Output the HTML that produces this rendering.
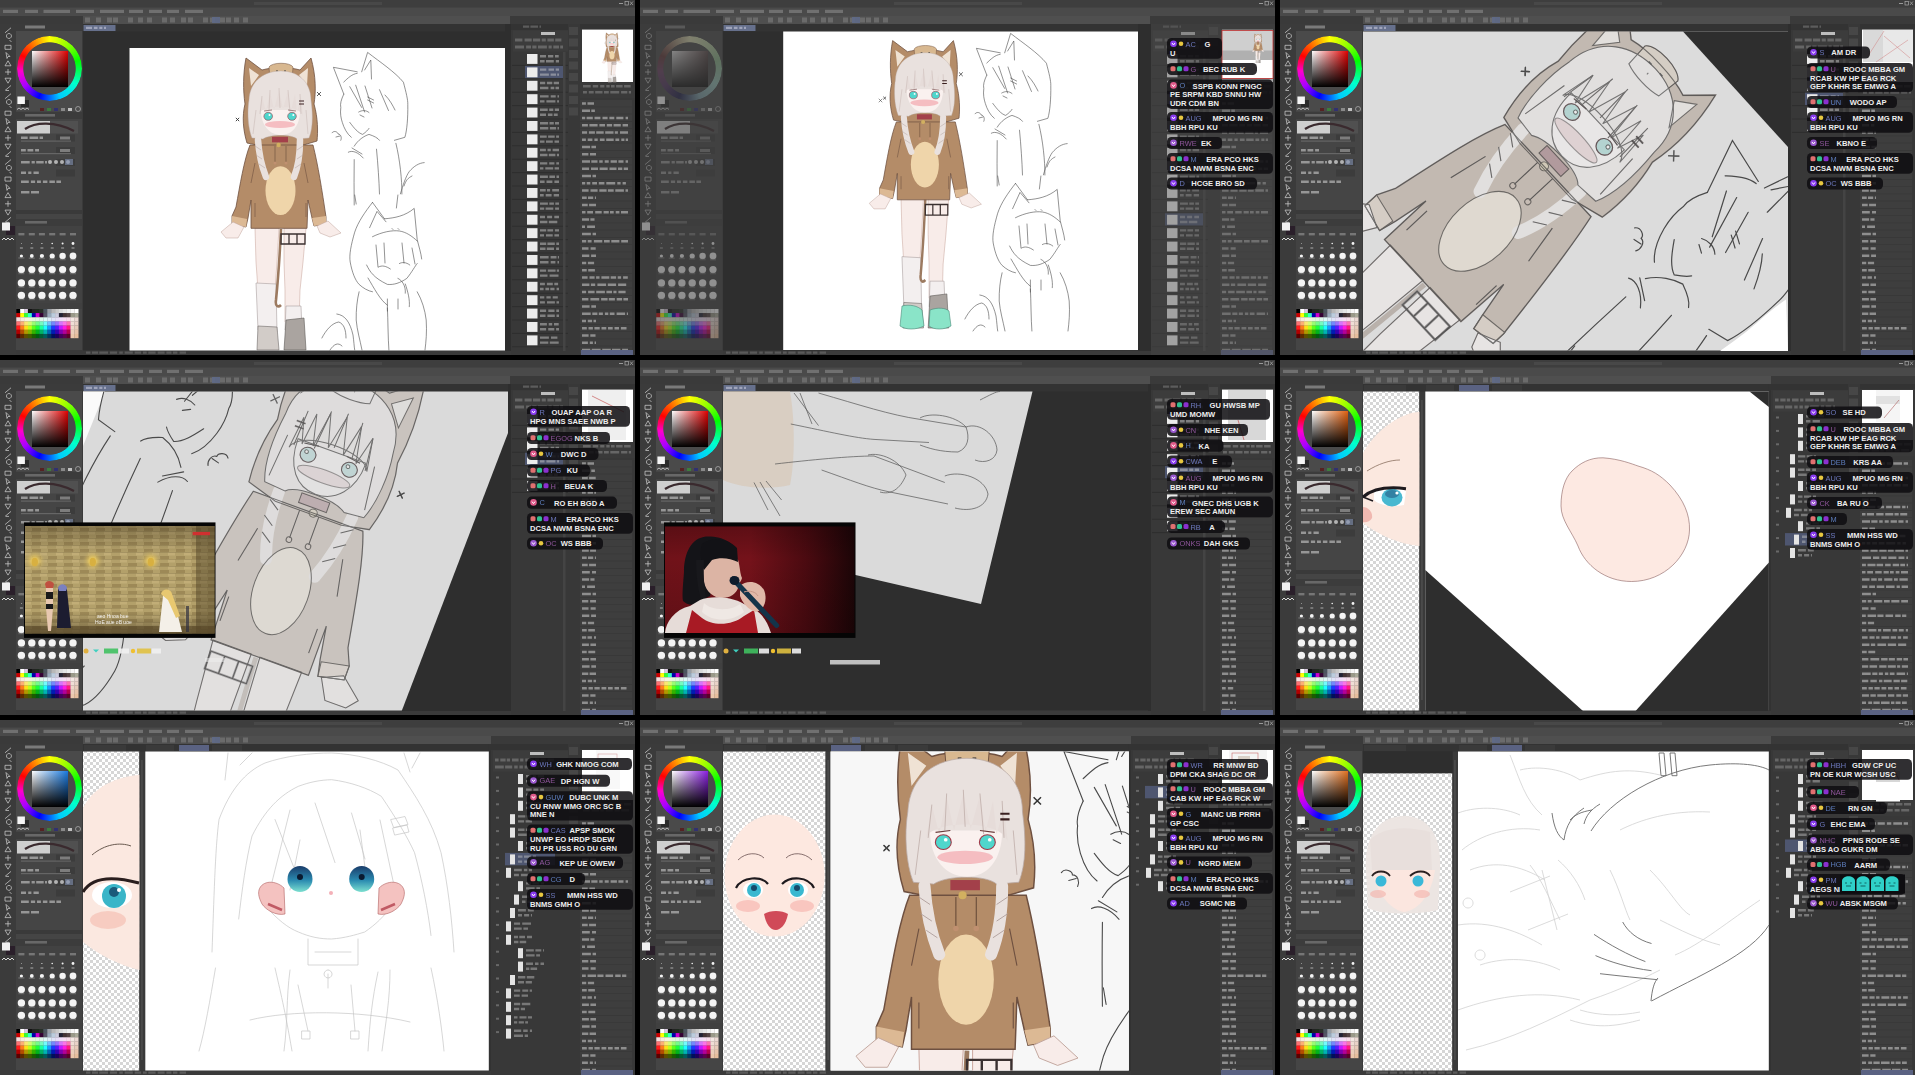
<!DOCTYPE html><html><head><meta charset="utf-8"><style>html,body{margin:0;padding:0;background:#000;width:1915px;height:1075px;overflow:hidden;font-family:"Liberation Sans",sans-serif}.cell{position:absolute;width:635px;height:355px;overflow:hidden;background:#3a3a3a}.cell>svg{position:absolute;left:0;top:0}.wheel{position:absolute;width:65px;height:65px;border-radius:50%;background:conic-gradient(#ff0 0deg,#8f0 40deg,#0f0 75deg,#0fc 120deg,#0cf 160deg,#00f 200deg,#a0f 235deg,#f0c 265deg,#f00 295deg,#f80 330deg,#ff0 360deg);-webkit-mask:radial-gradient(circle,transparent 25.8px,#000 26.6px);mask:radial-gradient(circle,transparent 25.8px,#000 26.6px)}.sv{position:absolute;width:36px;height:36px}</style></head><body><svg width="0" height="0" style="position:absolute"><defs><pattern id="chk" width="6" height="6" patternUnits="userSpaceOnUse"><rect width="6" height="6" fill="#fff"/><rect width="3" height="3" fill="#d6d6d6"/><rect x="3" y="3" width="3" height="3" fill="#d6d6d6"/></pattern><g id="pal"><rect x="0.0" y="0.0" width="4.1" height="4.3" fill="#000" /><rect x="3.9" y="0.0" width="4.1" height="4.3" fill="#fff" /><rect x="7.8" y="0.0" width="4.1" height="4.3" fill="#d8c8e0" /><rect x="11.6" y="0.0" width="4.1" height="4.3" fill="#111" /><rect x="15.5" y="0.0" width="4.1" height="4.3" fill="#222" /><rect x="19.4" y="0.0" width="4.1" height="4.3" fill="#1e2a1e" /><rect x="23.2" y="0.0" width="4.1" height="4.3" fill="#283028" /><rect x="27.1" y="0.0" width="4.1" height="4.3" fill="#4b5560" /><rect x="31.0" y="0.0" width="4.1" height="4.3" fill="#9aa0a8" /><rect x="34.9" y="0.0" width="4.1" height="4.3" fill="#b8b8b8" /><rect x="38.8" y="0.0" width="4.1" height="4.3" fill="#c8c8c8" /><rect x="42.6" y="0.0" width="4.1" height="4.3" fill="#d8d8d8" /><rect x="46.5" y="0.0" width="4.1" height="4.3" fill="#e4e4e4" /><rect x="50.4" y="0.0" width="4.1" height="4.3" fill="#eeeeee" /><rect x="54.2" y="0.0" width="4.1" height="4.3" fill="#f6f6f6" /><rect x="58.1" y="0.0" width="4.1" height="4.3" fill="#ffffff" /><rect x="0.0" y="4.1" width="4.1" height="4.3" fill="#c00" /><rect x="3.9" y="4.1" width="4.1" height="4.3" fill="#ff0" /><rect x="7.8" y="4.1" width="4.1" height="4.3" fill="#3f3" /><rect x="11.6" y="4.1" width="4.1" height="4.3" fill="#3fc" /><rect x="15.5" y="4.1" width="4.1" height="4.3" fill="#00a" /><rect x="19.4" y="4.1" width="4.1" height="4.3" fill="#c0c" /><rect x="23.2" y="4.1" width="4.1" height="4.3" fill="#303" /><rect x="27.1" y="4.1" width="4.1" height="4.3" fill="#556" /><rect x="31.0" y="4.1" width="4.1" height="4.3" fill="#9ab" /><rect x="34.9" y="4.1" width="4.1" height="4.3" fill="#bcd" /><rect x="38.8" y="4.1" width="4.1" height="4.3" fill="#ccd" /><rect x="42.6" y="4.1" width="4.1" height="4.3" fill="#223" /><rect x="46.5" y="4.1" width="4.1" height="4.3" fill="#433" /><rect x="50.4" y="4.1" width="4.1" height="4.3" fill="#544" /><rect x="54.2" y="4.1" width="4.1" height="4.3" fill="#998" /><rect x="58.1" y="4.1" width="4.1" height="4.3" fill="#aa9" /><rect x="0.0" y="8.3" width="4.1" height="4.3" fill="hsl(0,60%,92%)" /><rect x="3.9" y="8.3" width="4.1" height="4.3" fill="hsl(26,60%,92%)" /><rect x="7.8" y="8.3" width="4.1" height="4.3" fill="hsl(51,60%,92%)" /><rect x="11.6" y="8.3" width="4.1" height="4.3" fill="hsl(77,60%,92%)" /><rect x="15.5" y="8.3" width="4.1" height="4.3" fill="hsl(103,60%,92%)" /><rect x="19.4" y="8.3" width="4.1" height="4.3" fill="hsl(129,60%,92%)" /><rect x="23.2" y="8.3" width="4.1" height="4.3" fill="hsl(154,60%,92%)" /><rect x="27.1" y="8.3" width="4.1" height="4.3" fill="hsl(180,60%,92%)" /><rect x="31.0" y="8.3" width="4.1" height="4.3" fill="hsl(206,60%,92%)" /><rect x="34.9" y="8.3" width="4.1" height="4.3" fill="hsl(231,60%,92%)" /><rect x="38.8" y="8.3" width="4.1" height="4.3" fill="hsl(257,60%,92%)" /><rect x="42.6" y="8.3" width="4.1" height="4.3" fill="hsl(283,60%,92%)" /><rect x="46.5" y="8.3" width="4.1" height="4.3" fill="hsl(309,60%,92%)" /><rect x="50.4" y="8.3" width="4.1" height="4.3" fill="hsl(334,60%,92%)" /><rect x="54.2" y="8.3" width="4.1" height="4.3" fill="hsl(15,40%,92%)" /><rect x="58.1" y="8.3" width="4.1" height="4.3" fill="hsl(15,40%,88%)" /><rect x="0.0" y="12.4" width="4.1" height="4.3" fill="hsl(0,95%,72%)" /><rect x="3.9" y="12.4" width="4.1" height="4.3" fill="hsl(26,95%,72%)" /><rect x="7.8" y="12.4" width="4.1" height="4.3" fill="hsl(51,95%,72%)" /><rect x="11.6" y="12.4" width="4.1" height="4.3" fill="hsl(77,95%,72%)" /><rect x="15.5" y="12.4" width="4.1" height="4.3" fill="hsl(103,95%,72%)" /><rect x="19.4" y="12.4" width="4.1" height="4.3" fill="hsl(129,95%,72%)" /><rect x="23.2" y="12.4" width="4.1" height="4.3" fill="hsl(154,95%,72%)" /><rect x="27.1" y="12.4" width="4.1" height="4.3" fill="hsl(180,95%,72%)" /><rect x="31.0" y="12.4" width="4.1" height="4.3" fill="hsl(206,95%,72%)" /><rect x="34.9" y="12.4" width="4.1" height="4.3" fill="hsl(231,95%,72%)" /><rect x="38.8" y="12.4" width="4.1" height="4.3" fill="hsl(257,95%,72%)" /><rect x="42.6" y="12.4" width="4.1" height="4.3" fill="hsl(283,95%,72%)" /><rect x="46.5" y="12.4" width="4.1" height="4.3" fill="hsl(309,95%,72%)" /><rect x="50.4" y="12.4" width="4.1" height="4.3" fill="hsl(334,95%,72%)" /><rect x="54.2" y="12.4" width="4.1" height="4.3" fill="hsl(18,45%,89%)" /><rect x="58.1" y="12.4" width="4.1" height="4.3" fill="hsl(18,45%,85%)" /><rect x="0.0" y="16.6" width="4.1" height="4.3" fill="hsl(0,100%,55%)" /><rect x="3.9" y="16.6" width="4.1" height="4.3" fill="hsl(26,100%,55%)" /><rect x="7.8" y="16.6" width="4.1" height="4.3" fill="hsl(51,100%,55%)" /><rect x="11.6" y="16.6" width="4.1" height="4.3" fill="hsl(77,100%,55%)" /><rect x="15.5" y="16.6" width="4.1" height="4.3" fill="hsl(103,100%,55%)" /><rect x="19.4" y="16.6" width="4.1" height="4.3" fill="hsl(129,100%,55%)" /><rect x="23.2" y="16.6" width="4.1" height="4.3" fill="hsl(154,100%,55%)" /><rect x="27.1" y="16.6" width="4.1" height="4.3" fill="hsl(180,100%,55%)" /><rect x="31.0" y="16.6" width="4.1" height="4.3" fill="hsl(206,100%,55%)" /><rect x="34.9" y="16.6" width="4.1" height="4.3" fill="hsl(231,100%,55%)" /><rect x="38.8" y="16.6" width="4.1" height="4.3" fill="hsl(257,100%,55%)" /><rect x="42.6" y="16.6" width="4.1" height="4.3" fill="hsl(283,100%,55%)" /><rect x="46.5" y="16.6" width="4.1" height="4.3" fill="hsl(309,100%,55%)" /><rect x="50.4" y="16.6" width="4.1" height="4.3" fill="hsl(334,100%,55%)" /><rect x="54.2" y="16.6" width="4.1" height="4.3" fill="hsl(21,50%,86%)" /><rect x="58.1" y="16.6" width="4.1" height="4.3" fill="hsl(21,50%,82%)" /><rect x="0.0" y="20.7" width="4.1" height="4.3" fill="hsl(0,100%,35%)" /><rect x="3.9" y="20.7" width="4.1" height="4.3" fill="hsl(26,100%,35%)" /><rect x="7.8" y="20.7" width="4.1" height="4.3" fill="hsl(51,100%,35%)" /><rect x="11.6" y="20.7" width="4.1" height="4.3" fill="hsl(77,100%,35%)" /><rect x="15.5" y="20.7" width="4.1" height="4.3" fill="hsl(103,100%,35%)" /><rect x="19.4" y="20.7" width="4.1" height="4.3" fill="hsl(129,100%,35%)" /><rect x="23.2" y="20.7" width="4.1" height="4.3" fill="hsl(154,100%,35%)" /><rect x="27.1" y="20.7" width="4.1" height="4.3" fill="hsl(180,100%,35%)" /><rect x="31.0" y="20.7" width="4.1" height="4.3" fill="hsl(206,100%,35%)" /><rect x="34.9" y="20.7" width="4.1" height="4.3" fill="hsl(231,100%,35%)" /><rect x="38.8" y="20.7" width="4.1" height="4.3" fill="hsl(257,100%,35%)" /><rect x="42.6" y="20.7" width="4.1" height="4.3" fill="hsl(283,100%,35%)" /><rect x="46.5" y="20.7" width="4.1" height="4.3" fill="hsl(309,100%,35%)" /><rect x="50.4" y="20.7" width="4.1" height="4.3" fill="hsl(334,100%,35%)" /><rect x="54.2" y="20.7" width="4.1" height="4.3" fill="hsl(24,55%,83%)" /><rect x="58.1" y="20.7" width="4.1" height="4.3" fill="hsl(24,55%,79%)" /><rect x="0.0" y="24.9" width="4.1" height="4.3" fill="hsl(0,100%,18%)" /><rect x="3.9" y="24.9" width="4.1" height="4.3" fill="hsl(26,100%,18%)" /><rect x="7.8" y="24.9" width="4.1" height="4.3" fill="hsl(51,100%,18%)" /><rect x="11.6" y="24.9" width="4.1" height="4.3" fill="hsl(77,100%,18%)" /><rect x="15.5" y="24.9" width="4.1" height="4.3" fill="hsl(103,100%,18%)" /><rect x="19.4" y="24.9" width="4.1" height="4.3" fill="hsl(129,100%,18%)" /><rect x="23.2" y="24.9" width="4.1" height="4.3" fill="hsl(154,100%,18%)" /><rect x="27.1" y="24.9" width="4.1" height="4.3" fill="hsl(180,100%,18%)" /><rect x="31.0" y="24.9" width="4.1" height="4.3" fill="hsl(206,100%,18%)" /><rect x="34.9" y="24.9" width="4.1" height="4.3" fill="hsl(231,100%,18%)" /><rect x="38.8" y="24.9" width="4.1" height="4.3" fill="hsl(257,100%,18%)" /><rect x="42.6" y="24.9" width="4.1" height="4.3" fill="hsl(283,100%,18%)" /><rect x="46.5" y="24.9" width="4.1" height="4.3" fill="hsl(309,100%,18%)" /><rect x="50.4" y="24.9" width="4.1" height="4.3" fill="hsl(334,100%,18%)" /><rect x="54.2" y="24.9" width="4.1" height="4.3" fill="hsl(27,60%,80%)" /><rect x="58.1" y="24.9" width="4.1" height="4.3" fill="hsl(27,60%,76%)" /></g><g id="dots"><rect x="18.4" y="233.0" width="6.0" height="2.4" fill="#9a9a9a" opacity="0.6"/><rect x="28.8" y="233.0" width="6.0" height="2.4" fill="#9a9a9a" opacity="0.6"/><rect x="38.9" y="233.0" width="6.0" height="2.4" fill="#9a9a9a" opacity="0.6"/><rect x="49.2" y="233.0" width="6.0" height="2.4" fill="#9a9a9a" opacity="0.6"/><rect x="59.6" y="233.0" width="6.0" height="2.4" fill="#9a9a9a" opacity="0.6"/><rect x="70.0" y="233.0" width="6.0" height="2.4" fill="#9a9a9a" opacity="0.6"/><circle cx="21.4" cy="243.5" r="0.4" fill="#f4f4f4"/><circle cx="31.8" cy="243.5" r="0.5" fill="#f4f4f4"/><circle cx="41.9" cy="243.5" r="0.6" fill="#f4f4f4"/><circle cx="52.2" cy="243.5" r="0.8" fill="#f4f4f4"/><circle cx="62.6" cy="243.5" r="1.0" fill="#f4f4f4"/><circle cx="73" cy="243.5" r="1.4" fill="#f4f4f4"/><circle cx="21.4" cy="256" r="1.6" fill="#f4f4f4"/><rect x="18.4" y="257.1" width="6.0" height="1.6" fill="#8a8a8a" opacity="0.5"/><circle cx="31.8" cy="256" r="1.9" fill="#f4f4f4"/><rect x="28.8" y="257.4" width="6.0" height="1.6" fill="#8a8a8a" opacity="0.5"/><circle cx="41.9" cy="256" r="2.1" fill="#f4f4f4"/><rect x="38.9" y="257.6" width="6.0" height="1.6" fill="#8a8a8a" opacity="0.5"/><circle cx="52.2" cy="256" r="2.6" fill="#f4f4f4"/><rect x="49.2" y="258.1" width="6.0" height="1.6" fill="#8a8a8a" opacity="0.5"/><circle cx="62.6" cy="256" r="3.2" fill="#f4f4f4"/><rect x="59.6" y="258.7" width="6.0" height="1.6" fill="#8a8a8a" opacity="0.5"/><circle cx="73" cy="256" r="3.4" fill="#f4f4f4"/><rect x="70.0" y="258.9" width="6.0" height="1.6" fill="#8a8a8a" opacity="0.5"/><circle cx="21.4" cy="269.6" r="3.6" fill="#f4f4f4"/><rect x="18.4" y="272.7" width="6.0" height="1.6" fill="#8a8a8a" opacity="0.5"/><circle cx="31.8" cy="269.6" r="3.6" fill="#f4f4f4"/><rect x="28.8" y="272.7" width="6.0" height="1.6" fill="#8a8a8a" opacity="0.5"/><circle cx="41.9" cy="269.6" r="3.6" fill="#f4f4f4"/><rect x="38.9" y="272.7" width="6.0" height="1.6" fill="#8a8a8a" opacity="0.5"/><circle cx="52.2" cy="269.6" r="3.6" fill="#f4f4f4"/><rect x="49.2" y="272.7" width="6.0" height="1.6" fill="#8a8a8a" opacity="0.5"/><circle cx="62.6" cy="269.6" r="3.6" fill="#f4f4f4"/><rect x="59.6" y="272.7" width="6.0" height="1.6" fill="#8a8a8a" opacity="0.5"/><circle cx="73" cy="269.6" r="3.6" fill="#f4f4f4"/><rect x="70.0" y="272.7" width="6.0" height="1.6" fill="#8a8a8a" opacity="0.5"/><circle cx="21.4" cy="283" r="3.7" fill="#f4f4f4"/><rect x="18.4" y="286.2" width="6.0" height="1.6" fill="#8a8a8a" opacity="0.5"/><circle cx="31.8" cy="283" r="3.7" fill="#f4f4f4"/><rect x="28.8" y="286.2" width="6.0" height="1.6" fill="#8a8a8a" opacity="0.5"/><circle cx="41.9" cy="283" r="3.7" fill="#f4f4f4"/><rect x="38.9" y="286.2" width="6.0" height="1.6" fill="#8a8a8a" opacity="0.5"/><circle cx="52.2" cy="283" r="3.7" fill="#f4f4f4"/><rect x="49.2" y="286.2" width="6.0" height="1.6" fill="#8a8a8a" opacity="0.5"/><circle cx="62.6" cy="283" r="3.7" fill="#f4f4f4"/><rect x="59.6" y="286.2" width="6.0" height="1.6" fill="#8a8a8a" opacity="0.5"/><circle cx="73" cy="283" r="3.7" fill="#f4f4f4"/><rect x="70.0" y="286.2" width="6.0" height="1.6" fill="#8a8a8a" opacity="0.5"/><circle cx="21.4" cy="295.4" r="3.7" fill="#f4f4f4"/><rect x="18.4" y="298.6" width="6.0" height="1.6" fill="#8a8a8a" opacity="0.5"/><circle cx="31.8" cy="295.4" r="3.7" fill="#f4f4f4"/><rect x="28.8" y="298.6" width="6.0" height="1.6" fill="#8a8a8a" opacity="0.5"/><circle cx="41.9" cy="295.4" r="3.7" fill="#f4f4f4"/><rect x="38.9" y="298.6" width="6.0" height="1.6" fill="#8a8a8a" opacity="0.5"/><circle cx="52.2" cy="295.4" r="3.7" fill="#f4f4f4"/><rect x="49.2" y="298.6" width="6.0" height="1.6" fill="#8a8a8a" opacity="0.5"/><circle cx="62.6" cy="295.4" r="3.7" fill="#f4f4f4"/><rect x="59.6" y="298.6" width="6.0" height="1.6" fill="#8a8a8a" opacity="0.5"/><circle cx="73" cy="295.4" r="3.7" fill="#f4f4f4"/><rect x="70.0" y="298.6" width="6.0" height="1.6" fill="#8a8a8a" opacity="0.5"/><rect x="19.9" y="247.0" width="3.0" height="2.0" fill="#aaa" opacity="0.5"/><rect x="30.3" y="247.0" width="3.0" height="2.0" fill="#aaa" opacity="0.5"/><rect x="40.4" y="247.0" width="3.0" height="2.0" fill="#aaa" opacity="0.5"/><rect x="50.7" y="247.0" width="3.0" height="2.0" fill="#aaa" opacity="0.5"/><rect x="61.1" y="247.0" width="3.0" height="2.0" fill="#aaa" opacity="0.5"/><rect x="71.5" y="247.0" width="3.0" height="2.0" fill="#aaa" opacity="0.5"/></g><g id="tools"><path d="M5,32.8 l6,-5" stroke="#d4d4d4" stroke-width="1" fill="none" opacity="0.7"/><path d="M9,38.5 a2.5,2.5 0 1 0 -0.1,0 M9.5,40.0 l2,2" stroke="#d4d4d4" stroke-width="1" fill="none" opacity="0.7"/><path d="M5,45.3 h6 v4 h-6 z" stroke="#d4d4d4" stroke-width="1" fill="none" opacity="0.7"/><path d="M6,52.5 l4,4 l-2,0 l-1,2 z" stroke="#d4d4d4" stroke-width="1" fill="none" opacity="0.7"/><path d="M5,65.8 l3,-5 l3,5 z" stroke="#d4d4d4" stroke-width="1" fill="none" opacity="0.7"/><path d="M8,69.0 v6 M5,72.0 h6" stroke="#d4d4d4" stroke-width="1" fill="none" opacity="0.7"/><path d="M5,78.2 l6,0 l-3,5 z" stroke="#d4d4d4" stroke-width="1" fill="none" opacity="0.7"/><path d="M5,90.5 l6,-5 M6,90.5 h3" stroke="#d4d4d4" stroke-width="1" fill="none" opacity="0.7"/><path d="M5,98.7 l6,-5" stroke="#d4d4d4" stroke-width="1" fill="none" opacity="0.7"/><path d="M9,104.5 a2.5,2.5 0 1 0 -0.1,0 M9.5,106.0 l2,2" stroke="#d4d4d4" stroke-width="1" fill="none" opacity="0.7"/><path d="M5,111.2 h6 v4 h-6 z" stroke="#d4d4d4" stroke-width="1" fill="none" opacity="0.7"/><path d="M6,118.4 l4,4 l-2,0 l-1,2 z" stroke="#d4d4d4" stroke-width="1" fill="none" opacity="0.7"/><path d="M5,131.7 l3,-5 l3,5 z" stroke="#d4d4d4" stroke-width="1" fill="none" opacity="0.7"/><path d="M8,134.9 v6 M5,137.9 h6" stroke="#d4d4d4" stroke-width="1" fill="none" opacity="0.7"/><path d="M5,144.2 l6,0 l-3,5 z" stroke="#d4d4d4" stroke-width="1" fill="none" opacity="0.7"/><path d="M5,156.4 l6,-5 M6,156.4 h3" stroke="#d4d4d4" stroke-width="1" fill="none" opacity="0.7"/><path d="M5,164.6 l6,-5" stroke="#d4d4d4" stroke-width="1" fill="none" opacity="0.7"/><path d="M9,170.4 a2.5,2.5 0 1 0 -0.1,0 M9.5,171.9 l2,2" stroke="#d4d4d4" stroke-width="1" fill="none" opacity="0.7"/><path d="M5,177.1 h6 v4 h-6 z" stroke="#d4d4d4" stroke-width="1" fill="none" opacity="0.7"/><path d="M6,184.4 l4,4 l-2,0 l-1,2 z" stroke="#d4d4d4" stroke-width="1" fill="none" opacity="0.7"/><path d="M5,197.6 l3,-5 l3,5 z" stroke="#d4d4d4" stroke-width="1" fill="none" opacity="0.7"/><path d="M8,200.8 v6 M5,203.8 h6" stroke="#d4d4d4" stroke-width="1" fill="none" opacity="0.7"/><path d="M5,210.1 l6,0 l-3,5 z" stroke="#d4d4d4" stroke-width="1" fill="none" opacity="0.7"/><path d="M5,222.3 l6,-5 M6,222.3 h3" stroke="#d4d4d4" stroke-width="1" fill="none" opacity="0.7"/><rect x="6.0" y="226.0" width="9.0" height="9.0" fill="#2a1f2a" /><rect x="2.0" y="222.5" width="8.0" height="8.0" fill="#f2f2f2" /><path d="M2,240 l2,-2 l2,2 l2,-2 l2,2 l2,-2 l2,2" stroke="#ddd" stroke-width="1" fill="none"/></g><g id="menu"><rect x="3.0" y="9.8" width="15.0" height="3.2" fill="#c9c9c9" opacity="0.3"/><rect x="25.0" y="9.8" width="13.0" height="3.2" fill="#c9c9c9" opacity="0.3"/><rect x="43.5" y="9.8" width="26.5" height="3.2" fill="#c9c9c9" opacity="0.3"/><rect x="76.0" y="9.8" width="18.0" height="3.2" fill="#c9c9c9" opacity="0.3"/><rect x="100.0" y="9.8" width="24.0" height="3.2" fill="#c9c9c9" opacity="0.3"/><rect x="129.0" y="9.8" width="14.0" height="3.2" fill="#c9c9c9" opacity="0.3"/><rect x="149.0" y="9.8" width="13.0" height="3.2" fill="#c9c9c9" opacity="0.3"/><rect x="167.0" y="9.8" width="12.0" height="3.2" fill="#c9c9c9" opacity="0.3"/><rect x="185.0" y="9.8" width="18.0" height="3.2" fill="#c9c9c9" opacity="0.3"/><rect x="85.0" y="17.5" width="5.0" height="5.0" fill="#8d8d8d" opacity="0.45"/><rect x="96.0" y="17.5" width="5.0" height="5.0" fill="#8d8d8d" opacity="0.45"/><rect x="107.0" y="17.5" width="5.0" height="5.0" fill="#8d8d8d" opacity="0.45"/><rect x="113.0" y="17.5" width="5.0" height="5.0" fill="#8d8d8d" opacity="0.45"/><rect x="128.0" y="17.5" width="5.0" height="5.0" fill="#8d8d8d" opacity="0.45"/><rect x="138.0" y="17.5" width="5.0" height="5.0" fill="#8d8d8d" opacity="0.45"/><rect x="147.0" y="17.5" width="5.0" height="5.0" fill="#8d8d8d" opacity="0.45"/><rect x="162.0" y="17.5" width="5.0" height="5.0" fill="#8d8d8d" opacity="0.45"/><rect x="170.0" y="17.5" width="5.0" height="5.0" fill="#8d8d8d" opacity="0.45"/><rect x="181.0" y="17.5" width="5.0" height="5.0" fill="#8d8d8d" opacity="0.45"/><rect x="188.0" y="17.5" width="5.0" height="5.0" fill="#8d8d8d" opacity="0.45"/><rect x="203.0" y="17.5" width="5.0" height="5.0" fill="#8d8d8d" opacity="0.45"/><rect x="210.0" y="17.5" width="5.0" height="5.0" fill="#8d8d8d" opacity="0.45"/><rect x="220.0" y="17.5" width="5.0" height="5.0" fill="#8d8d8d" opacity="0.45"/><rect x="226.0" y="17.5" width="5.0" height="5.0" fill="#8d8d8d" opacity="0.45"/><rect x="234.0" y="17.5" width="5.0" height="5.0" fill="#8d8d8d" opacity="0.45"/><rect x="243.0" y="17.5" width="5.0" height="5.0" fill="#8d8d8d" opacity="0.45"/><rect x="212.0" y="17.0" width="8.0" height="6.0" fill="#5f6a88" opacity="0.9"/><rect x="254.0" y="2.0" width="128.0" height="3.0" fill="#7a7a7a" opacity="0.18"/><rect x="619.0" y="3.0" width="4.0" height="1.0" fill="#999" /><rect x="625.0" y="1.5" width="3.5" height="3.5" fill="none" stroke="#aaa" stroke-width="0.7"/><path d="M630,1.5 l3,3.5 M633,1.5 l-3,3.5" stroke="#aaa" stroke-width="0.7"/></g><g id="lpanel"><rect x="16.0" y="24.0" width="66.0" height="326.0" fill="#454545" /><rect x="16.0" y="24.0" width="66.0" height="7.0" fill="#3b3b3b" /><rect x="25.0" y="25.5" width="20.0" height="3.0" fill="#c8c8c8" opacity="0.45"/><rect x="16.0" y="31.0" width="66.0" height="80.0" fill="#4a4a4a" /><rect x="21.0" y="100.0" width="8.0" height="7.0" fill="#2a2a2a" /><rect x="17.4" y="96.5" width="7.5" height="7.5" fill="#f5f5f5" /><path d="M17,109.5 l2,-1.5 l2,1.5 l2,-1.5 l2,1.5 l2,-1.5 l2,1.5" stroke="#ddd" stroke-width="0.8" fill="none"/><rect x="40.0" y="108.0" width="4.0" height="3.0" fill="#5a1818" opacity="0.8"/><rect x="47.0" y="108.0" width="4.0" height="3.0" fill="#3a8a3a" opacity="0.8"/><rect x="54.0" y="108.0" width="4.0" height="3.0" fill="#2a2a7a" opacity="0.8"/><rect x="61.0" y="108.0" width="4.0" height="3.0" fill="#999" opacity="0.8"/><rect x="68.0" y="108.0" width="4.0" height="3.0" fill="#ddd" opacity="0.8"/><circle cx="78" cy="109" r="2.5" fill="none" stroke="#aaa" stroke-width="0.8"/><rect x="16.0" y="112.0" width="66.0" height="7.0" fill="#3c3c3c" /><rect x="25.0" y="114.0" width="30.0" height="2.6" fill="#aaa" opacity="0.4"/><rect x="17.0" y="121.0" width="61.0" height="12.5" fill="#505050" /><rect x="17.0" y="121.0" width="33.0" height="12.5" fill="#cfcfcf" /><path d="M25,129 C35,122 55,121 74,131" stroke="#3a2a2e" stroke-width="2.2" fill="none"/><rect x="56.0" y="134.5" width="19.0" height="7.0" fill="#3c3c3c" /><rect x="56.0" y="147.0" width="19.0" height="7.0" fill="#3c3c3c" /><rect x="56.0" y="159.0" width="19.0" height="7.0" fill="#3c3c3c" /><rect x="56.0" y="169.5" width="19.0" height="7.0" fill="#3c3c3c" /><path d="M21 136.5h6.7v2.6h-6.7zM29.5 136.5h8.7v2.6h-8.7zM39.6 136.5h3.4v2.6h-3.4z" fill="#d8d8d8" opacity="0.55"/><path d="M21 149h4.8v2.6h-4.8zM27.5 149h5.8v2.6h-5.8zM35.1 149h3.9v2.6h-3.9z" fill="#d8d8d8" opacity="0.55"/><path d="M21 161h8.7v2.6h-8.7zM31.6 161h3.2v2.6h-3.2zM36.2 161h7.5v2.6h-7.5zM45 161h2v2.6h-2z" fill="#d8d8d8" opacity="0.55"/><path d="M21 171.5h5v2.6h-5zM28.2 171.5h3.2v2.6h-3.2zM33.5 171.5h5.3v2.6h-5.3z" fill="#d8d8d8" opacity="0.55"/><path d="M21 180.5h7.8v2.6h-7.8zM30.9 180.5h4.2v2.6h-4.2zM37 180.5h3.9v2.6h-3.9zM42.9 180.5h4.5v2.6h-4.5zM49.4 180.5h5.5v2.6h-5.5zM56.4 180.5h4.6v2.6h-4.6z" fill="#d8d8d8" opacity="0.55"/><path d="M21 191h8.4v2.6h-8.4zM31 191h8v2.6h-8z" fill="#d8d8d8" opacity="0.55"/><rect x="60.0" y="136.5" width="10.0" height="3.0" fill="#ccc" opacity="0.45"/><rect x="60.0" y="149.0" width="10.0" height="3.0" fill="#ccc" opacity="0.45"/><rect x="21.0" y="140.5" width="50.0" height="1.2" fill="#666" /><rect x="21.0" y="153.0" width="50.0" height="1.2" fill="#666" /><circle cx="50" cy="162" r="2" fill="#cfcfcf" opacity="0.8"/><circle cx="56" cy="162" r="2" fill="#cfcfcf" opacity="0.8"/><circle cx="62" cy="162" r="2" fill="#cfcfcf" opacity="0.8"/><circle cx="68" cy="162" r="2" fill="#cfcfcf" opacity="0.8"/><rect x="65.0" y="159.0" width="8.0" height="6.0" fill="#8090b0" opacity="0.6"/><rect x="16.0" y="210.0" width="66.0" height="4.0" fill="#3a3a3a" /><rect x="16.0" y="219.0" width="66.0" height="7.0" fill="#3c3c3c" /><rect x="25.0" y="221.0" width="22.0" height="2.6" fill="#aaa" opacity="0.4"/><rect x="16.0" y="226.0" width="66.0" height="78.0" fill="#424242" /><use href="#dots"/><rect x="16.0" y="303.0" width="66.0" height="6.0" fill="#404040" /><use href="#pal" transform="translate(16.3,309)"/></g><g id="girllegs"><path d="M255,228 L279,228 L277,262 L275,290 L273,322 L259,322 L258,290 L256,262 Z" fill="#f8ece9" stroke="#cfaea6" stroke-width="0.6"/><path d="M284,228 L306,228 L303,262 L300,290 L299,322 L285,322 L285,290 L284,262 Z" fill="#f8ece9" stroke="#cfaea6" stroke-width="0.6"/><path d="M256,283 L276,284 L277,332 L258,330 Z" fill="#f3efef" stroke="#aaa0a0" stroke-width="0.6"/><path d="M286,306 L301,306 L302,330 L285,330 Z" fill="#f3efef" stroke="#aaa0a0" stroke-width="0.6"/><path d="M258,326 L277,327 L279,350 L257,350 Z" fill="#d2ccc8" stroke="#6e6a68" stroke-width="0.6"/><path d="M286,320 L304,318 L306,350 L284,350 Z" fill="#aaa4a0" stroke="#5e5a58" stroke-width="0.6"/><path d="M281,229 C280,250 278,280 276,300 C275,306 278,308 281,305" stroke="#9c7a60" stroke-width="2.6" fill="none"/><path d="M281,234 h24 v10 h-24 z M289,234 v10 M297,234 v10" fill="none" stroke="#3a3030" stroke-width="1.3"/></g><g id="girlup"><path d="M246,58 L262,70 C272,67 290,67 300,70 L311,58 C316,76 316,92 314,104 C318,118 318,132 317,141 L300,146 L262,146 L247,143 C243,130 242,116 245,104 C243,90 243,74 246,58 Z" fill="#b48c68" stroke="#6e5040" stroke-width="0.8"/><path d="M249,68 L259,75 L251,86 Z M308,68 L299,75 L307,86 Z" fill="#efe2d4"/><path d="M269,67 C272,62 290,62 293,67 L292,79 C286,81 276,81 270,79 Z" fill="#d8b890" stroke="#6e5040" stroke-width="0.5"/><path d="M276,71 h2 M284,71 h2 M280,75 v1" stroke="#222" stroke-width="0.9"/><path d="M250,145 C244,160 240,185 236,207 L232,216 L232,224 L246,227 L248,218 L251,200 L251,228.3 L307,228.3 L308,200 L312,218 L314,226 L326,224 L326,217 C322,190 318,165 313,145 Z" fill="#b48c68" stroke="#6e5040" stroke-width="0.8"/><path d="M232,216 L247,219 L246,227 L232,224 Z M312,218 L326,216 L326,224 L314,226 Z" fill="#dcb994"/><ellipse cx="280.5" cy="190.6" rx="15" ry="24.4" fill="#efd5aa"/><path d="M255,203 v14 M306,203 v14 M251,183 l4,-20 M308,183 l-4,-20" stroke="#6e5040" stroke-width="0.6" fill="none"/><path d="M275,146 v16 M286,146 v16" stroke="#5a4030" stroke-width="0.5"/><circle cx="275" cy="163" r="1.5" fill="#c09070"/><circle cx="286" cy="163" r="1.5" fill="#c09070"/><path d="M221,232 L233,222 L244,227 L238,238 L226,238 Z" fill="#f8ece9" stroke="#bfa39a" stroke-width="0.5"/><path d="M317,226 L328,221 L341,233 L330,237 L320,233 Z" fill="#f8ece9" stroke="#bfa39a" stroke-width="0.5"/><path d="M249,100 C250,80 265,71 281,71 C298,71 311,82 311,100 C313,115 313,128 309,138 L297,139 C292,134 270,134 263,139 L252,138 C248,128 247,112 249,100 Z" fill="#e9e1de" stroke="#b9aaa6" stroke-width="0.4"/><path d="M261,110 C261,126 270,135 281,135 C292,135 300,126 300,110 Z" fill="#faf1ef"/><path d="M259,114 L262,96 L266,112 L270,92 L274,110 L279,90 L283,109 L288,91 L291,111 L295,94 L297,112 L301,98 L303,116 C300,104 262,104 259,114 Z" fill="#e6dcd9"/><path d="M262,96 l-2,18 M270,90 l-1,20 M279,88 l1,20 M288,90 l2,22 M300,94 l1,20 M256,110 l-3,24 M306,110 l2,24" stroke="#c4b4b0" stroke-width="0.5"/><ellipse cx="280" cy="124.5" rx="15" ry="3.6" fill="#f2a6ae" opacity="0.7"/><ellipse cx="268.2" cy="116.3" rx="4.3" ry="4" fill="#4fd6cc" stroke="#a03a4a" stroke-width="0.6"/><ellipse cx="292" cy="116.3" rx="4.3" ry="4" fill="#4fd6cc" stroke="#a03a4a" stroke-width="0.6"/><circle cx="269.5" cy="115" r="1" fill="#fff"/><circle cx="293.3" cy="115" r="1" fill="#fff"/><path d="M264,111 l8,-1 M288,110 l8,1" stroke="#6a3a3a" stroke-width="0.6"/><path d="M299,101 h5 M299,104 h5" stroke="#3a2020" stroke-width="1.1"/><rect x="272" y="136.8" width="16" height="5.5" fill="#a3404a"/><circle cx="278.6" cy="145" r="2.2" fill="#d2b060"/><path d="M258,140 C259,155 262,167 266,177 M300,140 C300,155 298,167 294,177" stroke="#e9e1de" stroke-width="6.5" fill="none" stroke-linecap="round"/><path d="M255,146 l6,4 M256,155 l6,4 M259,164 l6,4 M303,146 l-6,4 M303,155 l-6,4 M301,164 l-6,4" stroke="#b0a09c" stroke-width="0.5"/><path d="M236,118 l3,3 M239,118 l-3,3 M317,92 l4,4 M321,92 l-4,4" stroke="#333" stroke-width="0.8"/></g><g id="girl"><use href="#girllegs"/><use href="#girlup"/></g><g id="girlol" stroke="#2e2e2e" stroke-width="0.55" fill="none"><path d="M255,228 L279,228 L277,262 L275,290 L273,322 L259,322 L258,290 L256,262 Z" fill="none"  /><path d="M284,228 L306,228 L303,262 L300,290 L299,322 L285,322 L285,290 L284,262 Z" fill="none"  /><path d="M256,283 L276,284 L277,332 L258,330 Z" fill="none"  /><path d="M286,306 L301,306 L302,330 L285,330 Z" fill="none"  /><path d="M258,326 L277,327 L279,350 L257,350 Z" fill="none"  /><path d="M286,320 L304,318 L306,350 L284,350 Z" fill="none"  /><path d="M281,234 h24 v10 h-24 z M289,234 v10 M297,234 v10" fill="none"  /><path d="M246,58 L262,70 C272,67 290,67 300,70 L311,58 C316,76 316,92 314,104 C318,118 318,132 317,141 L300,146 L262,146 L247,143 C243,130 242,116 245,104 C243,90 243,74 246,58 Z" fill="none"  /><path d="M249,68 L259,75 L251,86 Z M308,68 L299,75 L307,86 Z" fill="none"/><path d="M269,67 C272,62 290,62 293,67 L292,79 C286,81 276,81 270,79 Z" fill="none"  /><path d="M276,71 h2 M284,71 h2 M280,75 v1"  /><path d="M250,145 C244,160 240,185 236,207 L232,216 L232,224 L246,227 L248,218 L251,200 L251,228.3 L307,228.3 L308,200 L312,218 L314,226 L326,224 L326,217 C322,190 318,165 313,145 Z" fill="none"  /><path d="M232,216 L247,219 L246,227 L232,224 Z M312,218 L326,216 L326,224 L314,226 Z" fill="none"/><ellipse cx="280.5" cy="190.6" rx="15" ry="24.4" fill="none"/><path d="M255,203 v14 M306,203 v14 M251,183 l4,-20 M308,183 l-4,-20"   fill="none"/><path d="M275,146 v16 M286,146 v16"  /><circle cx="275" cy="163" r="1.5" fill="none"/><circle cx="286" cy="163" r="1.5" fill="none"/><path d="M221,232 L233,222 L244,227 L238,238 L226,238 Z" fill="none"  /><path d="M317,226 L328,221 L341,233 L330,237 L320,233 Z" fill="none"  /><path d="M249,100 C250,80 265,71 281,71 C298,71 311,82 311,100 C313,115 313,128 309,138 L297,139 C292,134 270,134 263,139 L252,138 C248,128 247,112 249,100 Z" fill="none"  /><path d="M261,110 C261,126 270,135 281,135 C292,135 300,126 300,110 Z" fill="none"/><path d="M259,114 L262,96 L266,112 L270,92 L274,110 L279,90 L283,109 L288,91 L291,111 L295,94 L297,112 L301,98 L303,116 C300,104 262,104 259,114 Z" fill="none"/><path d="M262,96 l-2,18 M270,90 l-1,20 M279,88 l1,20 M288,90 l2,22 M300,94 l1,20 M256,110 l-3,24 M306,110 l2,24"  /><ellipse cx="280" cy="124.5" rx="15" ry="3.6" fill="none" opacity="0.7"/><ellipse cx="268.2" cy="116.3" rx="4.3" ry="4" fill="none"  /><ellipse cx="292" cy="116.3" rx="4.3" ry="4" fill="none"  /><circle cx="269.5" cy="115" r="1" fill="none"/><circle cx="293.3" cy="115" r="1" fill="none"/><path d="M264,111 l8,-1 M288,110 l8,1"  /><path d="M299,101 h5 M299,104 h5"  /><rect x="272" y="136.8" width="16" height="5.5" fill="none"/><circle cx="278.6" cy="145" r="2.2" fill="none"/><path d="M255,146 l6,4 M256,155 l6,4 M259,164 l6,4 M303,146 l-6,4 M303,155 l-6,4 M301,164 l-6,4"  /><path d="M236,118 l3,3 M239,118 l-3,3 M317,92 l4,4 M321,92 l-4,4"  /></g><g id="sketch" fill="none" stroke="#4a4a4a" stroke-width="0.6" stroke-linecap="round"><path d="M343.8,94.1 L333.4,67.3 L357.2,71.8 M343.8,82 C348,78 352,74 357.2,73.3 M361.7,71.8 L367.6,52.4 C380,62 395,72 403.4,82.2 C406,92 408,100 407.8,104.5 C408,118 407,130 404.9,137.3 L394.4,140.3"/><path d="M364.6,70 L370.8,60 L371.5,79 M343.8,94.1 C341,100 340,104 340.8,107.5 C340,114 341,118 342.3,122.4 C344,128 347,134 351.3,137.3"/><path d="M349.8,86.7 L361.7,107.5 M355.7,85.2 L364.6,112 M365,86 L372,108 M379.5,89.7 L388.5,110.5 M385,95 C390,100 393,106 395,110"/><path d="M349.8,122.4 C354,128 358,133 362.7,134.4 C366,132 368,130 369,128.4 M358.7,112 C362,110 366,110 369,112.5 M360,115 l4,2"/><path d="M367.6,97 l6,3 M367.6,100 l6,3"/><path d="M354.2,146.2 C358,140 364,136 369,134.4 C374,136 378,138 379.5,140.3 M348.3,152.2 C352,150 358,152 363.2,158 M352,148 l10,6"/><path d="M354.2,159.6 C354,175 354,190 354.2,205 M395.9,143.3 C400,160 402,180 401.9,194 M376.5,149.2 C378,165 379,180 379.5,194"/><path d="M400.4,193.9 C403,185 406,176 409.3,171.5 C414,166 419,163 424.2,162.6 M404,186 C406,180 408,178 412,176"/><path d="M332,132.8 C334,130 338,132 338,134 C341,134 342,138 340.8,140.3 M336,137 l4,-1"/><path d="M372.5,202.4 C365,212 358,222 354.7,232.2 C351,245 349,255 350.2,262 C352,272 355,280 359.1,284.4 C363,288 368,291 372.5,291.8"/><path d="M372.5,202.4 L384.5,218.8 M369.6,227.7 L377,211.4 L386,221.8 M384.5,218.8 C395,218 405,216 414.2,208.4 L417.2,239.7 C419,247 421,253 421.7,259"/><path d="M372.5,236.7 C382,232 392,230 399.4,231 C406,232 412,236 417.2,241 M392,228.5 l1,1 M398,228.5 l1,1"/><path d="M366.6,265 C370,272 374,278 387.4,284.4 C394,285 400,283 406.8,278.4 C412,272 415,266 417.2,263.5"/><path d="M378.5,267 C382,265 386,266 390.4,269 M399.4,263.5 C402,262 406,262 409.8,265 M376,245 l2,22 M384,243 l1,20 M402,243 l2,20 M412,248 l3,16"/><path d="M397.9,278.4 C402,280 406,286 405.3,293.2 M368,278 C374,288 380,300 387.4,305.2 M405.3,284 C408,292 410,300 409.3,306.7"/><path d="M359.1,291.8 C357,300 356,310 356.2,320 C357,330 360,340 362,350 M417.2,291.8 C422,300 425,310 426.2,320 C427,332 426,342 425,350 M387.4,308 C388,320 388,338 388.9,350"/><path d="M387.4,299 v12 M398,299 v10"/><path d="M336.8,314 C345,315 350,322 353,335 C354,342 354,346 354.7,350 M321.9,338 C326,330 332,323 338.8,322 C344,324 346,330 346,338 M330,350 C334,344 338,342 342,346"/><path d="M354.7,195 L356.2,204 M397.9,195 L396.4,208"/><path d="M236,118 l3,3 M239,118 l-3,3"/></g></defs></svg><div class="cell" style="left:0px;top:0px"><svg width="635" height="355" viewBox="0 0 635 355"><rect x="0.0" y="0.0" width="635.0" height="355.0" fill="#3a3a3a" /><rect x="0.0" y="0.0" width="635.0" height="7.5" fill="#3e3e3e" /><rect x="0.0" y="7.5" width="635.0" height="8.5" fill="#4a4a4a" /><rect x="0.0" y="16.0" width="635.0" height="8.0" fill="#3a3a3a" /><rect x="83.0" y="16.0" width="427.0" height="8.0" fill="#4f4f4f" /><use href="#menu"/><rect x="0.0" y="24.0" width="16.0" height="331.0" fill="#3b3b3b" /><use href="#tools"/><use href="#lpanel"/><rect x="83.0" y="24.0" width="425.0" height="327.0" fill="#2e2e2e" /><rect x="83.0" y="24.0" width="425.0" height="7.5" fill="#333333" /><rect x="83.5" y="25.0" width="32.0" height="6.0" fill="#66708c" /><path d="M86 26.8h6v2.2h-6zM93.9 26.8h3.6v2.2h-3.6zM99.3 26.8h3.1v2.2h-3.1zM104 26.8h2v2.2h-2z" fill="#d8d8e8" opacity="0.5"/><rect x="83.0" y="350.5" width="425.0" height="4.5" fill="#3a3a3a" /><path d="M86 351.5h4.4v2.2h-4.4zM92 351.5h6.1v2.2h-6.1zM99.3 351.5h8.7v2.2h-8.7zM109.9 351.5h7.2v2.2h-7.2zM119.3 351.5h3.5v2.2h-3.5zM124.7 351.5h8.1v2.2h-8.1zM134.7 351.5h6.4v2.2h-6.4zM143 351.5h3.7v2.2h-3.7zM148.3 351.5h7.3v2.2h-7.3zM157.7 351.5h6.9v2.2h-6.9zM166.4 351.5h5v2.2h-5zM173 351.5h4.4v2.2h-4.4zM179.6 351.5h6.4v2.2h-6.4z" fill="#999" opacity="0.35"/><rect x="129.5" y="48.0" width="375.5" height="302.5" fill="#ffffff" /><use href="#sketch"/><use href="#girl"/><rect x="505.0" y="24.0" width="6.0" height="327.0" fill="#2e2e2e" /><rect x="511.0" y="24.0" width="66.0" height="331.0" fill="#383838" /><rect x="511.0" y="24.0" width="66.0" height="6.0" fill="#333" /><path d="M523 25.5h6.2v2.2h-6.2zM530.4 25.5h7.6v2.2h-7.6zM539.5 25.5h1.5v2.2h-1.5z" fill="#aaa" opacity="0.35"/><rect x="513.0" y="30.5" width="62.0" height="21.0" fill="#3c3c3c" /><rect x="541.0" y="32.0" width="14.0" height="3.0" fill="#dedede" opacity="0.8"/><path d="M515 38.5h7.4v3h-7.4zM524.6 38.5h7.1v3h-7.1zM533 38.5h7.2v3h-7.2zM541.7 38.5h4.1v3h-4.1zM547.4 38.5h6.5v3h-6.5zM555.2 38.5h6.2v3h-6.2z" fill="#999" opacity="0.45"/><path d="M515 45.5h9v3h-9zM526.1 45.5h4.9v3h-4.9zM532.3 45.5h4.2v3h-4.2zM538 45.5h8.9v3h-8.9zM548.6 45.5h3.1v3h-3.1zM553.3 45.5h5.7v3h-5.7zM560.2 45.5h2.8v3h-2.8z" fill="#999" opacity="0.45"/><rect x="512.0" y="64.9" width="64.0" height="1.0" fill="#2e2e2e" /><rect x="527.0" y="54.0" width="10.5" height="9.9" fill="#ececec" /><path d="M540 55h6v2.4h-6zM548 55h5.3v2.4h-5.3zM555 55h3.7v2.4h-3.7z" fill="#c8c8c8" opacity="0.5"/><path d="M540 60h4.6v2.4h-4.6zM546 60h7.8v2.4h-7.8zM555.8 60h3.2v2.4h-3.2z" fill="#c8c8c8" opacity="0.5"/><rect x="525.0" y="65.9" width="38.0" height="12.4" fill="#4e5670" /><rect x="512.0" y="78.3" width="64.0" height="1.0" fill="#2e2e2e" /><rect x="527.0" y="67.4" width="10.5" height="9.9" fill="#ececec" /><path d="M540 68.4h6.3v2.4h-6.3zM548.5 68.4h5.5v2.4h-5.5zM555.7 68.4h3.3v2.4h-3.3z" fill="#c8c8c8" opacity="0.5"/><path d="M540 73.4h8.9v2.4h-8.9zM550.6 73.4h5.4v2.4h-5.4zM557.2 73.4h1.8v2.4h-1.8z" fill="#c8c8c8" opacity="0.5"/><rect x="512.0" y="91.7" width="64.0" height="1.0" fill="#2e2e2e" /><rect x="527.0" y="80.8" width="10.5" height="9.9" fill="#ececec" /><path d="M540 81.8h5.2v2.4h-5.2zM546.9 81.8h5.4v2.4h-5.4zM553.7 81.8h5.3v2.4h-5.3z" fill="#c8c8c8" opacity="0.5"/><path d="M540 86.8h8.4v2.4h-8.4zM550.6 86.8h3.7v2.4h-3.7zM555.5 86.8h3.5v2.4h-3.5z" fill="#c8c8c8" opacity="0.5"/><rect x="512.0" y="105.1" width="64.0" height="1.0" fill="#2e2e2e" /><rect x="527.0" y="94.2" width="10.5" height="9.9" fill="#ececec" /><path d="M540 95.2h8.6v2.4h-8.6zM550.7 95.2h5v2.4h-5zM557.5 95.2h1.5v2.4h-1.5z" fill="#c8c8c8" opacity="0.5"/><path d="M540 100.2h4.5v2.4h-4.5zM546.4 100.2h9v2.4h-9zM557.1 100.2h1.9v2.4h-1.9z" fill="#c8c8c8" opacity="0.5"/><rect x="512.0" y="118.5" width="64.0" height="1.0" fill="#2e2e2e" /><rect x="527.0" y="107.6" width="10.5" height="9.9" fill="#ececec" /><path d="M540 108.6h7.7v2.4h-7.7zM549.2 108.6h4.1v2.4h-4.1zM554.8 108.6h4.2v2.4h-4.2z" fill="#c8c8c8" opacity="0.5"/><path d="M540 113.6h6v2.4h-6zM547.9 113.6h4.6v2.4h-4.6zM553.8 113.6h3.9v2.4h-3.9z" fill="#c8c8c8" opacity="0.5"/><rect x="512.0" y="131.9" width="64.0" height="1.0" fill="#2e2e2e" /><rect x="527.0" y="121.0" width="10.5" height="9.9" fill="#ececec" /><path d="M540 122h8.1v2.4h-8.1zM549.5 122h4.3v2.4h-4.3zM555 122h4v2.4h-4z" fill="#c8c8c8" opacity="0.5"/><path d="M540 127h8.3v2.4h-8.3zM549.9 127h6.2v2.4h-6.2zM557.5 127h1.5v2.4h-1.5z" fill="#c8c8c8" opacity="0.5"/><rect x="512.0" y="145.3" width="64.0" height="1.0" fill="#2e2e2e" /><rect x="527.0" y="134.4" width="10.5" height="9.9" fill="#ececec" /><path d="M540 135.4h6.7v2.4h-6.7zM548.1 135.4h6.6v2.4h-6.6zM556.1 135.4h2.9v2.4h-2.9z" fill="#c8c8c8" opacity="0.5"/><path d="M540 140.4h4.5v2.4h-4.5zM546 140.4h6.8v2.4h-6.8zM554.5 140.4h4.5v2.4h-4.5z" fill="#c8c8c8" opacity="0.5"/><rect x="512.0" y="158.7" width="64.0" height="1.0" fill="#2e2e2e" /><rect x="527.0" y="147.8" width="10.5" height="9.9" fill="#ececec" /><path d="M540 148.8h5.9v2.4h-5.9zM547.5 148.8h3.3v2.4h-3.3zM552.6 148.8h6.4v2.4h-6.4z" fill="#c8c8c8" opacity="0.5"/><path d="M540 153.8h7.5v2.4h-7.5zM548.8 153.8h6.6v2.4h-6.6zM556.9 153.8h2.1v2.4h-2.1z" fill="#c8c8c8" opacity="0.5"/><rect x="512.0" y="172.1" width="64.0" height="1.0" fill="#2e2e2e" /><rect x="527.0" y="161.2" width="10.5" height="9.9" fill="#ececec" /><path d="M540 162.2h7.3v2.4h-7.3zM549.2 162.2h5.2v2.4h-5.2zM556.3 162.2h2.7v2.4h-2.7z" fill="#c8c8c8" opacity="0.5"/><path d="M540 167.2h3.4v2.4h-3.4zM545.3 167.2h7.9v2.4h-7.9zM554.6 167.2h4.4v2.4h-4.4z" fill="#c8c8c8" opacity="0.5"/><rect x="512.0" y="185.5" width="64.0" height="1.0" fill="#2e2e2e" /><rect x="527.0" y="174.6" width="10.5" height="9.9" fill="#ececec" /><path d="M540 175.6h7.9v2.4h-7.9zM549.4 175.6h5.6v2.4h-5.6zM556.5 175.6h2.5v2.4h-2.5z" fill="#c8c8c8" opacity="0.5"/><path d="M540 180.6h4.6v2.4h-4.6zM546.5 180.6h5.9v2.4h-5.9zM554.4 180.6h4.6v2.4h-4.6z" fill="#c8c8c8" opacity="0.5"/><rect x="512.0" y="198.9" width="64.0" height="1.0" fill="#2e2e2e" /><rect x="527.0" y="188.0" width="10.5" height="9.9" fill="#ececec" /><path d="M540 189h5.7v2.4h-5.7zM547 189h3.1v2.4h-3.1zM552.2 189h6.8v2.4h-6.8z" fill="#c8c8c8" opacity="0.5"/><path d="M540 194h3.7v2.4h-3.7zM545.7 194h5.9v2.4h-5.9zM553.7 194h5.3v2.4h-5.3z" fill="#c8c8c8" opacity="0.5"/><rect x="512.0" y="212.3" width="64.0" height="1.0" fill="#2e2e2e" /><rect x="527.0" y="201.4" width="10.5" height="9.9" fill="#ececec" /><path d="M540 202.4h7.9v2.4h-7.9zM549.3 202.4h4.6v2.4h-4.6zM555.3 202.4h3.7v2.4h-3.7z" fill="#c8c8c8" opacity="0.5"/><path d="M540 207.4h4.2v2.4h-4.2zM545.6 207.4h7.7v2.4h-7.7zM555.1 207.4h3.9v2.4h-3.9z" fill="#c8c8c8" opacity="0.5"/><rect x="512.0" y="225.7" width="64.0" height="1.0" fill="#2e2e2e" /><rect x="527.0" y="214.8" width="10.5" height="9.9" fill="#ececec" /><path d="M540 215.8h5v2.4h-5zM547.1 215.8h5v2.4h-5zM554.3 215.8h4.7v2.4h-4.7z" fill="#c8c8c8" opacity="0.5"/><path d="M540 220.8h7.4v2.4h-7.4zM548.8 220.8h8.5v2.4h-8.5z" fill="#c8c8c8" opacity="0.5"/><rect x="512.0" y="239.1" width="64.0" height="1.0" fill="#2e2e2e" /><rect x="527.0" y="228.2" width="10.5" height="9.9" fill="#ececec" /><path d="M540 229.2h6.2v2.4h-6.2zM547.4 229.2h5.7v2.4h-5.7zM554.9 229.2h4.1v2.4h-4.1z" fill="#c8c8c8" opacity="0.5"/><path d="M540 234.2h4v2.4h-4zM546 234.2h6.7v2.4h-6.7zM554.4 234.2h4.6v2.4h-4.6z" fill="#c8c8c8" opacity="0.5"/><rect x="512.0" y="252.5" width="64.0" height="1.0" fill="#2e2e2e" /><rect x="527.0" y="241.6" width="10.5" height="9.9" fill="#ececec" /><path d="M540 242.6h6.2v2.4h-6.2zM547.4 242.6h7.4v2.4h-7.4zM556.3 242.6h2.7v2.4h-2.7z" fill="#c8c8c8" opacity="0.5"/><path d="M540 247.6h5.5v2.4h-5.5zM546.8 247.6h7.2v2.4h-7.2zM556.1 247.6h2.9v2.4h-2.9z" fill="#c8c8c8" opacity="0.5"/><rect x="512.0" y="265.9" width="64.0" height="1.0" fill="#2e2e2e" /><rect x="527.0" y="255.0" width="10.5" height="9.9" fill="#ececec" /><path d="M540 256h8.6v2.4h-8.6zM550.6 256h5.9v2.4h-5.9zM557.8 256h1.2v2.4h-1.2z" fill="#c8c8c8" opacity="0.5"/><path d="M540 261h8.5v2.4h-8.5zM550.7 261h4.7v2.4h-4.7zM557.5 261h1.5v2.4h-1.5z" fill="#c8c8c8" opacity="0.5"/><rect x="512.0" y="279.3" width="64.0" height="1.0" fill="#2e2e2e" /><rect x="527.0" y="268.4" width="10.5" height="9.9" fill="#ececec" /><path d="M540 269.4h6.1v2.4h-6.1zM547.8 269.4h7.8v2.4h-7.8zM556.8 269.4h2.2v2.4h-2.2z" fill="#c8c8c8" opacity="0.5"/><path d="M540 274.4h7.5v2.4h-7.5zM549.6 274.4h8.9v2.4h-8.9z" fill="#c8c8c8" opacity="0.5"/><rect x="512.0" y="292.7" width="64.0" height="1.0" fill="#2e2e2e" /><rect x="527.0" y="281.8" width="10.5" height="9.9" fill="#ececec" /><path d="M540 282.8h4.9v2.4h-4.9zM546.9 282.8h5.9v2.4h-5.9zM554.3 282.8h3.8v2.4h-3.8z" fill="#c8c8c8" opacity="0.5"/><path d="M540 287.8h3.6v2.4h-3.6zM545.4 287.8h3.7v2.4h-3.7zM550.3 287.8h4.2v2.4h-4.2zM556.6 287.8h2.4v2.4h-2.4z" fill="#c8c8c8" opacity="0.5"/><rect x="512.0" y="306.1" width="64.0" height="1.0" fill="#2e2e2e" /><rect x="527.0" y="295.2" width="10.5" height="9.9" fill="#ececec" /><path d="M540 296.2h4.3v2.4h-4.3zM546.4 296.2h4.3v2.4h-4.3zM552.7 296.2h5.1v2.4h-5.1z" fill="#c8c8c8" opacity="0.5"/><path d="M540 301.2h4.9v2.4h-4.9zM547 301.2h7.9v2.4h-7.9zM556.5 301.2h2.5v2.4h-2.5z" fill="#c8c8c8" opacity="0.5"/><rect x="512.0" y="319.5" width="64.0" height="1.0" fill="#2e2e2e" /><rect x="527.0" y="308.6" width="10.5" height="9.9" fill="#ececec" /><path d="M540 309.6h6.1v2.4h-6.1zM548.3 309.6h6.2v2.4h-6.2zM556.3 309.6h2.7v2.4h-2.7z" fill="#c8c8c8" opacity="0.5"/><path d="M540 314.6h5.5v2.4h-5.5zM547.4 314.6h7.4v2.4h-7.4zM556.5 314.6h2.5v2.4h-2.5z" fill="#c8c8c8" opacity="0.5"/><rect x="512.0" y="332.9" width="64.0" height="1.0" fill="#2e2e2e" /><rect x="527.0" y="322.0" width="10.5" height="9.9" fill="#ececec" /><path d="M540 323h6.9v2.4h-6.9zM548.7 323h3.5v2.4h-3.5zM554 323h4.7v2.4h-4.7z" fill="#c8c8c8" opacity="0.5"/><path d="M540 328h6.1v2.4h-6.1zM548.2 328h6.1v2.4h-6.1zM556.1 328h2.9v2.4h-2.9z" fill="#c8c8c8" opacity="0.5"/><rect x="512.0" y="346.3" width="64.0" height="1.0" fill="#2e2e2e" /><rect x="527.0" y="335.4" width="10.5" height="9.9" fill="#ececec" /><path d="M540 336.4h8.9v2.4h-8.9zM551 336.4h6.4v2.4h-6.4z" fill="#c8c8c8" opacity="0.5"/><path d="M540 341.4h8.3v2.4h-8.3zM549.8 341.4h8.9v2.4h-8.9z" fill="#c8c8c8" opacity="0.5"/><rect x="563.0" y="52.0" width="2.5" height="299.0" fill="#444" /><rect x="568.0" y="24.0" width="67.0" height="331.0" fill="#383838" /><rect x="569.0" y="27.0" width="9.0" height="8.0" fill="#474747" /><rect x="569.0" y="38.5" width="9.0" height="8.0" fill="#474747" /><rect x="569.0" y="50.0" width="9.0" height="8.0" fill="#474747" /><rect x="569.0" y="61.5" width="9.0" height="8.0" fill="#474747" /><rect x="569.0" y="73.0" width="9.0" height="8.0" fill="#474747" /><rect x="569.0" y="84.5" width="9.0" height="8.0" fill="#474747" /><rect x="569.0" y="96.0" width="9.0" height="8.0" fill="#474747" /><rect x="569.0" y="107.5" width="9.0" height="8.0" fill="#474747" /><rect x="580.0" y="24.0" width="55.0" height="5.0" fill="#333" /><rect x="582.0" y="29.6" width="51.0" height="52.4" fill="#fff" /><rect x="580.0" y="83.0" width="55.0" height="15.0" fill="#3a3a3a" /><path d="M583 85h7.7v2.5h-7.7zM592.8 85h5.4v2.5h-5.4zM600.2 85h4.2v2.5h-4.2zM606.3 85h3.4v2.5h-3.4zM611 85h3.6v2.5h-3.6zM616.1 85h6.5v2.5h-6.5zM624.1 85h6.5v2.5h-6.5z" fill="#aaa" opacity="0.4"/><path d="M583 91h3.9v2.5h-3.9zM588.8 91h4.9v2.5h-4.9zM595.2 91h7.3v2.5h-7.3zM604 91h4.8v2.5h-4.8zM610.3 91h8.9v2.5h-8.9zM621.1 91h6.2v2.5h-6.2zM628.8 91h2.2v2.5h-2.2z" fill="#aaa" opacity="0.4"/><rect x="580.0" y="100.0" width="52.0" height="6.5" fill="#3e3e3e" /><path d="M582 102.2h3.9v2.6h-3.9zM587.5 102.2h6.5v2.6h-6.5z" fill="#d0d0d0" opacity="0.55"/><rect x="580.0" y="107.2" width="52.0" height="6.5" fill="#3e3e3e" /><path d="M582 109.5h8v2.6h-8zM591.3 109.5h3.6v2.6h-3.6z" fill="#d0d0d0" opacity="0.55"/><rect x="580.0" y="114.5" width="52.0" height="6.5" fill="#3e3e3e" /><path d="M582 116.7h3.2v2.6h-3.2zM586.6 116.7h6.2v2.6h-6.2zM594.5 116.7h5.9v2.6h-5.9zM602.5 116.7h5.1v2.6h-5.1zM609.4 116.7h4.9v2.6h-4.9zM616.3 116.7h7.1v2.6h-7.1zM625.6 116.7h2.4v2.6h-2.4z" fill="#d0d0d0" opacity="0.55"/><rect x="580.0" y="121.8" width="52.0" height="6.5" fill="#3e3e3e" /><path d="M582 124h5.9v2.6h-5.9zM589.4 124h8.2v2.6h-8.2zM599.4 124h5.6v2.6h-5.6zM606.8 124h5.3v2.6h-5.3zM613.6 124h7.2v2.6h-7.2zM622.6 124h5.4v2.6h-5.4z" fill="#d0d0d0" opacity="0.55"/><rect x="580.0" y="129.0" width="52.0" height="6.5" fill="#3e3e3e" /><path d="M582 131.2h5.1v2.6h-5.1zM588.9 131.2h6v2.6h-6zM596.2 131.2h7.5v2.6h-7.5zM605.2 131.2h8.3v2.6h-8.3zM614.8 131.2h3.1v2.6h-3.1zM620 131.2h8v2.6h-8z" fill="#d0d0d0" opacity="0.55"/><rect x="580.0" y="136.2" width="52.0" height="6.5" fill="#3e3e3e" /><path d="M582 138.4h3.9v2.6h-3.9zM587.7 138.4h4.7v2.6h-4.7zM594.4 138.4h3.3v2.6h-3.3zM599.9 138.4h4.7v2.6h-4.7zM606.2 138.4h7.5v2.6h-7.5zM615.4 138.4h3.8v2.6h-3.8zM621.3 138.4h3.1v2.6h-3.1zM625.7 138.4h2.3v2.6h-2.3z" fill="#d0d0d0" opacity="0.55"/><rect x="580.0" y="143.5" width="52.0" height="6.5" fill="#3e3e3e" /><path d="M582 145.7h8.1v2.6h-8.1zM591.4 145.7h4.6v2.6h-4.6z" fill="#d0d0d0" opacity="0.55"/><rect x="580.0" y="150.8" width="52.0" height="6.5" fill="#3e3e3e" /><path d="M582 152.9h6.4v2.6h-6.4zM590 152.9h6v2.6h-6z" fill="#d0d0d0" opacity="0.55"/><rect x="580.0" y="158.0" width="52.0" height="6.5" fill="#3e3e3e" /><path d="M582 160.2h8v2.6h-8zM591.3 160.2h6.2v2.6h-6.2zM599.2 160.2h3.5v2.6h-3.5zM604.7 160.2h4v2.6h-4zM610.6 160.2h6.3v2.6h-6.3zM618.4 160.2h5.1v2.6h-5.1zM625.6 160.2h2.4v2.6h-2.4z" fill="#d0d0d0" opacity="0.55"/><rect x="580.0" y="165.2" width="52.0" height="6.5" fill="#3e3e3e" /><path d="M582 167.4h7.1v2.6h-7.1zM591 167.4h7v2.6h-7zM599.6 167.4h8.1v2.6h-8.1zM609.5 167.4h7v2.6h-7zM618 167.4h4.3v2.6h-4.3zM623.7 167.4h4.3v2.6h-4.3z" fill="#d0d0d0" opacity="0.55"/><rect x="580.0" y="172.5" width="52.0" height="6.5" fill="#3e3e3e" /><path d="M582 174.7h9v2.6h-9zM592.5 174.7h3.5v2.6h-3.5z" fill="#d0d0d0" opacity="0.55"/><rect x="580.0" y="179.8" width="52.0" height="6.5" fill="#3e3e3e" /><path d="M582 181.9h3.2v2.6h-3.2zM586.7 181.9h3.6v2.6h-3.6zM592.2 181.9h4.8v2.6h-4.8zM598.8 181.9h5.6v2.6h-5.6zM606.3 181.9h8.9v2.6h-8.9zM617.3 181.9h3.3v2.6h-3.3zM622.6 181.9h3.3v2.6h-3.3z" fill="#d0d0d0" opacity="0.55"/><rect x="580.0" y="187.0" width="52.0" height="6.5" fill="#3e3e3e" /><path d="M582 189.2h6.6v2.6h-6.6zM590.5 189.2h7.1v2.6h-7.1zM599.3 189.2h7.3v2.6h-7.3zM607.9 189.2h5.8v2.6h-5.8zM615.3 189.2h8.6v2.6h-8.6zM625.5 189.2h2.5v2.6h-2.5z" fill="#d0d0d0" opacity="0.55"/><rect x="580.0" y="194.2" width="52.0" height="6.5" fill="#3e3e3e" /><path d="M582 196.4h4.7v2.6h-4.7zM588 196.4h5.2v2.6h-5.2zM594.9 196.4h1.1v2.6h-1.1z" fill="#d0d0d0" opacity="0.55"/><rect x="580.0" y="201.5" width="52.0" height="6.5" fill="#3e3e3e" /><path d="M582 203.7h5.7v2.6h-5.7zM589.1 203.7h6.9v2.6h-6.9z" fill="#d0d0d0" opacity="0.55"/><rect x="580.0" y="208.8" width="52.0" height="6.5" fill="#3e3e3e" /><path d="M582 210.9h3.5v2.6h-3.5zM587.2 210.9h5.8v2.6h-5.8zM595.2 210.9h6.5v2.6h-6.5zM603.6 210.9h5.2v2.6h-5.2zM610 210.9h3.7v2.6h-3.7zM615.7 210.9h3.7v2.6h-3.7zM621 210.9h7v2.6h-7z" fill="#d0d0d0" opacity="0.55"/><rect x="580.0" y="216.0" width="52.0" height="6.5" fill="#3e3e3e" /><path d="M582 218.2h7.1v2.6h-7.1zM590.4 218.2h4.1v2.6h-4.1z" fill="#d0d0d0" opacity="0.55"/><rect x="580.0" y="223.2" width="52.0" height="6.5" fill="#3e3e3e" /><path d="M582 225.4h3v2.6h-3zM587.1 225.4h7.9v2.6h-7.9z" fill="#d0d0d0" opacity="0.55"/><rect x="580.0" y="230.5" width="52.0" height="6.5" fill="#3e3e3e" /><path d="M582 232.7h8.9v2.6h-8.9zM592.6 232.7h3.4v2.6h-3.4z" fill="#d0d0d0" opacity="0.55"/><rect x="580.0" y="237.8" width="52.0" height="6.5" fill="#3e3e3e" /><path d="M582 239.9h4.2v2.6h-4.2zM587.7 239.9h3.9v2.6h-3.9zM593.9 239.9h8.4v2.6h-8.4zM604 239.9h5.7v2.6h-5.7zM611.3 239.9h8.1v2.6h-8.1zM621.2 239.9h6.8v2.6h-6.8z" fill="#d0d0d0" opacity="0.55"/><rect x="580.0" y="245.0" width="52.0" height="6.5" fill="#3e3e3e" /><path d="M582 247.2h6.5v2.6h-6.5zM590.6 247.2h5.1v2.6h-5.1z" fill="#d0d0d0" opacity="0.55"/><rect x="580.0" y="252.2" width="52.0" height="6.5" fill="#3e3e3e" /><path d="M582 254.4h7.3v2.6h-7.3zM591.1 254.4h4.9v2.6h-4.9z" fill="#d0d0d0" opacity="0.55"/><rect x="580.0" y="259.5" width="52.0" height="6.5" fill="#3e3e3e" /><path d="M582 261.7h4.2v2.6h-4.2zM587.9 261.7h6.2v2.6h-6.2z" fill="#d0d0d0" opacity="0.55"/><rect x="580.0" y="266.8" width="52.0" height="6.5" fill="#3e3e3e" /><path d="M582 268.9h4.7v2.6h-4.7zM588.2 268.9h6.7v2.6h-6.7z" fill="#d0d0d0" opacity="0.55"/><rect x="580.0" y="274.0" width="52.0" height="6.5" fill="#3e3e3e" /><path d="M582 276.2h5.6v2.6h-5.6zM589.5 276.2h5.1v2.6h-5.1zM596.1 276.2h3.4v2.6h-3.4zM601.4 276.2h7.9v2.6h-7.9zM610.7 276.2h5.4v2.6h-5.4zM617.7 276.2h3.4v2.6h-3.4zM623.1 276.2h4.7v2.6h-4.7z" fill="#d0d0d0" opacity="0.55"/><rect x="580.0" y="281.2" width="52.0" height="6.5" fill="#3e3e3e" /><path d="M582 283.4h7.4v2.6h-7.4zM590.9 283.4h4.3v2.6h-4.3zM597.4 283.4h8.7v2.6h-8.7zM607.8 283.4h8.3v2.6h-8.3zM618.1 283.4h8.1v2.6h-8.1z" fill="#d0d0d0" opacity="0.55"/><rect x="580.0" y="288.5" width="52.0" height="6.5" fill="#3e3e3e" /><path d="M582 290.7h4.1v2.6h-4.1zM588.1 290.7h6.5v2.6h-6.5zM596.2 290.7h8.7v2.6h-8.7zM606.4 290.7h5.6v2.6h-5.6zM613.4 290.7h3.1v2.6h-3.1zM618.4 290.7h7.2v2.6h-7.2z" fill="#d0d0d0" opacity="0.55"/><rect x="580.0" y="295.8" width="52.0" height="6.5" fill="#3e3e3e" /><path d="M582 297.9h6.4v2.6h-6.4zM590.4 297.9h8.8v2.6h-8.8zM601.1 297.9h6.5v2.6h-6.5zM608.8 297.9h6.1v2.6h-6.1zM616.7 297.9h5.4v2.6h-5.4zM623.4 297.9h4.6v2.6h-4.6z" fill="#d0d0d0" opacity="0.55"/><rect x="580.0" y="303.0" width="52.0" height="6.5" fill="#3e3e3e" /><path d="M582 305.2h7.6v2.6h-7.6zM591.3 305.2h4.7v2.6h-4.7z" fill="#d0d0d0" opacity="0.55"/><rect x="580.0" y="310.2" width="52.0" height="6.5" fill="#3e3e3e" /><path d="M582 312.4h8.7v2.6h-8.7zM592.3 312.4h5.1v2.6h-5.1zM598.8 312.4h4.1v2.6h-4.1zM604.9 312.4h3.4v2.6h-3.4zM609.8 312.4h4.7v2.6h-4.7zM616.6 312.4h8.5v2.6h-8.5zM626.8 312.4h1.2v2.6h-1.2z" fill="#d0d0d0" opacity="0.55"/><rect x="580.0" y="317.5" width="52.0" height="6.5" fill="#3e3e3e" /><path d="M582 319.7h4v2.6h-4zM587.8 319.7h4.3v2.6h-4.3zM593.5 319.7h2.5v2.6h-2.5z" fill="#d0d0d0" opacity="0.55"/><rect x="580.0" y="324.8" width="52.0" height="6.5" fill="#3e3e3e" /><path d="M582 326.9h4.8v2.6h-4.8zM588.5 326.9h4.4v2.6h-4.4zM594.4 326.9h5.3v2.6h-5.3zM601.5 326.9h4.8v2.6h-4.8zM608 326.9h4.7v2.6h-4.7zM614.5 326.9h4.5v2.6h-4.5zM620.9 326.9h5.6v2.6h-5.6z" fill="#d0d0d0" opacity="0.55"/><rect x="580.0" y="332.0" width="52.0" height="6.5" fill="#3e3e3e" /><path d="M582 334.2h6.6v2.6h-6.6zM590.3 334.2h5.2v2.6h-5.2z" fill="#d0d0d0" opacity="0.55"/><rect x="580.0" y="339.2" width="52.0" height="6.5" fill="#3e3e3e" /><path d="M582 341.4h5.9v2.6h-5.9zM589.8 341.4h3.1v2.6h-3.1zM594.6 341.4h1.4v2.6h-1.4z" fill="#d0d0d0" opacity="0.55"/><rect x="580.0" y="346.5" width="52.0" height="6.5" fill="#3e3e3e" /><path d="M582 348.7h8.3v2.6h-8.3zM591.7 348.7h8.9v2.6h-8.9zM602.2 348.7h8.6v2.6h-8.6zM612 348.7h8.4v2.6h-8.4zM622.1 348.7h5.9v2.6h-5.9z" fill="#d0d0d0" opacity="0.55"/><rect x="581.0" y="350.0" width="52.0" height="5.0" fill="#5a6282" /><g transform="translate(583,29.6) scale(0.17)"><use href="#girl" transform="translate(-110,-40)"/></g></svg><div class="wheel" style="left:17.1px;top:36.2px;"></div><div class="sv" style="left:31.8px;top:51.0px;background:linear-gradient(to bottom,rgba(0,0,0,0),#000),linear-gradient(to right,#fff,#e00000);"></div></div><div class="cell" style="left:640px;top:0px"><svg width="635" height="355" viewBox="0 0 635 355"><rect x="0.0" y="0.0" width="635.0" height="355.0" fill="#3a3a3a" /><rect x="0.0" y="0.0" width="635.0" height="7.5" fill="#3e3e3e" /><rect x="0.0" y="7.5" width="635.0" height="8.5" fill="#4a4a4a" /><rect x="0.0" y="16.0" width="635.0" height="8.0" fill="#3a3a3a" /><rect x="83.0" y="16.0" width="427.0" height="8.0" fill="#4f4f4f" /><use href="#menu"/><rect x="0.0" y="24.0" width="16.0" height="331.0" fill="#3b3b3b" /><use href="#tools"/><use href="#lpanel"/><rect x="83.0" y="24.0" width="425.0" height="327.0" fill="#2e2e2e" /><rect x="83.0" y="24.0" width="425.0" height="7.5" fill="#333333" /><rect x="83.5" y="25.0" width="32.0" height="6.0" fill="#66708c" /><path d="M86 26.8h6v2.2h-6zM93.9 26.8h3.6v2.2h-3.6zM99.3 26.8h3.1v2.2h-3.1zM104 26.8h2v2.2h-2z" fill="#d8d8e8" opacity="0.5"/><rect x="83.0" y="350.5" width="425.0" height="4.5" fill="#3a3a3a" /><path d="M86 351.5h4.4v2.2h-4.4zM92 351.5h6.1v2.2h-6.1zM99.3 351.5h8.7v2.2h-8.7zM109.9 351.5h7.2v2.2h-7.2zM119.3 351.5h3.5v2.2h-3.5zM124.7 351.5h8.1v2.2h-8.1zM134.7 351.5h6.4v2.2h-6.4zM143 351.5h3.7v2.2h-3.7zM148.3 351.5h7.3v2.2h-7.3zM157.7 351.5h6.9v2.2h-6.9zM166.4 351.5h5v2.2h-5zM173 351.5h4.4v2.2h-4.4zM179.6 351.5h6.4v2.2h-6.4z" fill="#999" opacity="0.35"/><rect x="0.0" y="24.0" width="83.0" height="331.0" fill="#3e3e3e" opacity="0.55"/><rect x="143.2" y="31.5" width="355.0" height="318.5" fill="#ffffff" /><clipPath id="cp1"><rect x="143.2" y="31.5" width="355" height="318.5"/></clipPath><g clip-path="url(#cp1)"><use href="#sketch" transform="translate(3,-19)"/><use href="#girllegs" transform="translate(285.35,198.4) scale(0.935,1.065) translate(-281,-228.3)"/><use href="#girlup" transform="translate(285.35,95.1) scale(0.935) translate(-281,-116.3)"/></g><path d="M262,306 C270,304 278,306 282,310 L284,326 C276,330 266,330 260,326 Z M290,310 C298,307 306,308 309,311 L311,326 C304,330 294,330 289,326 Z" fill="#8ae4c8" stroke="#4a8a78" stroke-width="0.6"/><rect x="498.0" y="24.0" width="13.0" height="327.0" fill="#2e2e2e" /><rect x="511.0" y="24.0" width="66.0" height="331.0" fill="#383838" /><rect x="511.0" y="24.0" width="66.0" height="6.0" fill="#333" /><path d="M523 25.5h6.2v2.2h-6.2zM530.4 25.5h7.6v2.2h-7.6zM539.5 25.5h1.5v2.2h-1.5z" fill="#aaa" opacity="0.35"/><rect x="513.0" y="30.5" width="62.0" height="21.0" fill="#3c3c3c" /><rect x="541.0" y="32.0" width="14.0" height="3.0" fill="#dedede" opacity="0.8"/><path d="M515 38.5h7.4v3h-7.4zM524.6 38.5h7.1v3h-7.1zM533 38.5h7.2v3h-7.2zM541.7 38.5h4.1v3h-4.1zM547.4 38.5h6.5v3h-6.5zM555.2 38.5h6.2v3h-6.2z" fill="#999" opacity="0.45"/><path d="M515 45.5h9v3h-9zM526.1 45.5h4.9v3h-4.9zM532.3 45.5h4.2v3h-4.2zM538 45.5h8.9v3h-8.9zM548.6 45.5h3.1v3h-3.1zM553.3 45.5h5.7v3h-5.7zM560.2 45.5h2.8v3h-2.8z" fill="#999" opacity="0.45"/><rect x="512.0" y="64.9" width="64.0" height="1.0" fill="#2e2e2e" /><rect x="527.0" y="54.0" width="10.5" height="9.9" fill="#ececec" /><path d="M540 55h6v2.4h-6zM548 55h5.3v2.4h-5.3zM555 55h3.7v2.4h-3.7z" fill="#c8c8c8" opacity="0.5"/><path d="M540 60h4.6v2.4h-4.6zM546 60h7.8v2.4h-7.8zM555.8 60h3.2v2.4h-3.2z" fill="#c8c8c8" opacity="0.5"/><rect x="512.0" y="78.3" width="64.0" height="1.0" fill="#2e2e2e" /><rect x="527.0" y="67.4" width="10.5" height="9.9" fill="#ececec" /><path d="M540 68.4h6.3v2.4h-6.3zM548.5 68.4h5.5v2.4h-5.5zM555.7 68.4h3.3v2.4h-3.3z" fill="#c8c8c8" opacity="0.5"/><path d="M540 73.4h8.9v2.4h-8.9zM550.6 73.4h5.4v2.4h-5.4zM557.2 73.4h1.8v2.4h-1.8z" fill="#c8c8c8" opacity="0.5"/><rect x="512.0" y="91.7" width="64.0" height="1.0" fill="#2e2e2e" /><rect x="527.0" y="80.8" width="10.5" height="9.9" fill="#ececec" /><path d="M540 81.8h5.2v2.4h-5.2zM546.9 81.8h5.4v2.4h-5.4zM553.7 81.8h5.3v2.4h-5.3z" fill="#c8c8c8" opacity="0.5"/><path d="M540 86.8h8.4v2.4h-8.4zM550.6 86.8h3.7v2.4h-3.7zM555.5 86.8h3.5v2.4h-3.5z" fill="#c8c8c8" opacity="0.5"/><rect x="512.0" y="105.1" width="64.0" height="1.0" fill="#2e2e2e" /><rect x="527.0" y="94.2" width="10.5" height="9.9" fill="#ececec" /><path d="M540 95.2h8.6v2.4h-8.6zM550.7 95.2h5v2.4h-5zM557.5 95.2h1.5v2.4h-1.5z" fill="#c8c8c8" opacity="0.5"/><path d="M540 100.2h4.5v2.4h-4.5zM546.4 100.2h9v2.4h-9zM557.1 100.2h1.9v2.4h-1.9z" fill="#c8c8c8" opacity="0.5"/><rect x="512.0" y="118.5" width="64.0" height="1.0" fill="#2e2e2e" /><rect x="527.0" y="107.6" width="10.5" height="9.9" fill="#ececec" /><path d="M540 108.6h7.7v2.4h-7.7zM549.2 108.6h4.1v2.4h-4.1zM554.8 108.6h4.2v2.4h-4.2z" fill="#c8c8c8" opacity="0.5"/><path d="M540 113.6h6v2.4h-6zM547.9 113.6h4.6v2.4h-4.6zM553.8 113.6h3.9v2.4h-3.9z" fill="#c8c8c8" opacity="0.5"/><rect x="512.0" y="131.9" width="64.0" height="1.0" fill="#2e2e2e" /><rect x="527.0" y="121.0" width="10.5" height="9.9" fill="#ececec" /><path d="M540 122h8.1v2.4h-8.1zM549.5 122h4.3v2.4h-4.3zM555 122h4v2.4h-4z" fill="#c8c8c8" opacity="0.5"/><path d="M540 127h8.3v2.4h-8.3zM549.9 127h6.2v2.4h-6.2zM557.5 127h1.5v2.4h-1.5z" fill="#c8c8c8" opacity="0.5"/><rect x="512.0" y="145.3" width="64.0" height="1.0" fill="#2e2e2e" /><rect x="527.0" y="134.4" width="10.5" height="9.9" fill="#ececec" /><path d="M540 135.4h6.7v2.4h-6.7zM548.1 135.4h6.6v2.4h-6.6zM556.1 135.4h2.9v2.4h-2.9z" fill="#c8c8c8" opacity="0.5"/><path d="M540 140.4h4.5v2.4h-4.5zM546 140.4h6.8v2.4h-6.8zM554.5 140.4h4.5v2.4h-4.5z" fill="#c8c8c8" opacity="0.5"/><rect x="512.0" y="158.7" width="64.0" height="1.0" fill="#2e2e2e" /><rect x="527.0" y="147.8" width="10.5" height="9.9" fill="#ececec" /><path d="M540 148.8h5.9v2.4h-5.9zM547.5 148.8h3.3v2.4h-3.3zM552.6 148.8h6.4v2.4h-6.4z" fill="#c8c8c8" opacity="0.5"/><path d="M540 153.8h7.5v2.4h-7.5zM548.8 153.8h6.6v2.4h-6.6zM556.9 153.8h2.1v2.4h-2.1z" fill="#c8c8c8" opacity="0.5"/><rect x="512.0" y="172.1" width="64.0" height="1.0" fill="#2e2e2e" /><rect x="527.0" y="161.2" width="10.5" height="9.9" fill="#ececec" /><path d="M540 162.2h7.3v2.4h-7.3zM549.2 162.2h5.2v2.4h-5.2zM556.3 162.2h2.7v2.4h-2.7z" fill="#c8c8c8" opacity="0.5"/><path d="M540 167.2h3.4v2.4h-3.4zM545.3 167.2h7.9v2.4h-7.9zM554.6 167.2h4.4v2.4h-4.4z" fill="#c8c8c8" opacity="0.5"/><rect x="512.0" y="185.5" width="64.0" height="1.0" fill="#2e2e2e" /><rect x="527.0" y="174.6" width="10.5" height="9.9" fill="#ececec" /><path d="M540 175.6h7.9v2.4h-7.9zM549.4 175.6h5.6v2.4h-5.6zM556.5 175.6h2.5v2.4h-2.5z" fill="#c8c8c8" opacity="0.5"/><path d="M540 180.6h4.6v2.4h-4.6zM546.5 180.6h5.9v2.4h-5.9zM554.4 180.6h4.6v2.4h-4.6z" fill="#c8c8c8" opacity="0.5"/><rect x="512.0" y="198.9" width="64.0" height="1.0" fill="#2e2e2e" /><rect x="527.0" y="188.0" width="10.5" height="9.9" fill="#ececec" /><path d="M540 189h5.7v2.4h-5.7zM547 189h3.1v2.4h-3.1zM552.2 189h6.8v2.4h-6.8z" fill="#c8c8c8" opacity="0.5"/><path d="M540 194h3.7v2.4h-3.7zM545.7 194h5.9v2.4h-5.9zM553.7 194h5.3v2.4h-5.3z" fill="#c8c8c8" opacity="0.5"/><rect x="512.0" y="212.3" width="64.0" height="1.0" fill="#2e2e2e" /><rect x="527.0" y="201.4" width="10.5" height="9.9" fill="#ececec" /><path d="M540 202.4h7.9v2.4h-7.9zM549.3 202.4h4.6v2.4h-4.6zM555.3 202.4h3.7v2.4h-3.7z" fill="#c8c8c8" opacity="0.5"/><path d="M540 207.4h4.2v2.4h-4.2zM545.6 207.4h7.7v2.4h-7.7zM555.1 207.4h3.9v2.4h-3.9z" fill="#c8c8c8" opacity="0.5"/><rect x="525.0" y="213.3" width="38.0" height="12.4" fill="#4e5670" /><rect x="512.0" y="225.7" width="64.0" height="1.0" fill="#2e2e2e" /><rect x="527.0" y="214.8" width="10.5" height="9.9" fill="#ececec" /><path d="M540 215.8h5v2.4h-5zM547.1 215.8h5v2.4h-5zM554.3 215.8h4.7v2.4h-4.7z" fill="#c8c8c8" opacity="0.5"/><path d="M540 220.8h7.4v2.4h-7.4zM548.8 220.8h8.5v2.4h-8.5z" fill="#c8c8c8" opacity="0.5"/><rect x="512.0" y="239.1" width="64.0" height="1.0" fill="#2e2e2e" /><rect x="527.0" y="228.2" width="10.5" height="9.9" fill="#ececec" /><path d="M540 229.2h6.2v2.4h-6.2zM547.4 229.2h5.7v2.4h-5.7zM554.9 229.2h4.1v2.4h-4.1z" fill="#c8c8c8" opacity="0.5"/><path d="M540 234.2h4v2.4h-4zM546 234.2h6.7v2.4h-6.7zM554.4 234.2h4.6v2.4h-4.6z" fill="#c8c8c8" opacity="0.5"/><rect x="512.0" y="252.5" width="64.0" height="1.0" fill="#2e2e2e" /><rect x="527.0" y="241.6" width="10.5" height="9.9" fill="#ececec" /><path d="M540 242.6h6.2v2.4h-6.2zM547.4 242.6h7.4v2.4h-7.4zM556.3 242.6h2.7v2.4h-2.7z" fill="#c8c8c8" opacity="0.5"/><path d="M540 247.6h5.5v2.4h-5.5zM546.8 247.6h7.2v2.4h-7.2zM556.1 247.6h2.9v2.4h-2.9z" fill="#c8c8c8" opacity="0.5"/><rect x="512.0" y="265.9" width="64.0" height="1.0" fill="#2e2e2e" /><rect x="527.0" y="255.0" width="10.5" height="9.9" fill="#ececec" /><path d="M540 256h8.6v2.4h-8.6zM550.6 256h5.9v2.4h-5.9zM557.8 256h1.2v2.4h-1.2z" fill="#c8c8c8" opacity="0.5"/><path d="M540 261h8.5v2.4h-8.5zM550.7 261h4.7v2.4h-4.7zM557.5 261h1.5v2.4h-1.5z" fill="#c8c8c8" opacity="0.5"/><rect x="512.0" y="279.3" width="64.0" height="1.0" fill="#2e2e2e" /><rect x="527.0" y="268.4" width="10.5" height="9.9" fill="#ececec" /><path d="M540 269.4h6.1v2.4h-6.1zM547.8 269.4h7.8v2.4h-7.8zM556.8 269.4h2.2v2.4h-2.2z" fill="#c8c8c8" opacity="0.5"/><path d="M540 274.4h7.5v2.4h-7.5zM549.6 274.4h8.9v2.4h-8.9z" fill="#c8c8c8" opacity="0.5"/><rect x="512.0" y="292.7" width="64.0" height="1.0" fill="#2e2e2e" /><rect x="527.0" y="281.8" width="10.5" height="9.9" fill="#ececec" /><path d="M540 282.8h4.9v2.4h-4.9zM546.9 282.8h5.9v2.4h-5.9zM554.3 282.8h3.8v2.4h-3.8z" fill="#c8c8c8" opacity="0.5"/><path d="M540 287.8h3.6v2.4h-3.6zM545.4 287.8h3.7v2.4h-3.7zM550.3 287.8h4.2v2.4h-4.2zM556.6 287.8h2.4v2.4h-2.4z" fill="#c8c8c8" opacity="0.5"/><rect x="512.0" y="306.1" width="64.0" height="1.0" fill="#2e2e2e" /><rect x="527.0" y="295.2" width="10.5" height="9.9" fill="#ececec" /><path d="M540 296.2h4.3v2.4h-4.3zM546.4 296.2h4.3v2.4h-4.3zM552.7 296.2h5.1v2.4h-5.1z" fill="#c8c8c8" opacity="0.5"/><path d="M540 301.2h4.9v2.4h-4.9zM547 301.2h7.9v2.4h-7.9zM556.5 301.2h2.5v2.4h-2.5z" fill="#c8c8c8" opacity="0.5"/><rect x="512.0" y="319.5" width="64.0" height="1.0" fill="#2e2e2e" /><rect x="527.0" y="308.6" width="10.5" height="9.9" fill="#ececec" /><path d="M540 309.6h6.1v2.4h-6.1zM548.3 309.6h6.2v2.4h-6.2zM556.3 309.6h2.7v2.4h-2.7z" fill="#c8c8c8" opacity="0.5"/><path d="M540 314.6h5.5v2.4h-5.5zM547.4 314.6h7.4v2.4h-7.4zM556.5 314.6h2.5v2.4h-2.5z" fill="#c8c8c8" opacity="0.5"/><rect x="512.0" y="332.9" width="64.0" height="1.0" fill="#2e2e2e" /><rect x="527.0" y="322.0" width="10.5" height="9.9" fill="#ececec" /><path d="M540 323h6.9v2.4h-6.9zM548.7 323h3.5v2.4h-3.5zM554 323h4.7v2.4h-4.7z" fill="#c8c8c8" opacity="0.5"/><path d="M540 328h6.1v2.4h-6.1zM548.2 328h6.1v2.4h-6.1zM556.1 328h2.9v2.4h-2.9z" fill="#c8c8c8" opacity="0.5"/><rect x="512.0" y="346.3" width="64.0" height="1.0" fill="#2e2e2e" /><rect x="527.0" y="335.4" width="10.5" height="9.9" fill="#ececec" /><path d="M540 336.4h8.9v2.4h-8.9zM551 336.4h6.4v2.4h-6.4z" fill="#c8c8c8" opacity="0.5"/><path d="M540 341.4h8.3v2.4h-8.3zM549.8 341.4h8.9v2.4h-8.9z" fill="#c8c8c8" opacity="0.5"/><rect x="563.0" y="52.0" width="2.5" height="299.0" fill="#444" /><rect x="568.0" y="24.0" width="67.0" height="331.0" fill="#383838" /><rect x="569.0" y="27.0" width="9.0" height="8.0" fill="#474747" /><rect x="569.0" y="38.5" width="9.0" height="8.0" fill="#474747" /><rect x="569.0" y="50.0" width="9.0" height="8.0" fill="#474747" /><rect x="569.0" y="61.5" width="9.0" height="8.0" fill="#474747" /><rect x="569.0" y="73.0" width="9.0" height="8.0" fill="#474747" /><rect x="569.0" y="84.5" width="9.0" height="8.0" fill="#474747" /><rect x="569.0" y="96.0" width="9.0" height="8.0" fill="#474747" /><rect x="569.0" y="107.5" width="9.0" height="8.0" fill="#474747" /><rect x="580.0" y="24.0" width="55.0" height="5.0" fill="#333" /><rect x="582.0" y="29.6" width="51.0" height="52.4" fill="#fff" /><rect x="580.0" y="83.0" width="55.0" height="15.0" fill="#3a3a3a" /><path d="M583 85h7.7v2.5h-7.7zM592.8 85h5.4v2.5h-5.4zM600.2 85h4.2v2.5h-4.2zM606.3 85h3.4v2.5h-3.4zM611 85h3.6v2.5h-3.6zM616.1 85h6.5v2.5h-6.5zM624.1 85h6.5v2.5h-6.5z" fill="#aaa" opacity="0.4"/><path d="M583 91h3.9v2.5h-3.9zM588.8 91h4.9v2.5h-4.9zM595.2 91h7.3v2.5h-7.3zM604 91h4.8v2.5h-4.8zM610.3 91h8.9v2.5h-8.9zM621.1 91h6.2v2.5h-6.2zM628.8 91h2.2v2.5h-2.2z" fill="#aaa" opacity="0.4"/><rect x="580.0" y="100.0" width="52.0" height="6.5" fill="#3e3e3e" /><path d="M582 102.2h3.9v2.6h-3.9zM587.5 102.2h6.5v2.6h-6.5z" fill="#d0d0d0" opacity="0.55"/><rect x="580.0" y="107.2" width="52.0" height="6.5" fill="#3e3e3e" /><path d="M582 109.5h8v2.6h-8zM591.3 109.5h3.6v2.6h-3.6z" fill="#d0d0d0" opacity="0.55"/><rect x="580.0" y="114.5" width="52.0" height="6.5" fill="#3e3e3e" /><path d="M582 116.7h3.2v2.6h-3.2zM586.6 116.7h6.2v2.6h-6.2zM594.5 116.7h5.9v2.6h-5.9zM602.5 116.7h5.1v2.6h-5.1zM609.4 116.7h4.9v2.6h-4.9zM616.3 116.7h7.1v2.6h-7.1zM625.6 116.7h2.4v2.6h-2.4z" fill="#d0d0d0" opacity="0.55"/><rect x="580.0" y="121.8" width="52.0" height="6.5" fill="#3e3e3e" /><path d="M582 124h5.9v2.6h-5.9zM589.4 124h8.2v2.6h-8.2zM599.4 124h5.6v2.6h-5.6zM606.8 124h5.3v2.6h-5.3zM613.6 124h7.2v2.6h-7.2zM622.6 124h5.4v2.6h-5.4z" fill="#d0d0d0" opacity="0.55"/><rect x="580.0" y="129.0" width="52.0" height="6.5" fill="#3e3e3e" /><path d="M582 131.2h5.1v2.6h-5.1zM588.9 131.2h6v2.6h-6zM596.2 131.2h7.5v2.6h-7.5zM605.2 131.2h8.3v2.6h-8.3zM614.8 131.2h3.1v2.6h-3.1zM620 131.2h8v2.6h-8z" fill="#d0d0d0" opacity="0.55"/><rect x="580.0" y="136.2" width="52.0" height="6.5" fill="#3e3e3e" /><path d="M582 138.4h3.9v2.6h-3.9zM587.7 138.4h4.7v2.6h-4.7zM594.4 138.4h3.3v2.6h-3.3zM599.9 138.4h4.7v2.6h-4.7zM606.2 138.4h7.5v2.6h-7.5zM615.4 138.4h3.8v2.6h-3.8zM621.3 138.4h3.1v2.6h-3.1zM625.7 138.4h2.3v2.6h-2.3z" fill="#d0d0d0" opacity="0.55"/><rect x="580.0" y="143.5" width="52.0" height="6.5" fill="#3e3e3e" /><path d="M582 145.7h8.1v2.6h-8.1zM591.4 145.7h4.6v2.6h-4.6z" fill="#d0d0d0" opacity="0.55"/><rect x="580.0" y="150.8" width="52.0" height="6.5" fill="#3e3e3e" /><path d="M582 152.9h6.4v2.6h-6.4zM590 152.9h6v2.6h-6z" fill="#d0d0d0" opacity="0.55"/><rect x="580.0" y="158.0" width="52.0" height="6.5" fill="#3e3e3e" /><path d="M582 160.2h8v2.6h-8zM591.3 160.2h6.2v2.6h-6.2zM599.2 160.2h3.5v2.6h-3.5zM604.7 160.2h4v2.6h-4zM610.6 160.2h6.3v2.6h-6.3zM618.4 160.2h5.1v2.6h-5.1zM625.6 160.2h2.4v2.6h-2.4z" fill="#d0d0d0" opacity="0.55"/><rect x="580.0" y="165.2" width="52.0" height="6.5" fill="#3e3e3e" /><path d="M582 167.4h7.1v2.6h-7.1zM591 167.4h7v2.6h-7zM599.6 167.4h8.1v2.6h-8.1zM609.5 167.4h7v2.6h-7zM618 167.4h4.3v2.6h-4.3zM623.7 167.4h4.3v2.6h-4.3z" fill="#d0d0d0" opacity="0.55"/><rect x="580.0" y="172.5" width="52.0" height="6.5" fill="#3e3e3e" /><path d="M582 174.7h9v2.6h-9zM592.5 174.7h3.5v2.6h-3.5z" fill="#d0d0d0" opacity="0.55"/><rect x="580.0" y="179.8" width="52.0" height="6.5" fill="#3e3e3e" /><path d="M582 181.9h3.2v2.6h-3.2zM586.7 181.9h3.6v2.6h-3.6zM592.2 181.9h4.8v2.6h-4.8zM598.8 181.9h5.6v2.6h-5.6zM606.3 181.9h8.9v2.6h-8.9zM617.3 181.9h3.3v2.6h-3.3zM622.6 181.9h3.3v2.6h-3.3z" fill="#d0d0d0" opacity="0.55"/><rect x="580.0" y="187.0" width="52.0" height="6.5" fill="#3e3e3e" /><path d="M582 189.2h6.6v2.6h-6.6zM590.5 189.2h7.1v2.6h-7.1zM599.3 189.2h7.3v2.6h-7.3zM607.9 189.2h5.8v2.6h-5.8zM615.3 189.2h8.6v2.6h-8.6zM625.5 189.2h2.5v2.6h-2.5z" fill="#d0d0d0" opacity="0.55"/><rect x="580.0" y="194.2" width="52.0" height="6.5" fill="#3e3e3e" /><path d="M582 196.4h4.7v2.6h-4.7zM588 196.4h5.2v2.6h-5.2zM594.9 196.4h1.1v2.6h-1.1z" fill="#d0d0d0" opacity="0.55"/><rect x="580.0" y="201.5" width="52.0" height="6.5" fill="#3e3e3e" /><path d="M582 203.7h5.7v2.6h-5.7zM589.1 203.7h6.9v2.6h-6.9z" fill="#d0d0d0" opacity="0.55"/><rect x="580.0" y="208.8" width="52.0" height="6.5" fill="#3e3e3e" /><path d="M582 210.9h3.5v2.6h-3.5zM587.2 210.9h5.8v2.6h-5.8zM595.2 210.9h6.5v2.6h-6.5zM603.6 210.9h5.2v2.6h-5.2zM610 210.9h3.7v2.6h-3.7zM615.7 210.9h3.7v2.6h-3.7zM621 210.9h7v2.6h-7z" fill="#d0d0d0" opacity="0.55"/><rect x="580.0" y="216.0" width="52.0" height="6.5" fill="#3e3e3e" /><path d="M582 218.2h7.1v2.6h-7.1zM590.4 218.2h4.1v2.6h-4.1z" fill="#d0d0d0" opacity="0.55"/><rect x="580.0" y="223.2" width="52.0" height="6.5" fill="#3e3e3e" /><path d="M582 225.4h3v2.6h-3zM587.1 225.4h7.9v2.6h-7.9z" fill="#d0d0d0" opacity="0.55"/><rect x="580.0" y="230.5" width="52.0" height="6.5" fill="#3e3e3e" /><path d="M582 232.7h8.9v2.6h-8.9zM592.6 232.7h3.4v2.6h-3.4z" fill="#d0d0d0" opacity="0.55"/><rect x="580.0" y="237.8" width="52.0" height="6.5" fill="#3e3e3e" /><path d="M582 239.9h4.2v2.6h-4.2zM587.7 239.9h3.9v2.6h-3.9zM593.9 239.9h8.4v2.6h-8.4zM604 239.9h5.7v2.6h-5.7zM611.3 239.9h8.1v2.6h-8.1zM621.2 239.9h6.8v2.6h-6.8z" fill="#d0d0d0" opacity="0.55"/><rect x="580.0" y="245.0" width="52.0" height="6.5" fill="#3e3e3e" /><path d="M582 247.2h6.5v2.6h-6.5zM590.6 247.2h5.1v2.6h-5.1z" fill="#d0d0d0" opacity="0.55"/><rect x="580.0" y="252.2" width="52.0" height="6.5" fill="#3e3e3e" /><path d="M582 254.4h7.3v2.6h-7.3zM591.1 254.4h4.9v2.6h-4.9z" fill="#d0d0d0" opacity="0.55"/><rect x="580.0" y="259.5" width="52.0" height="6.5" fill="#3e3e3e" /><path d="M582 261.7h4.2v2.6h-4.2zM587.9 261.7h6.2v2.6h-6.2z" fill="#d0d0d0" opacity="0.55"/><rect x="580.0" y="266.8" width="52.0" height="6.5" fill="#3e3e3e" /><path d="M582 268.9h4.7v2.6h-4.7zM588.2 268.9h6.7v2.6h-6.7z" fill="#d0d0d0" opacity="0.55"/><rect x="580.0" y="274.0" width="52.0" height="6.5" fill="#3e3e3e" /><path d="M582 276.2h5.6v2.6h-5.6zM589.5 276.2h5.1v2.6h-5.1zM596.1 276.2h3.4v2.6h-3.4zM601.4 276.2h7.9v2.6h-7.9zM610.7 276.2h5.4v2.6h-5.4zM617.7 276.2h3.4v2.6h-3.4zM623.1 276.2h4.7v2.6h-4.7z" fill="#d0d0d0" opacity="0.55"/><rect x="580.0" y="281.2" width="52.0" height="6.5" fill="#3e3e3e" /><path d="M582 283.4h7.4v2.6h-7.4zM590.9 283.4h4.3v2.6h-4.3zM597.4 283.4h8.7v2.6h-8.7zM607.8 283.4h8.3v2.6h-8.3zM618.1 283.4h8.1v2.6h-8.1z" fill="#d0d0d0" opacity="0.55"/><rect x="580.0" y="288.5" width="52.0" height="6.5" fill="#3e3e3e" /><path d="M582 290.7h4.1v2.6h-4.1zM588.1 290.7h6.5v2.6h-6.5zM596.2 290.7h8.7v2.6h-8.7zM606.4 290.7h5.6v2.6h-5.6zM613.4 290.7h3.1v2.6h-3.1zM618.4 290.7h7.2v2.6h-7.2z" fill="#d0d0d0" opacity="0.55"/><rect x="580.0" y="295.8" width="52.0" height="6.5" fill="#3e3e3e" /><path d="M582 297.9h6.4v2.6h-6.4zM590.4 297.9h8.8v2.6h-8.8zM601.1 297.9h6.5v2.6h-6.5zM608.8 297.9h6.1v2.6h-6.1zM616.7 297.9h5.4v2.6h-5.4zM623.4 297.9h4.6v2.6h-4.6z" fill="#d0d0d0" opacity="0.55"/><rect x="580.0" y="303.0" width="52.0" height="6.5" fill="#3e3e3e" /><path d="M582 305.2h7.6v2.6h-7.6zM591.3 305.2h4.7v2.6h-4.7z" fill="#d0d0d0" opacity="0.55"/><rect x="580.0" y="310.2" width="52.0" height="6.5" fill="#3e3e3e" /><path d="M582 312.4h8.7v2.6h-8.7zM592.3 312.4h5.1v2.6h-5.1zM598.8 312.4h4.1v2.6h-4.1zM604.9 312.4h3.4v2.6h-3.4zM609.8 312.4h4.7v2.6h-4.7zM616.6 312.4h8.5v2.6h-8.5zM626.8 312.4h1.2v2.6h-1.2z" fill="#d0d0d0" opacity="0.55"/><rect x="580.0" y="317.5" width="52.0" height="6.5" fill="#3e3e3e" /><path d="M582 319.7h4v2.6h-4zM587.8 319.7h4.3v2.6h-4.3zM593.5 319.7h2.5v2.6h-2.5z" fill="#d0d0d0" opacity="0.55"/><rect x="580.0" y="324.8" width="52.0" height="6.5" fill="#3e3e3e" /><path d="M582 326.9h4.8v2.6h-4.8zM588.5 326.9h4.4v2.6h-4.4zM594.4 326.9h5.3v2.6h-5.3zM601.5 326.9h4.8v2.6h-4.8zM608 326.9h4.7v2.6h-4.7zM614.5 326.9h4.5v2.6h-4.5zM620.9 326.9h5.6v2.6h-5.6z" fill="#d0d0d0" opacity="0.55"/><rect x="580.0" y="332.0" width="52.0" height="6.5" fill="#3e3e3e" /><path d="M582 334.2h6.6v2.6h-6.6zM590.3 334.2h5.2v2.6h-5.2z" fill="#d0d0d0" opacity="0.55"/><rect x="580.0" y="339.2" width="52.0" height="6.5" fill="#3e3e3e" /><path d="M582 341.4h5.9v2.6h-5.9zM589.8 341.4h3.1v2.6h-3.1zM594.6 341.4h1.4v2.6h-1.4z" fill="#d0d0d0" opacity="0.55"/><rect x="580.0" y="346.5" width="52.0" height="6.5" fill="#3e3e3e" /><path d="M582 348.7h8.3v2.6h-8.3zM591.7 348.7h8.9v2.6h-8.9zM602.2 348.7h8.6v2.6h-8.6zM612 348.7h8.4v2.6h-8.4zM622.1 348.7h5.9v2.6h-5.9z" fill="#d0d0d0" opacity="0.55"/><rect x="581.0" y="350.0" width="52.0" height="5.0" fill="#5a6282" /><rect x="511.0" y="24.0" width="124.0" height="331.0" fill="#4a4a4a" opacity="0.45"/></svg><div class="wheel" style="left:17.1px;top:36.2px;opacity:0.35;filter:saturate(0.2);"></div><div class="sv" style="left:31.8px;top:51.0px;background:linear-gradient(to bottom,rgba(0,0,0,0),#000),linear-gradient(to right,#fff,#a03030);opacity:0.35;filter:saturate(0.2);"></div><svg width="635" height="355" viewBox="0 0 635 355"><rect x="582.0" y="30.5" width="51.0" height="48.0" fill="#b0b0b0" /><rect x="582.0" y="30.5" width="51.0" height="20.0" fill="#cfcfcf" /><rect x="582.0" y="60.0" width="51.0" height="18.0" fill="#fff" /><rect x="582.0" y="30.5" width="51.0" height="48.0" fill="none" stroke="#c03030" stroke-width="0.8"/><g transform="translate(596,32) scale(0.1)"><use href="#girl" transform="translate(-60,-40)"/></g><rect x="527" y="38" width="55" height="20.7" rx="4.5" fill="#0e0d10" opacity="0.86"/><circle cx="533.5" cy="43.8" r="3.3" fill="#8a3cf0"/><path d="M532 43l1.5 2l1.5-2" stroke="#fff" stroke-width="1" fill="none"/><circle cx="541" cy="43.8" r="2.3" fill="#e8c840"/><text x="545.5" y="46.7" font-size="7.4" fill="#8fa0ff" opacity="0.7">AC</text><text x="564.4" y="46.9" font-size="7.6" font-weight="bold" fill="#eeeeee">G</text><text x="530" y="55.5" font-size="7.6" font-weight="bold" fill="#eeeeee">U</text><rect x="527" y="63" width="90" height="12.1" rx="4.5" fill="#0e0d10" opacity="0.86"/><rect x="530.5" y="66.3" width="5" height="5" rx="1.5" fill="#e07070"/><rect x="537" y="66.3" width="5" height="5" rx="1.5" fill="#30c090"/><rect x="543.5" y="66.3" width="5" height="5" rx="1.5" fill="#8a30d0"/><text x="550.5" y="71.7" font-size="7.4" fill="#c070d0" opacity="0.7">G</text><text x="563" y="71.9" font-size="7.6" font-weight="bold" fill="#eeeeee">BEC RUB K</text><rect x="527" y="79.6" width="106" height="29.3" rx="4.5" fill="#0e0d10" opacity="0.86"/><circle cx="533.5" cy="85.4" r="3.3" fill="#e05a8a"/><path d="M532 84.6l1.5 2l1.5-2" stroke="#fff" stroke-width="1" fill="none"/><text x="539.5" y="88.3" font-size="7.4" fill="#7aa8ff" opacity="0.7">O</text><text x="552.6" y="88.5" font-size="7.6" font-weight="bold" fill="#eeeeee">SSPB KONN PNGC</text><text x="530" y="97.1" font-size="7.6" font-weight="bold" fill="#eeeeee">PE SRPM KBD SNNU HW</text><text x="530" y="105.7" font-size="7.6" font-weight="bold" fill="#eeeeee">UDR CDM BN</text><rect x="527" y="112" width="106" height="20.7" rx="4.5" fill="#0e0d10" opacity="0.86"/><circle cx="533.5" cy="117.8" r="3.3" fill="#8a3cf0"/><path d="M532 117l1.5 2l1.5-2" stroke="#fff" stroke-width="1" fill="none"/><circle cx="541" cy="117.8" r="2.3" fill="#e8c840"/><text x="545.5" y="120.7" font-size="7.4" fill="#8fa0ff" opacity="0.7">AUG</text><text x="572.5" y="120.9" font-size="7.6" font-weight="bold" fill="#eeeeee">MPUO MG RN</text><text x="530" y="129.5" font-size="7.6" font-weight="bold" fill="#eeeeee">BBH RPU KU</text><rect x="527" y="137" width="55" height="12.1" rx="4.5" fill="#0e0d10" opacity="0.86"/><circle cx="533.5" cy="142.8" r="3.3" fill="#9b59d0"/><path d="M532 142l1.5 2l1.5-2" stroke="#fff" stroke-width="1" fill="none"/><text x="539.5" y="145.7" font-size="7.4" fill="#c070d0" opacity="0.7">RWE</text><text x="561" y="145.9" font-size="7.6" font-weight="bold" fill="#eeeeee">EK</text><rect x="527" y="153" width="106" height="20.7" rx="4.5" fill="#0e0d10" opacity="0.86"/><rect x="530.5" y="156.3" width="5" height="5" rx="1.5" fill="#e07070"/><rect x="537" y="156.3" width="5" height="5" rx="1.5" fill="#30c090"/><rect x="543.5" y="156.3" width="5" height="5" rx="1.5" fill="#8a30d0"/><text x="550.5" y="161.7" font-size="7.4" fill="#7aa8ff" opacity="0.7">M</text><text x="566.3" y="161.9" font-size="7.6" font-weight="bold" fill="#eeeeee">ERA PCO HKS</text><text x="530" y="170.5" font-size="7.6" font-weight="bold" fill="#eeeeee">DCSA NWM BSNA ENC</text><rect x="527" y="177.4" width="90" height="12.1" rx="4.5" fill="#0e0d10" opacity="0.86"/><circle cx="533.5" cy="183.2" r="3.3" fill="#8a3cf0"/><path d="M532 182.4l1.5 2l1.5-2" stroke="#fff" stroke-width="1" fill="none"/><text x="539.5" y="186.1" font-size="7.4" fill="#8fa0ff" opacity="0.7">D</text><text x="551.2" y="186.3" font-size="7.6" font-weight="bold" fill="#eeeeee">HCGE BRO SD</text></svg></div><div class="cell" style="left:1280px;top:0px"><svg width="635" height="355" viewBox="0 0 635 355"><rect x="0.0" y="0.0" width="635.0" height="355.0" fill="#3a3a3a" /><rect x="0.0" y="0.0" width="635.0" height="7.5" fill="#3e3e3e" /><rect x="0.0" y="7.5" width="635.0" height="8.5" fill="#4a4a4a" /><rect x="0.0" y="16.0" width="635.0" height="8.0" fill="#3a3a3a" /><rect x="83.0" y="16.0" width="427.0" height="8.0" fill="#4f4f4f" /><use href="#menu"/><rect x="0.0" y="24.0" width="16.0" height="331.0" fill="#3b3b3b" /><use href="#tools"/><use href="#lpanel"/><rect x="83.0" y="24.0" width="425.0" height="327.0" fill="#2e2e2e" /><rect x="83.0" y="24.0" width="425.0" height="7.5" fill="#333333" /><rect x="83.5" y="25.0" width="32.0" height="6.0" fill="#66708c" /><path d="M86 26.8h6v2.2h-6zM93.9 26.8h3.6v2.2h-3.6zM99.3 26.8h3.1v2.2h-3.1zM104 26.8h2v2.2h-2z" fill="#d8d8e8" opacity="0.5"/><rect x="83.0" y="350.5" width="425.0" height="4.5" fill="#3a3a3a" /><path d="M86 351.5h4.4v2.2h-4.4zM92 351.5h6.1v2.2h-6.1zM99.3 351.5h8.7v2.2h-8.7zM109.9 351.5h7.2v2.2h-7.2zM119.3 351.5h3.5v2.2h-3.5zM124.7 351.5h8.1v2.2h-8.1zM134.7 351.5h6.4v2.2h-6.4zM143 351.5h3.7v2.2h-3.7zM148.3 351.5h7.3v2.2h-7.3zM157.7 351.5h6.9v2.2h-6.9zM166.4 351.5h5v2.2h-5zM173 351.5h4.4v2.2h-4.4zM179.6 351.5h6.4v2.2h-6.4z" fill="#999" opacity="0.35"/><rect x="83.0" y="31.5" width="425.0" height="319.0" fill="#dcdcdc" /><polygon points="403,31.5 508,31.5 508,147" fill="#2e2e2e"/><clipPath id="cp2"><rect x="83" y="31.5" width="425" height="319"/></clipPath><g clip-path="url(#cp2)"><g opacity="0.45" style="filter:saturate(0.5)"><use href="#girl" transform="translate(309,131) rotate(47) scale(2.0) translate(-281,-116.5)"/></g><use href="#girlol" opacity="0.6" transform="translate(309,131) rotate(47) scale(2.0) translate(-281,-116.5)"/><use href="#sketch" transform="translate(309,131) rotate(47) scale(2.0) translate(-281,-116.5)"/></g><path d="M454,341 C470,330 490,310 506,299.5 L508,351 L440,351 Z" fill="#ffffff"/><rect x="508.0" y="24.0" width="3.0" height="327.0" fill="#2e2e2e" /><rect x="511.0" y="24.0" width="66.0" height="331.0" fill="#383838" /><rect x="511.0" y="24.0" width="66.0" height="6.0" fill="#333" /><path d="M523 25.5h6.2v2.2h-6.2zM530.4 25.5h7.6v2.2h-7.6zM539.5 25.5h1.5v2.2h-1.5z" fill="#aaa" opacity="0.35"/><rect x="513.0" y="30.5" width="62.0" height="21.0" fill="#3c3c3c" /><rect x="541.0" y="32.0" width="14.0" height="3.0" fill="#dedede" opacity="0.8"/><path d="M515 38.5h7.4v3h-7.4zM524.6 38.5h7.1v3h-7.1zM533 38.5h7.2v3h-7.2zM541.7 38.5h4.1v3h-4.1zM547.4 38.5h6.5v3h-6.5zM555.2 38.5h6.2v3h-6.2z" fill="#999" opacity="0.45"/><path d="M515 45.5h9v3h-9zM526.1 45.5h4.9v3h-4.9zM532.3 45.5h4.2v3h-4.2zM538 45.5h8.9v3h-8.9zM548.6 45.5h3.1v3h-3.1zM553.3 45.5h5.7v3h-5.7zM560.2 45.5h2.8v3h-2.8z" fill="#999" opacity="0.45"/><rect x="512.0" y="64.9" width="64.0" height="1.0" fill="#2e2e2e" /><rect x="527.0" y="54.0" width="10.5" height="9.9" fill="#ececec" /><path d="M540 55h6v2.4h-6zM548 55h5.3v2.4h-5.3zM555 55h3.7v2.4h-3.7z" fill="#c8c8c8" opacity="0.5"/><path d="M540 60h4.6v2.4h-4.6zM546 60h7.8v2.4h-7.8zM555.8 60h3.2v2.4h-3.2z" fill="#c8c8c8" opacity="0.5"/><rect x="512.0" y="78.3" width="64.0" height="1.0" fill="#2e2e2e" /><rect x="527.0" y="67.4" width="10.5" height="9.9" fill="#ececec" /><path d="M540 68.4h6.3v2.4h-6.3zM548.5 68.4h5.5v2.4h-5.5zM555.7 68.4h3.3v2.4h-3.3z" fill="#c8c8c8" opacity="0.5"/><path d="M540 73.4h8.9v2.4h-8.9zM550.6 73.4h5.4v2.4h-5.4zM557.2 73.4h1.8v2.4h-1.8z" fill="#c8c8c8" opacity="0.5"/><rect x="512.0" y="91.7" width="64.0" height="1.0" fill="#2e2e2e" /><rect x="527.0" y="80.8" width="10.5" height="9.9" fill="#ececec" /><path d="M540 81.8h5.2v2.4h-5.2zM546.9 81.8h5.4v2.4h-5.4zM553.7 81.8h5.3v2.4h-5.3z" fill="#c8c8c8" opacity="0.5"/><path d="M540 86.8h8.4v2.4h-8.4zM550.6 86.8h3.7v2.4h-3.7zM555.5 86.8h3.5v2.4h-3.5z" fill="#c8c8c8" opacity="0.5"/><rect x="525.0" y="92.7" width="38.0" height="12.4" fill="#4e5670" /><rect x="512.0" y="105.1" width="64.0" height="1.0" fill="#2e2e2e" /><rect x="527.0" y="94.2" width="10.5" height="9.9" fill="#ececec" /><path d="M540 95.2h8.6v2.4h-8.6zM550.7 95.2h5v2.4h-5zM557.5 95.2h1.5v2.4h-1.5z" fill="#c8c8c8" opacity="0.5"/><path d="M540 100.2h4.5v2.4h-4.5zM546.4 100.2h9v2.4h-9zM557.1 100.2h1.9v2.4h-1.9z" fill="#c8c8c8" opacity="0.5"/><rect x="512.0" y="118.5" width="64.0" height="1.0" fill="#2e2e2e" /><rect x="527.0" y="107.6" width="10.5" height="9.9" fill="#ececec" /><path d="M540 108.6h7.7v2.4h-7.7zM549.2 108.6h4.1v2.4h-4.1zM554.8 108.6h4.2v2.4h-4.2z" fill="#c8c8c8" opacity="0.5"/><path d="M540 113.6h6v2.4h-6zM547.9 113.6h4.6v2.4h-4.6zM553.8 113.6h3.9v2.4h-3.9z" fill="#c8c8c8" opacity="0.5"/><rect x="512.0" y="131.9" width="64.0" height="1.0" fill="#2e2e2e" /><rect x="527.0" y="121.0" width="10.5" height="9.9" fill="#ececec" /><path d="M540 122h8.1v2.4h-8.1zM549.5 122h4.3v2.4h-4.3zM555 122h4v2.4h-4z" fill="#c8c8c8" opacity="0.5"/><path d="M540 127h8.3v2.4h-8.3zM549.9 127h6.2v2.4h-6.2zM557.5 127h1.5v2.4h-1.5z" fill="#c8c8c8" opacity="0.5"/><rect x="563.0" y="52.0" width="2.5" height="299.0" fill="#444" /><rect x="568.0" y="24.0" width="67.0" height="331.0" fill="#383838" /><rect x="569.0" y="27.0" width="9.0" height="8.0" fill="#474747" /><rect x="569.0" y="38.5" width="9.0" height="8.0" fill="#474747" /><rect x="569.0" y="50.0" width="9.0" height="8.0" fill="#474747" /><rect x="569.0" y="61.5" width="9.0" height="8.0" fill="#474747" /><rect x="569.0" y="73.0" width="9.0" height="8.0" fill="#474747" /><rect x="569.0" y="84.5" width="9.0" height="8.0" fill="#474747" /><rect x="569.0" y="96.0" width="9.0" height="8.0" fill="#474747" /><rect x="569.0" y="107.5" width="9.0" height="8.0" fill="#474747" /><rect x="580.0" y="24.0" width="55.0" height="5.0" fill="#333" /><rect x="582.0" y="29.6" width="51.0" height="52.4" fill="#fff" /><rect x="580.0" y="83.0" width="55.0" height="15.0" fill="#3a3a3a" /><path d="M583 85h7.7v2.5h-7.7zM592.8 85h5.4v2.5h-5.4zM600.2 85h4.2v2.5h-4.2zM606.3 85h3.4v2.5h-3.4zM611 85h3.6v2.5h-3.6zM616.1 85h6.5v2.5h-6.5zM624.1 85h6.5v2.5h-6.5z" fill="#aaa" opacity="0.4"/><path d="M583 91h3.9v2.5h-3.9zM588.8 91h4.9v2.5h-4.9zM595.2 91h7.3v2.5h-7.3zM604 91h4.8v2.5h-4.8zM610.3 91h8.9v2.5h-8.9zM621.1 91h6.2v2.5h-6.2zM628.8 91h2.2v2.5h-2.2z" fill="#aaa" opacity="0.4"/><rect x="580.0" y="100.0" width="52.0" height="6.5" fill="#3e3e3e" /><path d="M582 102.2h3.9v2.6h-3.9zM587.5 102.2h6.5v2.6h-6.5z" fill="#d0d0d0" opacity="0.55"/><rect x="580.0" y="107.2" width="52.0" height="6.5" fill="#3e3e3e" /><path d="M582 109.5h8v2.6h-8zM591.3 109.5h3.6v2.6h-3.6z" fill="#d0d0d0" opacity="0.55"/><rect x="580.0" y="114.5" width="52.0" height="6.5" fill="#3e3e3e" /><path d="M582 116.7h5.8v2.6h-5.8zM589.1 116.7h6.6v2.6h-6.6z" fill="#d0d0d0" opacity="0.55"/><rect x="580.0" y="121.8" width="52.0" height="6.5" fill="#3e3e3e" /><path d="M582 124h7v2.6h-7zM591 124h3.3v2.6h-3.3z" fill="#d0d0d0" opacity="0.55"/><rect x="580.0" y="129.0" width="52.0" height="6.5" fill="#3e3e3e" /><path d="M582 131.2h3.7v2.6h-3.7zM587.6 131.2h5.4v2.6h-5.4zM594.3 131.2h1.7v2.6h-1.7z" fill="#d0d0d0" opacity="0.55"/><rect x="580.0" y="136.2" width="52.0" height="6.5" fill="#3e3e3e" /><path d="M582 138.4h6.6v2.6h-6.6zM590.2 138.4h5.8v2.6h-5.8z" fill="#d0d0d0" opacity="0.55"/><rect x="580.0" y="143.5" width="52.0" height="6.5" fill="#3e3e3e" /><path d="M582 145.7h8.1v2.6h-8.1zM591.4 145.7h4.6v2.6h-4.6z" fill="#d0d0d0" opacity="0.55"/><rect x="580.0" y="150.8" width="52.0" height="6.5" fill="#3e3e3e" /><path d="M582 152.9h6.4v2.6h-6.4zM590 152.9h6v2.6h-6z" fill="#d0d0d0" opacity="0.55"/><rect x="580.0" y="158.0" width="52.0" height="6.5" fill="#3e3e3e" /><path d="M582 160.2h5v2.6h-5zM588.8 160.2h7v2.6h-7z" fill="#d0d0d0" opacity="0.55"/><rect x="580.0" y="165.2" width="52.0" height="6.5" fill="#3e3e3e" /><path d="M582 167.4h5.7v2.6h-5.7zM589.4 167.4h5.6v2.6h-5.6z" fill="#d0d0d0" opacity="0.55"/><rect x="580.0" y="172.5" width="52.0" height="6.5" fill="#3e3e3e" /><path d="M582 174.7h9v2.6h-9zM592.5 174.7h3.5v2.6h-3.5z" fill="#d0d0d0" opacity="0.55"/><rect x="580.0" y="179.8" width="52.0" height="6.5" fill="#3e3e3e" /><path d="M582 181.9h8.7v2.6h-8.7zM592.6 181.9h3.4v2.6h-3.4z" fill="#d0d0d0" opacity="0.55"/><rect x="580.0" y="187.0" width="52.0" height="6.5" fill="#3e3e3e" /><path d="M582 189.2h6.8v2.6h-6.8zM590.1 189.2h5.9v2.6h-5.9z" fill="#d0d0d0" opacity="0.55"/><rect x="580.0" y="194.2" width="52.0" height="6.5" fill="#3e3e3e" /><path d="M582 196.4h4.7v2.6h-4.7zM588 196.4h5.2v2.6h-5.2zM594.9 196.4h1.1v2.6h-1.1z" fill="#d0d0d0" opacity="0.55"/><rect x="580.0" y="201.5" width="52.0" height="6.5" fill="#3e3e3e" /><path d="M582 203.7h5.7v2.6h-5.7zM589.1 203.7h6.9v2.6h-6.9z" fill="#d0d0d0" opacity="0.55"/><rect x="580.0" y="208.8" width="52.0" height="6.5" fill="#3e3e3e" /><path d="M582 210.9h7.8v2.6h-7.8zM592 210.9h4v2.6h-4z" fill="#d0d0d0" opacity="0.55"/><rect x="580.0" y="216.0" width="52.0" height="6.5" fill="#3e3e3e" /><path d="M582 218.2h7.1v2.6h-7.1zM590.4 218.2h4.1v2.6h-4.1z" fill="#d0d0d0" opacity="0.55"/><rect x="580.0" y="223.2" width="52.0" height="6.5" fill="#3e3e3e" /><path d="M582 225.4h3v2.6h-3zM587.1 225.4h7.9v2.6h-7.9z" fill="#d0d0d0" opacity="0.55"/><rect x="580.0" y="230.5" width="52.0" height="6.5" fill="#3e3e3e" /><path d="M582 232.7h8.9v2.6h-8.9zM592.6 232.7h3.4v2.6h-3.4z" fill="#d0d0d0" opacity="0.55"/><rect x="580.0" y="237.8" width="52.0" height="6.5" fill="#3e3e3e" /><path d="M582 239.9h6.3v2.6h-6.3zM590.1 239.9h5.9v2.6h-5.9z" fill="#d0d0d0" opacity="0.55"/><rect x="580.0" y="245.0" width="52.0" height="6.5" fill="#3e3e3e" /><path d="M582 247.2h6.5v2.6h-6.5zM590.6 247.2h5.1v2.6h-5.1z" fill="#d0d0d0" opacity="0.55"/><rect x="580.0" y="252.2" width="52.0" height="6.5" fill="#3e3e3e" /><path d="M582 254.4h7.3v2.6h-7.3zM591.1 254.4h4.9v2.6h-4.9z" fill="#d0d0d0" opacity="0.55"/><rect x="580.0" y="259.5" width="52.0" height="6.5" fill="#3e3e3e" /><path d="M582 261.7h4.2v2.6h-4.2zM587.9 261.7h6.2v2.6h-6.2z" fill="#d0d0d0" opacity="0.55"/><rect x="580.0" y="266.8" width="52.0" height="6.5" fill="#3e3e3e" /><path d="M582 268.9h4.7v2.6h-4.7zM588.2 268.9h6.7v2.6h-6.7z" fill="#d0d0d0" opacity="0.55"/><rect x="580.0" y="274.0" width="52.0" height="6.5" fill="#3e3e3e" /><path d="M582 276.2h4.2v2.6h-4.2zM587.5 276.2h4.4v2.6h-4.4zM594 276.2h2v2.6h-2z" fill="#d0d0d0" opacity="0.55"/><rect x="580.0" y="281.2" width="52.0" height="6.5" fill="#3e3e3e" /><path d="M582 283.4h6.9v2.6h-6.9zM590.4 283.4h5.6v2.6h-5.6z" fill="#d0d0d0" opacity="0.55"/><rect x="580.0" y="288.5" width="52.0" height="6.5" fill="#3e3e3e" /><path d="M582 290.7h4.7v2.6h-4.7zM588.3 290.7h6.9v2.6h-6.9z" fill="#d0d0d0" opacity="0.55"/><rect x="580.0" y="295.8" width="52.0" height="6.5" fill="#3e3e3e" /><path d="M582 297.9h6.9v2.6h-6.9zM590.4 297.9h5.6v2.6h-5.6z" fill="#d0d0d0" opacity="0.55"/><rect x="580.0" y="303.0" width="52.0" height="6.5" fill="#3e3e3e" /><path d="M582 305.2h7.6v2.6h-7.6zM591.3 305.2h4.7v2.6h-4.7z" fill="#d0d0d0" opacity="0.55"/><rect x="580.0" y="310.2" width="52.0" height="6.5" fill="#3e3e3e" /><path d="M582 312.4h6.3v2.6h-6.3zM589.6 312.4h6.4v2.6h-6.4z" fill="#d0d0d0" opacity="0.55"/><rect x="580.0" y="317.5" width="52.0" height="6.5" fill="#3e3e3e" /><path d="M582 319.7h4v2.6h-4zM587.8 319.7h4.3v2.6h-4.3zM593.5 319.7h2.5v2.6h-2.5z" fill="#d0d0d0" opacity="0.55"/><rect x="580.0" y="324.8" width="52.0" height="6.5" fill="#3e3e3e" /><path d="M582 326.9h4.8v2.6h-4.8zM588.5 326.9h4.4v2.6h-4.4zM594.4 326.9h5.3v2.6h-5.3zM601.5 326.9h4.8v2.6h-4.8zM608 326.9h4.7v2.6h-4.7zM614.5 326.9h4.5v2.6h-4.5zM620.9 326.9h5.6v2.6h-5.6z" fill="#d0d0d0" opacity="0.55"/><rect x="580.0" y="332.0" width="52.0" height="6.5" fill="#3e3e3e" /><path d="M582 334.2h6.6v2.6h-6.6zM590.3 334.2h5.2v2.6h-5.2z" fill="#d0d0d0" opacity="0.55"/><rect x="580.0" y="339.2" width="52.0" height="6.5" fill="#3e3e3e" /><path d="M582 341.4h5.9v2.6h-5.9zM589.8 341.4h3.1v2.6h-3.1zM594.6 341.4h1.4v2.6h-1.4z" fill="#d0d0d0" opacity="0.55"/><rect x="580.0" y="346.5" width="52.0" height="6.5" fill="#3e3e3e" /><path d="M582 348.7h8v2.6h-8zM592.1 348.7h3.9v2.6h-3.9z" fill="#d0d0d0" opacity="0.55"/><rect x="581.0" y="350.0" width="52.0" height="5.0" fill="#5a6282" /></svg><div class="wheel" style="left:17.1px;top:36.2px;"></div><div class="sv" style="left:31.8px;top:51.0px;background:linear-gradient(to bottom,rgba(0,0,0,0),#000),linear-gradient(to right,#fff,#e00000);"></div><svg width="635" height="355" viewBox="0 0 635 355"><rect x="583.0" y="30.0" width="50.0" height="32.0" fill="#e8e8e8" /><rect x="583.0" y="30.0" width="20.0" height="32.0" fill="#cfcfcf" opacity="0.6"/><path d="M588,56 L604,31 M596,62 L628,40 M604,36 L630,58" stroke="#d08080" stroke-width="0.5" fill="none"/><rect x="527" y="46.4" width="63" height="12.1" rx="4.5" fill="#0e0d10" opacity="0.86"/><circle cx="533.5" cy="52.2" r="3.3" fill="#8a3cf0"/><path d="M532 51.4l1.5 2l1.5-2" stroke="#fff" stroke-width="1" fill="none"/><text x="539.5" y="55.1" font-size="7.4" fill="#8fa0ff" opacity="0.7">S</text><text x="551.3" y="55.3" font-size="7.6" font-weight="bold" fill="#eeeeee">AM DR</text><rect x="527" y="63" width="106" height="29.3" rx="4.5" fill="#0e0d10" opacity="0.86"/><rect x="530.5" y="66.3" width="5" height="5" rx="1.5" fill="#e07070"/><rect x="537" y="66.3" width="5" height="5" rx="1.5" fill="#30c090"/><rect x="543.5" y="66.3" width="5" height="5" rx="1.5" fill="#8a30d0"/><text x="550.5" y="71.7" font-size="7.4" fill="#c070d0" opacity="0.7">U</text><text x="563.4" y="71.9" font-size="7.6" font-weight="bold" fill="#eeeeee">ROOC MBBA GM</text><text x="530" y="80.5" font-size="7.6" font-weight="bold" fill="#eeeeee">RCAB KW HP EAG RCK</text><text x="530" y="89.1" font-size="7.6" font-weight="bold" fill="#eeeeee">GEP KHHR SE EMWG A</text><rect x="527" y="96" width="90" height="12.1" rx="4.5" fill="#0e0d10" opacity="0.86"/><rect x="530.5" y="99.3" width="5" height="5" rx="1.5" fill="#e07070"/><rect x="537" y="99.3" width="5" height="5" rx="1.5" fill="#30c090"/><rect x="543.5" y="99.3" width="5" height="5" rx="1.5" fill="#8a30d0"/><text x="550.5" y="104.7" font-size="7.4" fill="#7aa8ff" opacity="0.7">UN</text><text x="569.7" y="104.9" font-size="7.6" font-weight="bold" fill="#eeeeee">WODO AP</text><rect x="527" y="112" width="106" height="20.7" rx="4.5" fill="#0e0d10" opacity="0.86"/><circle cx="533.5" cy="117.8" r="3.3" fill="#8a3cf0"/><path d="M532 117l1.5 2l1.5-2" stroke="#fff" stroke-width="1" fill="none"/><circle cx="541" cy="117.8" r="2.3" fill="#e8c840"/><text x="545.5" y="120.7" font-size="7.4" fill="#8fa0ff" opacity="0.7">AUG</text><text x="572.5" y="120.9" font-size="7.6" font-weight="bold" fill="#eeeeee">MPUO MG RN</text><text x="530" y="129.5" font-size="7.6" font-weight="bold" fill="#eeeeee">BBH RPU KU</text><rect x="527" y="137" width="70" height="12.1" rx="4.5" fill="#0e0d10" opacity="0.86"/><circle cx="533.5" cy="142.8" r="3.3" fill="#9b59d0"/><path d="M532 142l1.5 2l1.5-2" stroke="#fff" stroke-width="1" fill="none"/><text x="539.5" y="145.7" font-size="7.4" fill="#c070d0" opacity="0.7">SE</text><text x="556.5" y="145.9" font-size="7.6" font-weight="bold" fill="#eeeeee">KBNO E</text><rect x="527" y="153" width="106" height="20.7" rx="4.5" fill="#0e0d10" opacity="0.86"/><rect x="530.5" y="156.3" width="5" height="5" rx="1.5" fill="#e07070"/><rect x="537" y="156.3" width="5" height="5" rx="1.5" fill="#30c090"/><rect x="543.5" y="156.3" width="5" height="5" rx="1.5" fill="#8a30d0"/><text x="550.5" y="161.7" font-size="7.4" fill="#7aa8ff" opacity="0.7">M</text><text x="566.3" y="161.9" font-size="7.6" font-weight="bold" fill="#eeeeee">ERA PCO HKS</text><text x="530" y="170.5" font-size="7.6" font-weight="bold" fill="#eeeeee">DCSA NWM BSNA ENC</text><rect x="527" y="177.4" width="76" height="12.1" rx="4.5" fill="#0e0d10" opacity="0.86"/><circle cx="533.5" cy="183.2" r="3.3" fill="#8a3cf0"/><path d="M532 182.4l1.5 2l1.5-2" stroke="#fff" stroke-width="1" fill="none"/><circle cx="541" cy="183.2" r="2.3" fill="#e8c840"/><text x="545.5" y="186.1" font-size="7.4" fill="#8fa0ff" opacity="0.7">OC</text><text x="560.7" y="186.3" font-size="7.6" font-weight="bold" fill="#eeeeee">WS BBB</text></svg></div><div class="cell" style="left:0px;top:360px"><svg width="635" height="355" viewBox="0 0 635 355"><rect x="0.0" y="0.0" width="635.0" height="355.0" fill="#3a3a3a" /><rect x="0.0" y="0.0" width="635.0" height="7.5" fill="#3e3e3e" /><rect x="0.0" y="7.5" width="635.0" height="8.5" fill="#4a4a4a" /><rect x="0.0" y="16.0" width="635.0" height="8.0" fill="#3a3a3a" /><rect x="83.0" y="16.0" width="427.0" height="8.0" fill="#4f4f4f" /><use href="#menu"/><rect x="0.0" y="24.0" width="16.0" height="331.0" fill="#3b3b3b" /><use href="#tools"/><use href="#lpanel"/><rect x="83.0" y="24.0" width="425.0" height="327.0" fill="#2e2e2e" /><rect x="83.0" y="24.0" width="425.0" height="7.5" fill="#333333" /><rect x="83.5" y="25.0" width="32.0" height="6.0" fill="#66708c" /><path d="M86 26.8h6v2.2h-6zM93.9 26.8h3.6v2.2h-3.6zM99.3 26.8h3.1v2.2h-3.1zM104 26.8h2v2.2h-2z" fill="#d8d8e8" opacity="0.5"/><rect x="83.0" y="350.5" width="425.0" height="4.5" fill="#3a3a3a" /><path d="M86 351.5h4.4v2.2h-4.4zM92 351.5h6.1v2.2h-6.1zM99.3 351.5h8.7v2.2h-8.7zM109.9 351.5h7.2v2.2h-7.2zM119.3 351.5h3.5v2.2h-3.5zM124.7 351.5h8.1v2.2h-8.1zM134.7 351.5h6.4v2.2h-6.4zM143 351.5h3.7v2.2h-3.7zM148.3 351.5h7.3v2.2h-7.3zM157.7 351.5h6.9v2.2h-6.9zM166.4 351.5h5v2.2h-5zM173 351.5h4.4v2.2h-4.4zM179.6 351.5h6.4v2.2h-6.4z" fill="#999" opacity="0.35"/><rect x="83.0" y="31.5" width="425.0" height="319.0" fill="#dadada" /><polygon points="83,31.5 105,31.5 83,86" fill="#fafafa"/><polygon points="508,73 508,351 401.7,351" fill="#2e2e2e"/><clipPath id="cp3"><rect x="83" y="31.5" width="425" height="319"/></clipPath><g clip-path="url(#cp3)"><g opacity="0.3" style="filter:saturate(0.5)"><use href="#girl" transform="translate(327,102) rotate(20) scale(-1.85,1.85) translate(-281,-116.5)"/></g><use href="#girlol" opacity="0.6" transform="translate(327,102) rotate(20) scale(-1.85,1.85) translate(-281,-116.5)"/><use href="#sketch" transform="translate(327,102) rotate(20) scale(-1.85,1.85) translate(-281,-116.5)"/></g><rect x="508.0" y="24.0" width="3.0" height="327.0" fill="#2e2e2e" /><rect x="511.0" y="24.0" width="66.0" height="331.0" fill="#383838" /><rect x="511.0" y="24.0" width="66.0" height="6.0" fill="#333" /><path d="M523 25.5h6.2v2.2h-6.2zM530.4 25.5h7.6v2.2h-7.6zM539.5 25.5h1.5v2.2h-1.5z" fill="#aaa" opacity="0.35"/><rect x="513.0" y="30.5" width="62.0" height="21.0" fill="#3c3c3c" /><rect x="541.0" y="32.0" width="14.0" height="3.0" fill="#dedede" opacity="0.8"/><path d="M515 38.5h7.4v3h-7.4zM524.6 38.5h7.1v3h-7.1zM533 38.5h7.2v3h-7.2zM541.7 38.5h4.1v3h-4.1zM547.4 38.5h6.5v3h-6.5zM555.2 38.5h6.2v3h-6.2z" fill="#999" opacity="0.45"/><path d="M515 45.5h9v3h-9zM526.1 45.5h4.9v3h-4.9zM532.3 45.5h4.2v3h-4.2zM538 45.5h8.9v3h-8.9zM548.6 45.5h3.1v3h-3.1zM553.3 45.5h5.7v3h-5.7zM560.2 45.5h2.8v3h-2.8z" fill="#999" opacity="0.45"/><rect x="512.0" y="64.9" width="64.0" height="1.0" fill="#2e2e2e" /><rect x="527.0" y="54.0" width="10.5" height="9.9" fill="#ececec" /><path d="M540 55h6v2.4h-6zM548 55h5.3v2.4h-5.3zM555 55h3.7v2.4h-3.7z" fill="#c8c8c8" opacity="0.5"/><path d="M540 60h4.6v2.4h-4.6zM546 60h7.8v2.4h-7.8zM555.8 60h3.2v2.4h-3.2z" fill="#c8c8c8" opacity="0.5"/><rect x="512.0" y="78.3" width="64.0" height="1.0" fill="#2e2e2e" /><rect x="527.0" y="67.4" width="10.5" height="9.9" fill="#ececec" /><path d="M540 68.4h6.3v2.4h-6.3zM548.5 68.4h5.5v2.4h-5.5zM555.7 68.4h3.3v2.4h-3.3z" fill="#c8c8c8" opacity="0.5"/><path d="M540 73.4h8.9v2.4h-8.9zM550.6 73.4h5.4v2.4h-5.4zM557.2 73.4h1.8v2.4h-1.8z" fill="#c8c8c8" opacity="0.5"/><rect x="512.0" y="91.7" width="64.0" height="1.0" fill="#2e2e2e" /><rect x="527.0" y="80.8" width="10.5" height="9.9" fill="#ececec" /><path d="M540 81.8h5.2v2.4h-5.2zM546.9 81.8h5.4v2.4h-5.4zM553.7 81.8h5.3v2.4h-5.3z" fill="#c8c8c8" opacity="0.5"/><path d="M540 86.8h8.4v2.4h-8.4zM550.6 86.8h3.7v2.4h-3.7zM555.5 86.8h3.5v2.4h-3.5z" fill="#c8c8c8" opacity="0.5"/><rect x="525.0" y="92.7" width="38.0" height="12.4" fill="#4e5670" /><rect x="512.0" y="105.1" width="64.0" height="1.0" fill="#2e2e2e" /><rect x="527.0" y="94.2" width="10.5" height="9.9" fill="#ececec" /><path d="M540 95.2h8.6v2.4h-8.6zM550.7 95.2h5v2.4h-5zM557.5 95.2h1.5v2.4h-1.5z" fill="#c8c8c8" opacity="0.5"/><path d="M540 100.2h4.5v2.4h-4.5zM546.4 100.2h9v2.4h-9zM557.1 100.2h1.9v2.4h-1.9z" fill="#c8c8c8" opacity="0.5"/><rect x="512.0" y="118.5" width="64.0" height="1.0" fill="#2e2e2e" /><rect x="527.0" y="107.6" width="10.5" height="9.9" fill="#ececec" /><path d="M540 108.6h7.7v2.4h-7.7zM549.2 108.6h4.1v2.4h-4.1zM554.8 108.6h4.2v2.4h-4.2z" fill="#c8c8c8" opacity="0.5"/><path d="M540 113.6h6v2.4h-6zM547.9 113.6h4.6v2.4h-4.6zM553.8 113.6h3.9v2.4h-3.9z" fill="#c8c8c8" opacity="0.5"/><rect x="512.0" y="131.9" width="64.0" height="1.0" fill="#2e2e2e" /><rect x="527.0" y="121.0" width="10.5" height="9.9" fill="#ececec" /><path d="M540 122h8.1v2.4h-8.1zM549.5 122h4.3v2.4h-4.3zM555 122h4v2.4h-4z" fill="#c8c8c8" opacity="0.5"/><path d="M540 127h8.3v2.4h-8.3zM549.9 127h6.2v2.4h-6.2zM557.5 127h1.5v2.4h-1.5z" fill="#c8c8c8" opacity="0.5"/><rect x="563.0" y="52.0" width="2.5" height="299.0" fill="#444" /><rect x="568.0" y="24.0" width="67.0" height="331.0" fill="#383838" /><rect x="569.0" y="27.0" width="9.0" height="8.0" fill="#474747" /><rect x="569.0" y="38.5" width="9.0" height="8.0" fill="#474747" /><rect x="569.0" y="50.0" width="9.0" height="8.0" fill="#474747" /><rect x="569.0" y="61.5" width="9.0" height="8.0" fill="#474747" /><rect x="569.0" y="73.0" width="9.0" height="8.0" fill="#474747" /><rect x="569.0" y="84.5" width="9.0" height="8.0" fill="#474747" /><rect x="569.0" y="96.0" width="9.0" height="8.0" fill="#474747" /><rect x="569.0" y="107.5" width="9.0" height="8.0" fill="#474747" /><rect x="580.0" y="24.0" width="55.0" height="5.0" fill="#333" /><rect x="582.0" y="29.6" width="51.0" height="52.4" fill="#fff" /><rect x="580.0" y="83.0" width="55.0" height="15.0" fill="#3a3a3a" /><path d="M583 85h7.7v2.5h-7.7zM592.8 85h5.4v2.5h-5.4zM600.2 85h4.2v2.5h-4.2zM606.3 85h3.4v2.5h-3.4zM611 85h3.6v2.5h-3.6zM616.1 85h6.5v2.5h-6.5zM624.1 85h6.5v2.5h-6.5z" fill="#aaa" opacity="0.4"/><path d="M583 91h3.9v2.5h-3.9zM588.8 91h4.9v2.5h-4.9zM595.2 91h7.3v2.5h-7.3zM604 91h4.8v2.5h-4.8zM610.3 91h8.9v2.5h-8.9zM621.1 91h6.2v2.5h-6.2zM628.8 91h2.2v2.5h-2.2z" fill="#aaa" opacity="0.4"/><rect x="580.0" y="100.0" width="52.0" height="6.5" fill="#3e3e3e" /><path d="M582 102.2h3.9v2.6h-3.9zM587.5 102.2h6.5v2.6h-6.5z" fill="#d0d0d0" opacity="0.55"/><rect x="580.0" y="107.2" width="52.0" height="6.5" fill="#3e3e3e" /><path d="M582 109.5h8v2.6h-8zM591.3 109.5h3.6v2.6h-3.6z" fill="#d0d0d0" opacity="0.55"/><rect x="580.0" y="114.5" width="52.0" height="6.5" fill="#3e3e3e" /><path d="M582 116.7h5.8v2.6h-5.8zM589.1 116.7h6.6v2.6h-6.6z" fill="#d0d0d0" opacity="0.55"/><rect x="580.0" y="121.8" width="52.0" height="6.5" fill="#3e3e3e" /><path d="M582 124h7v2.6h-7zM591 124h3.3v2.6h-3.3z" fill="#d0d0d0" opacity="0.55"/><rect x="580.0" y="129.0" width="52.0" height="6.5" fill="#3e3e3e" /><path d="M582 131.2h3.7v2.6h-3.7zM587.6 131.2h5.4v2.6h-5.4zM594.3 131.2h1.7v2.6h-1.7z" fill="#d0d0d0" opacity="0.55"/><rect x="580.0" y="136.2" width="52.0" height="6.5" fill="#3e3e3e" /><path d="M582 138.4h6.6v2.6h-6.6zM590.2 138.4h5.8v2.6h-5.8z" fill="#d0d0d0" opacity="0.55"/><rect x="580.0" y="143.5" width="52.0" height="6.5" fill="#3e3e3e" /><path d="M582 145.7h8.1v2.6h-8.1zM591.4 145.7h4.6v2.6h-4.6z" fill="#d0d0d0" opacity="0.55"/><rect x="580.0" y="150.8" width="52.0" height="6.5" fill="#3e3e3e" /><path d="M582 152.9h6.4v2.6h-6.4zM590 152.9h6v2.6h-6z" fill="#d0d0d0" opacity="0.55"/><rect x="580.0" y="158.0" width="52.0" height="6.5" fill="#3e3e3e" /><path d="M582 160.2h5v2.6h-5zM588.8 160.2h7v2.6h-7z" fill="#d0d0d0" opacity="0.55"/><rect x="580.0" y="165.2" width="52.0" height="6.5" fill="#3e3e3e" /><path d="M582 167.4h5.7v2.6h-5.7zM589.4 167.4h5.6v2.6h-5.6z" fill="#d0d0d0" opacity="0.55"/><rect x="580.0" y="172.5" width="52.0" height="6.5" fill="#3e3e3e" /><path d="M582 174.7h9v2.6h-9zM592.5 174.7h3.5v2.6h-3.5z" fill="#d0d0d0" opacity="0.55"/><rect x="580.0" y="179.8" width="52.0" height="6.5" fill="#3e3e3e" /><path d="M582 181.9h8.7v2.6h-8.7zM592.6 181.9h3.4v2.6h-3.4z" fill="#d0d0d0" opacity="0.55"/><rect x="580.0" y="187.0" width="52.0" height="6.5" fill="#3e3e3e" /><path d="M582 189.2h6.8v2.6h-6.8zM590.1 189.2h5.9v2.6h-5.9z" fill="#d0d0d0" opacity="0.55"/><rect x="580.0" y="194.2" width="52.0" height="6.5" fill="#3e3e3e" /><path d="M582 196.4h4.7v2.6h-4.7zM588 196.4h5.2v2.6h-5.2zM594.9 196.4h1.1v2.6h-1.1z" fill="#d0d0d0" opacity="0.55"/><rect x="580.0" y="201.5" width="52.0" height="6.5" fill="#3e3e3e" /><path d="M582 203.7h5.7v2.6h-5.7zM589.1 203.7h6.9v2.6h-6.9z" fill="#d0d0d0" opacity="0.55"/><rect x="580.0" y="208.8" width="52.0" height="6.5" fill="#3e3e3e" /><path d="M582 210.9h7.8v2.6h-7.8zM592 210.9h4v2.6h-4z" fill="#d0d0d0" opacity="0.55"/><rect x="580.0" y="216.0" width="52.0" height="6.5" fill="#3e3e3e" /><path d="M582 218.2h7.1v2.6h-7.1zM590.4 218.2h4.1v2.6h-4.1z" fill="#d0d0d0" opacity="0.55"/><rect x="580.0" y="223.2" width="52.0" height="6.5" fill="#3e3e3e" /><path d="M582 225.4h3v2.6h-3zM587.1 225.4h7.9v2.6h-7.9z" fill="#d0d0d0" opacity="0.55"/><rect x="580.0" y="230.5" width="52.0" height="6.5" fill="#3e3e3e" /><path d="M582 232.7h8.9v2.6h-8.9zM592.6 232.7h3.4v2.6h-3.4z" fill="#d0d0d0" opacity="0.55"/><rect x="580.0" y="237.8" width="52.0" height="6.5" fill="#3e3e3e" /><path d="M582 239.9h6.3v2.6h-6.3zM590.1 239.9h5.9v2.6h-5.9z" fill="#d0d0d0" opacity="0.55"/><rect x="580.0" y="245.0" width="52.0" height="6.5" fill="#3e3e3e" /><path d="M582 247.2h6.5v2.6h-6.5zM590.6 247.2h5.1v2.6h-5.1z" fill="#d0d0d0" opacity="0.55"/><rect x="580.0" y="252.2" width="52.0" height="6.5" fill="#3e3e3e" /><path d="M582 254.4h7.3v2.6h-7.3zM591.1 254.4h4.9v2.6h-4.9z" fill="#d0d0d0" opacity="0.55"/><rect x="580.0" y="259.5" width="52.0" height="6.5" fill="#3e3e3e" /><path d="M582 261.7h4.2v2.6h-4.2zM587.9 261.7h6.2v2.6h-6.2z" fill="#d0d0d0" opacity="0.55"/><rect x="580.0" y="266.8" width="52.0" height="6.5" fill="#3e3e3e" /><path d="M582 268.9h4.7v2.6h-4.7zM588.2 268.9h6.7v2.6h-6.7z" fill="#d0d0d0" opacity="0.55"/><rect x="580.0" y="274.0" width="52.0" height="6.5" fill="#3e3e3e" /><path d="M582 276.2h4.2v2.6h-4.2zM587.5 276.2h4.4v2.6h-4.4zM594 276.2h2v2.6h-2z" fill="#d0d0d0" opacity="0.55"/><rect x="580.0" y="281.2" width="52.0" height="6.5" fill="#3e3e3e" /><path d="M582 283.4h6.9v2.6h-6.9zM590.4 283.4h5.6v2.6h-5.6z" fill="#d0d0d0" opacity="0.55"/><rect x="580.0" y="288.5" width="52.0" height="6.5" fill="#3e3e3e" /><path d="M582 290.7h4.7v2.6h-4.7zM588.3 290.7h6.9v2.6h-6.9z" fill="#d0d0d0" opacity="0.55"/><rect x="580.0" y="295.8" width="52.0" height="6.5" fill="#3e3e3e" /><path d="M582 297.9h6.9v2.6h-6.9zM590.4 297.9h5.6v2.6h-5.6z" fill="#d0d0d0" opacity="0.55"/><rect x="580.0" y="303.0" width="52.0" height="6.5" fill="#3e3e3e" /><path d="M582 305.2h7.6v2.6h-7.6zM591.3 305.2h4.7v2.6h-4.7z" fill="#d0d0d0" opacity="0.55"/><rect x="580.0" y="310.2" width="52.0" height="6.5" fill="#3e3e3e" /><path d="M582 312.4h6.3v2.6h-6.3zM589.6 312.4h6.4v2.6h-6.4z" fill="#d0d0d0" opacity="0.55"/><rect x="580.0" y="317.5" width="52.0" height="6.5" fill="#3e3e3e" /><path d="M582 319.7h4v2.6h-4zM587.8 319.7h4.3v2.6h-4.3zM593.5 319.7h2.5v2.6h-2.5z" fill="#d0d0d0" opacity="0.55"/><rect x="580.0" y="324.8" width="52.0" height="6.5" fill="#3e3e3e" /><path d="M582 326.9h4.8v2.6h-4.8zM588.5 326.9h4.4v2.6h-4.4zM594.4 326.9h5.3v2.6h-5.3zM601.5 326.9h4.8v2.6h-4.8zM608 326.9h4.7v2.6h-4.7zM614.5 326.9h4.5v2.6h-4.5zM620.9 326.9h5.6v2.6h-5.6z" fill="#d0d0d0" opacity="0.55"/><rect x="580.0" y="332.0" width="52.0" height="6.5" fill="#3e3e3e" /><path d="M582 334.2h6.6v2.6h-6.6zM590.3 334.2h5.2v2.6h-5.2z" fill="#d0d0d0" opacity="0.55"/><rect x="580.0" y="339.2" width="52.0" height="6.5" fill="#3e3e3e" /><path d="M582 341.4h5.9v2.6h-5.9zM589.8 341.4h3.1v2.6h-3.1zM594.6 341.4h1.4v2.6h-1.4z" fill="#d0d0d0" opacity="0.55"/><rect x="580.0" y="346.5" width="52.0" height="6.5" fill="#3e3e3e" /><path d="M582 348.7h8v2.6h-8zM592.1 348.7h3.9v2.6h-3.9z" fill="#d0d0d0" opacity="0.55"/><rect x="581.0" y="350.0" width="52.0" height="5.0" fill="#5a6282" /></svg><div class="wheel" style="left:17.1px;top:36.2px;"></div><div class="sv" style="left:31.8px;top:51.0px;background:linear-gradient(to bottom,rgba(0,0,0,0),#000),linear-gradient(to right,#fff,#e00000);"></div><svg width="635" height="355" viewBox="0 0 635 355"><g><rect x="24.0" y="162.4" width="191.5" height="115.5" fill="#050505" /><defs><pattern id="brk" width="16" height="7" patternUnits="userSpaceOnUse"><rect width="16" height="7" fill="#b3a06a"/><rect x="0" y="0" width="9" height="3" fill="#8a7646" opacity="0.55"/><rect x="8" y="3.5" width="7" height="3" fill="#c9b680" opacity="0.6"/><rect x="0" y="3" width="16" height="0.5" fill="#6a5a36" opacity="0.5"/></pattern><radialGradient id="lamp"><stop offset="0" stop-color="#fff0a0"/><stop offset="0.35" stop-color="#e8c860" stop-opacity="0.8"/><stop offset="1" stop-color="#b3a06a" stop-opacity="0"/></radialGradient><linearGradient id="vshade" x1="0" y1="0" x2="0" y2="1"><stop offset="0" stop-color="#2a2010" stop-opacity="0.35"/><stop offset="0.25" stop-color="#2a2010" stop-opacity="0"/><stop offset="0.8" stop-color="#2a2010" stop-opacity="0"/><stop offset="1" stop-color="#2a2010" stop-opacity="0.45"/></linearGradient></defs><rect x="25.0" y="166.0" width="189.5" height="107.5" fill="url(#brk)" /><rect x="25.0" y="166.0" width="189.5" height="107.5" fill="url(#vshade)" /><rect x="196.0" y="166.0" width="18.5" height="107.5" fill="#4a3c22" opacity="0.45"/><circle cx="34.8" cy="201" r="11" fill="url(#lamp)"/><ellipse cx="34.8" cy="202" rx="3.2" ry="4.2" fill="#d8b040"/><circle cx="92.8" cy="201" r="11" fill="url(#lamp)"/><ellipse cx="92.8" cy="202" rx="3.2" ry="4.2" fill="#d8b040"/><circle cx="150.8" cy="201" r="11" fill="url(#lamp)"/><ellipse cx="150.8" cy="202" rx="3.2" ry="4.2" fill="#d8b040"/><rect x="25.0" y="266.0" width="189.5" height="7.5" fill="#5a4a2a" opacity="0.6"/><path d="M46,226 C46,222 52,222 53,226 L53,248 L51,271 L48,271 L46,248 Z" fill="#e8c8b0"/><path d="M45,224 C46,220 52,220 54,224 L53,228 L46,228 Z" fill="#c05040"/><path d="M46,232 h7 v7 h-7 z M46,244 h7 v5 h-7 z" fill="#1a1a1a"/><path d="M58,230 C58,224 66,224 67,230 L71,268 L57,268 Z" fill="#1c1c30"/><path d="M58,228 C59,223 66,223 67,228 L66,231 L59,231 Z" fill="#7a80c0"/><path d="M163,236 C162,230 170,230 171,236 L176,248 L182,272 L159,272 Z" fill="#f4f0e8"/><path d="M161,234 C162,228 171,228 172,234 L180,256 L176,258 L168,240 Z" fill="#e8c870"/><rect x="186.0" y="246.0" width="3.0" height="26.0" fill="#303040" opacity="0.7"/><text x="97" y="257.5" font-size="5" fill="#fff" opacity="0.9">aeo Hnoa bue</text><text x="95" y="263.5" font-size="5" fill="#fff" opacity="0.9">HoE aue oB uoe</text><rect x="192.6" y="171.9" width="17.4" height="3.3" fill="#d03030" /></g><circle cx="86" cy="291.0" r="2.5" fill="#e0b040"/><path d="M93,289.5 l3,3 l3,-3 z" fill="#3fd0c0"/><rect x="104.0" y="288.5" width="14.0" height="5.0" fill="#40c060" opacity="0.9"/><rect x="119.0" y="288.5" width="10.0" height="5.0" fill="#f0f0f0" opacity="0.9"/><circle cx="133" cy="291.0" r="2.2" fill="#f0c030"/><rect x="137.0" y="288.5" width="14.0" height="5.0" fill="#e0c040" opacity="0.9"/><rect x="152.0" y="288.5" width="9.0" height="5.0" fill="#f0f0f0" opacity="0.9"/><rect x="205.0" y="298.0" width="20.0" height="4.0" fill="#f0f0f0" opacity="0.5"/><rect x="588.0" y="30.0" width="38.0" height="50.0" fill="#efefef" /><path d="M592,36 L624,52" stroke="#c04040" stroke-width="0.6"/><rect x="527" y="46" width="103" height="20.7" rx="4.5" fill="#0e0d10" opacity="0.86"/><circle cx="533.5" cy="51.8" r="3.3" fill="#8a3cf0"/><path d="M532 51l1.5 2l1.5-2" stroke="#fff" stroke-width="1" fill="none"/><text x="539.5" y="54.7" font-size="7.4" fill="#8fa0ff" opacity="0.7">R</text><text x="551.6" y="54.9" font-size="7.6" font-weight="bold" fill="#eeeeee">OUAP AAP OA R</text><text x="530" y="63.5" font-size="7.6" font-weight="bold" fill="#eeeeee">HPG MNS SAEE NWB P</text><rect x="527" y="72" width="83" height="12.1" rx="4.5" fill="#0e0d10" opacity="0.86"/><rect x="530.5" y="75.3" width="5" height="5" rx="1.5" fill="#e07070"/><rect x="537" y="75.3" width="5" height="5" rx="1.5" fill="#30c090"/><rect x="543.5" y="75.3" width="5" height="5" rx="1.5" fill="#8a30d0"/><text x="550.5" y="80.7" font-size="7.4" fill="#c070d0" opacity="0.7">EGOG</text><text x="574.6" y="80.9" font-size="7.6" font-weight="bold" fill="#eeeeee">NKS B</text><rect x="527" y="88" width="71.5" height="12.1" rx="4.5" fill="#0e0d10" opacity="0.86"/><circle cx="533.5" cy="93.8" r="3.3" fill="#e05a8a"/><path d="M532 93l1.5 2l1.5-2" stroke="#fff" stroke-width="1" fill="none"/><circle cx="541" cy="93.8" r="2.3" fill="#e8c840"/><text x="545.5" y="96.7" font-size="7.4" fill="#7aa8ff" opacity="0.7">W</text><text x="560.8" y="96.9" font-size="7.6" font-weight="bold" fill="#eeeeee">DWC D</text><rect x="527" y="104.4" width="63" height="12.1" rx="4.5" fill="#0e0d10" opacity="0.86"/><rect x="530.5" y="107.7" width="5" height="5" rx="1.5" fill="#e07070"/><rect x="537" y="107.7" width="5" height="5" rx="1.5" fill="#30c090"/><rect x="543.5" y="107.7" width="5" height="5" rx="1.5" fill="#8a30d0"/><text x="550.5" y="113.1" font-size="7.4" fill="#8fa0ff" opacity="0.7">PG</text><text x="566.8" y="113.3" font-size="7.6" font-weight="bold" fill="#eeeeee">KU</text><rect x="527" y="120" width="80" height="12.1" rx="4.5" fill="#0e0d10" opacity="0.86"/><rect x="530.5" y="123.3" width="5" height="5" rx="1.5" fill="#e07070"/><rect x="537" y="123.3" width="5" height="5" rx="1.5" fill="#30c090"/><rect x="543.5" y="123.3" width="5" height="5" rx="1.5" fill="#8a30d0"/><text x="550.5" y="128.7" font-size="7.4" fill="#c070d0" opacity="0.7">H</text><text x="564.4" y="128.9" font-size="7.6" font-weight="bold" fill="#eeeeee">BEUA K</text><rect x="527" y="136.6" width="90" height="12.1" rx="4.5" fill="#0e0d10" opacity="0.86"/><circle cx="533.5" cy="142.4" r="3.3" fill="#e05a8a"/><path d="M532 141.6l1.5 2l1.5-2" stroke="#fff" stroke-width="1" fill="none"/><text x="539.5" y="145.3" font-size="7.4" fill="#7aa8ff" opacity="0.7">C</text><text x="554.1" y="145.5" font-size="7.6" font-weight="bold" fill="#eeeeee">RO EH BGD A</text><rect x="527" y="153" width="106" height="20.7" rx="4.5" fill="#0e0d10" opacity="0.86"/><rect x="530.5" y="156.3" width="5" height="5" rx="1.5" fill="#e07070"/><rect x="537" y="156.3" width="5" height="5" rx="1.5" fill="#30c090"/><rect x="543.5" y="156.3" width="5" height="5" rx="1.5" fill="#8a30d0"/><text x="550.5" y="161.7" font-size="7.4" fill="#8fa0ff" opacity="0.7">M</text><text x="566.3" y="161.9" font-size="7.6" font-weight="bold" fill="#eeeeee">ERA PCO HKS</text><text x="530" y="170.5" font-size="7.6" font-weight="bold" fill="#eeeeee">DCSA NWM BSNA ENC</text><rect x="527" y="177.4" width="76" height="12.1" rx="4.5" fill="#0e0d10" opacity="0.86"/><circle cx="533.5" cy="183.2" r="3.3" fill="#9b59d0"/><path d="M532 182.4l1.5 2l1.5-2" stroke="#fff" stroke-width="1" fill="none"/><circle cx="541" cy="183.2" r="2.3" fill="#e8c840"/><text x="545.5" y="186.1" font-size="7.4" fill="#c070d0" opacity="0.7">OC</text><text x="560.7" y="186.3" font-size="7.6" font-weight="bold" fill="#eeeeee">WS BBB</text></svg></div><div class="cell" style="left:640px;top:360px"><svg width="635" height="355" viewBox="0 0 635 355"><rect x="0.0" y="0.0" width="635.0" height="355.0" fill="#3a3a3a" /><rect x="0.0" y="0.0" width="635.0" height="7.5" fill="#3e3e3e" /><rect x="0.0" y="7.5" width="635.0" height="8.5" fill="#4a4a4a" /><rect x="0.0" y="16.0" width="635.0" height="8.0" fill="#3a3a3a" /><rect x="83.0" y="16.0" width="427.0" height="8.0" fill="#4f4f4f" /><use href="#menu"/><rect x="0.0" y="24.0" width="16.0" height="331.0" fill="#3b3b3b" /><use href="#tools"/><use href="#lpanel"/><rect x="83.0" y="24.0" width="425.0" height="327.0" fill="#2e2e2e" /><rect x="83.0" y="24.0" width="425.0" height="7.5" fill="#333333" /><rect x="83.5" y="25.0" width="32.0" height="6.0" fill="#66708c" /><path d="M86 26.8h6v2.2h-6zM93.9 26.8h3.6v2.2h-3.6zM99.3 26.8h3.1v2.2h-3.1zM104 26.8h2v2.2h-2z" fill="#d8d8e8" opacity="0.5"/><rect x="83.0" y="350.5" width="425.0" height="4.5" fill="#3a3a3a" /><path d="M86 351.5h4.4v2.2h-4.4zM92 351.5h6.1v2.2h-6.1zM99.3 351.5h8.7v2.2h-8.7zM109.9 351.5h7.2v2.2h-7.2zM119.3 351.5h3.5v2.2h-3.5zM124.7 351.5h8.1v2.2h-8.1zM134.7 351.5h6.4v2.2h-6.4zM143 351.5h3.7v2.2h-3.7zM148.3 351.5h7.3v2.2h-7.3zM157.7 351.5h6.9v2.2h-6.9zM166.4 351.5h5v2.2h-5zM173 351.5h4.4v2.2h-4.4zM179.6 351.5h6.4v2.2h-6.4z" fill="#999" opacity="0.35"/><polygon points="83,31.5 392.5,31.5 341,244 215.5,215 83,184.4" fill="#dadada"/><path d="M83,31.5 L150,31.5 C155,60 155,100 150,125 C130,130 100,128 83,120 Z" fill="#d8cabb" opacity="0.8"/><g fill="none" stroke="#555" stroke-width="0.7"><path d="M178.5,33 C220,45 250,55 280,59.4 L326,67 M150.8,64 C190,72 215,78 234,79.4 L289,82.5"/><path d="M280,58 C290,52 315,55 326,67 C330,78 328,88 318,92 C300,92 288,88 280,85"/><path d="M326,67 C340,62 356,75 357,90 C356,100 345,104 335,100"/><path d="M135,104 C170,100 210,96 234,96 L304.8,122.5 M181.6,110 C210,120 230,128 249,131.8 L308,144"/><path d="M228,95 C240,92 260,100 266,115 C260,130 250,135 240,132"/><path d="M304.8,116 C320,110 345,118 348,134 C346,148 330,152 315,148"/><path d="M114,122.5 L128,150 M120,122 L140,156 M126,121 L141.6,140"/><path d="M154,33 L178.5,65.6 M160,33 L172,64"/><path d="M340,40 C350,35 356,31.5 360,31.5"/></g><rect x="508.0" y="24.0" width="3.0" height="327.0" fill="#2e2e2e" /><rect x="511.0" y="24.0" width="66.0" height="331.0" fill="#383838" /><rect x="511.0" y="24.0" width="66.0" height="6.0" fill="#333" /><path d="M523 25.5h6.2v2.2h-6.2zM530.4 25.5h7.6v2.2h-7.6zM539.5 25.5h1.5v2.2h-1.5z" fill="#aaa" opacity="0.35"/><rect x="513.0" y="30.5" width="62.0" height="21.0" fill="#3c3c3c" /><rect x="541.0" y="32.0" width="14.0" height="3.0" fill="#dedede" opacity="0.8"/><path d="M515 38.5h7.4v3h-7.4zM524.6 38.5h7.1v3h-7.1zM533 38.5h7.2v3h-7.2zM541.7 38.5h4.1v3h-4.1zM547.4 38.5h6.5v3h-6.5zM555.2 38.5h6.2v3h-6.2z" fill="#999" opacity="0.45"/><path d="M515 45.5h9v3h-9zM526.1 45.5h4.9v3h-4.9zM532.3 45.5h4.2v3h-4.2zM538 45.5h8.9v3h-8.9zM548.6 45.5h3.1v3h-3.1zM553.3 45.5h5.7v3h-5.7zM560.2 45.5h2.8v3h-2.8z" fill="#999" opacity="0.45"/><rect x="512.0" y="64.9" width="64.0" height="1.0" fill="#2e2e2e" /><rect x="527.0" y="54.0" width="10.5" height="9.9" fill="#ececec" /><path d="M540 55h6v2.4h-6zM548 55h5.3v2.4h-5.3zM555 55h3.7v2.4h-3.7z" fill="#c8c8c8" opacity="0.5"/><path d="M540 60h4.6v2.4h-4.6zM546 60h7.8v2.4h-7.8zM555.8 60h3.2v2.4h-3.2z" fill="#c8c8c8" opacity="0.5"/><rect x="512.0" y="78.3" width="64.0" height="1.0" fill="#2e2e2e" /><rect x="527.0" y="67.4" width="10.5" height="9.9" fill="#ececec" /><path d="M540 68.4h6.3v2.4h-6.3zM548.5 68.4h5.5v2.4h-5.5zM555.7 68.4h3.3v2.4h-3.3z" fill="#c8c8c8" opacity="0.5"/><path d="M540 73.4h8.9v2.4h-8.9zM550.6 73.4h5.4v2.4h-5.4zM557.2 73.4h1.8v2.4h-1.8z" fill="#c8c8c8" opacity="0.5"/><rect x="512.0" y="91.7" width="64.0" height="1.0" fill="#2e2e2e" /><rect x="527.0" y="80.8" width="10.5" height="9.9" fill="#ececec" /><path d="M540 81.8h5.2v2.4h-5.2zM546.9 81.8h5.4v2.4h-5.4zM553.7 81.8h5.3v2.4h-5.3z" fill="#c8c8c8" opacity="0.5"/><path d="M540 86.8h8.4v2.4h-8.4zM550.6 86.8h3.7v2.4h-3.7zM555.5 86.8h3.5v2.4h-3.5z" fill="#c8c8c8" opacity="0.5"/><rect x="512.0" y="105.1" width="64.0" height="1.0" fill="#2e2e2e" /><rect x="527.0" y="94.2" width="10.5" height="9.9" fill="#ececec" /><path d="M540 95.2h8.6v2.4h-8.6zM550.7 95.2h5v2.4h-5zM557.5 95.2h1.5v2.4h-1.5z" fill="#c8c8c8" opacity="0.5"/><path d="M540 100.2h4.5v2.4h-4.5zM546.4 100.2h9v2.4h-9zM557.1 100.2h1.9v2.4h-1.9z" fill="#c8c8c8" opacity="0.5"/><rect x="525.0" y="106.1" width="38.0" height="12.4" fill="#4e5670" /><rect x="512.0" y="118.5" width="64.0" height="1.0" fill="#2e2e2e" /><rect x="527.0" y="107.6" width="10.5" height="9.9" fill="#ececec" /><path d="M540 108.6h7.7v2.4h-7.7zM549.2 108.6h4.1v2.4h-4.1zM554.8 108.6h4.2v2.4h-4.2z" fill="#c8c8c8" opacity="0.5"/><path d="M540 113.6h6v2.4h-6zM547.9 113.6h4.6v2.4h-4.6zM553.8 113.6h3.9v2.4h-3.9z" fill="#c8c8c8" opacity="0.5"/><rect x="512.0" y="131.9" width="64.0" height="1.0" fill="#2e2e2e" /><rect x="527.0" y="121.0" width="10.5" height="9.9" fill="#ececec" /><path d="M540 122h8.1v2.4h-8.1zM549.5 122h4.3v2.4h-4.3zM555 122h4v2.4h-4z" fill="#c8c8c8" opacity="0.5"/><path d="M540 127h8.3v2.4h-8.3zM549.9 127h6.2v2.4h-6.2zM557.5 127h1.5v2.4h-1.5z" fill="#c8c8c8" opacity="0.5"/><rect x="512.0" y="145.3" width="64.0" height="1.0" fill="#2e2e2e" /><rect x="527.0" y="134.4" width="10.5" height="9.9" fill="#ececec" /><path d="M540 135.4h6.7v2.4h-6.7zM548.1 135.4h6.6v2.4h-6.6zM556.1 135.4h2.9v2.4h-2.9z" fill="#c8c8c8" opacity="0.5"/><path d="M540 140.4h4.5v2.4h-4.5zM546 140.4h6.8v2.4h-6.8zM554.5 140.4h4.5v2.4h-4.5z" fill="#c8c8c8" opacity="0.5"/><rect x="512.0" y="158.7" width="64.0" height="1.0" fill="#2e2e2e" /><rect x="527.0" y="147.8" width="10.5" height="9.9" fill="#ececec" /><path d="M540 148.8h5.9v2.4h-5.9zM547.5 148.8h3.3v2.4h-3.3zM552.6 148.8h6.4v2.4h-6.4z" fill="#c8c8c8" opacity="0.5"/><path d="M540 153.8h7.5v2.4h-7.5zM548.8 153.8h6.6v2.4h-6.6zM556.9 153.8h2.1v2.4h-2.1z" fill="#c8c8c8" opacity="0.5"/><rect x="512.0" y="172.1" width="64.0" height="1.0" fill="#2e2e2e" /><rect x="527.0" y="161.2" width="10.5" height="9.9" fill="#ececec" /><path d="M540 162.2h7.3v2.4h-7.3zM549.2 162.2h5.2v2.4h-5.2zM556.3 162.2h2.7v2.4h-2.7z" fill="#c8c8c8" opacity="0.5"/><path d="M540 167.2h3.4v2.4h-3.4zM545.3 167.2h7.9v2.4h-7.9zM554.6 167.2h4.4v2.4h-4.4z" fill="#c8c8c8" opacity="0.5"/><rect x="563.0" y="52.0" width="2.5" height="299.0" fill="#444" /><rect x="568.0" y="24.0" width="67.0" height="331.0" fill="#383838" /><rect x="569.0" y="27.0" width="9.0" height="8.0" fill="#474747" /><rect x="569.0" y="38.5" width="9.0" height="8.0" fill="#474747" /><rect x="569.0" y="50.0" width="9.0" height="8.0" fill="#474747" /><rect x="569.0" y="61.5" width="9.0" height="8.0" fill="#474747" /><rect x="569.0" y="73.0" width="9.0" height="8.0" fill="#474747" /><rect x="569.0" y="84.5" width="9.0" height="8.0" fill="#474747" /><rect x="569.0" y="96.0" width="9.0" height="8.0" fill="#474747" /><rect x="569.0" y="107.5" width="9.0" height="8.0" fill="#474747" /><rect x="580.0" y="24.0" width="55.0" height="5.0" fill="#333" /><rect x="582.0" y="29.6" width="51.0" height="52.4" fill="#fff" /><rect x="580.0" y="83.0" width="55.0" height="15.0" fill="#3a3a3a" /><path d="M583 85h7.7v2.5h-7.7zM592.8 85h5.4v2.5h-5.4zM600.2 85h4.2v2.5h-4.2zM606.3 85h3.4v2.5h-3.4zM611 85h3.6v2.5h-3.6zM616.1 85h6.5v2.5h-6.5zM624.1 85h6.5v2.5h-6.5z" fill="#aaa" opacity="0.4"/><path d="M583 91h3.9v2.5h-3.9zM588.8 91h4.9v2.5h-4.9zM595.2 91h7.3v2.5h-7.3zM604 91h4.8v2.5h-4.8zM610.3 91h8.9v2.5h-8.9zM621.1 91h6.2v2.5h-6.2zM628.8 91h2.2v2.5h-2.2z" fill="#aaa" opacity="0.4"/><rect x="580.0" y="100.0" width="52.0" height="6.5" fill="#3e3e3e" /><path d="M582 102.2h3.9v2.6h-3.9zM587.5 102.2h6.5v2.6h-6.5z" fill="#d0d0d0" opacity="0.55"/><rect x="580.0" y="107.2" width="52.0" height="6.5" fill="#3e3e3e" /><path d="M582 109.5h8v2.6h-8zM591.3 109.5h3.6v2.6h-3.6z" fill="#d0d0d0" opacity="0.55"/><rect x="580.0" y="114.5" width="52.0" height="6.5" fill="#3e3e3e" /><path d="M582 116.7h5.8v2.6h-5.8zM589.1 116.7h6.6v2.6h-6.6z" fill="#d0d0d0" opacity="0.55"/><rect x="580.0" y="121.8" width="52.0" height="6.5" fill="#3e3e3e" /><path d="M582 124h7v2.6h-7zM591 124h3.3v2.6h-3.3z" fill="#d0d0d0" opacity="0.55"/><rect x="580.0" y="129.0" width="52.0" height="6.5" fill="#3e3e3e" /><path d="M582 131.2h3.7v2.6h-3.7zM587.6 131.2h5.4v2.6h-5.4zM594.3 131.2h1.7v2.6h-1.7z" fill="#d0d0d0" opacity="0.55"/><rect x="580.0" y="136.2" width="52.0" height="6.5" fill="#3e3e3e" /><path d="M582 138.4h6.6v2.6h-6.6zM590.2 138.4h5.8v2.6h-5.8z" fill="#d0d0d0" opacity="0.55"/><rect x="580.0" y="143.5" width="52.0" height="6.5" fill="#3e3e3e" /><path d="M582 145.7h8.1v2.6h-8.1zM591.4 145.7h4.6v2.6h-4.6z" fill="#d0d0d0" opacity="0.55"/><rect x="580.0" y="150.8" width="52.0" height="6.5" fill="#3e3e3e" /><path d="M582 152.9h6.4v2.6h-6.4zM590 152.9h6v2.6h-6z" fill="#d0d0d0" opacity="0.55"/><rect x="580.0" y="158.0" width="52.0" height="6.5" fill="#3e3e3e" /><path d="M582 160.2h5v2.6h-5zM588.8 160.2h7v2.6h-7z" fill="#d0d0d0" opacity="0.55"/><rect x="580.0" y="165.2" width="52.0" height="6.5" fill="#3e3e3e" /><path d="M582 167.4h5.7v2.6h-5.7zM589.4 167.4h5.6v2.6h-5.6z" fill="#d0d0d0" opacity="0.55"/><rect x="580.0" y="172.5" width="52.0" height="6.5" fill="#3e3e3e" /><path d="M582 174.7h9v2.6h-9zM592.5 174.7h3.5v2.6h-3.5z" fill="#d0d0d0" opacity="0.55"/><rect x="580.0" y="179.8" width="52.0" height="6.5" fill="#3e3e3e" /><path d="M582 181.9h8.7v2.6h-8.7zM592.6 181.9h3.4v2.6h-3.4z" fill="#d0d0d0" opacity="0.55"/><rect x="580.0" y="187.0" width="52.0" height="6.5" fill="#3e3e3e" /><path d="M582 189.2h6.8v2.6h-6.8zM590.1 189.2h5.9v2.6h-5.9z" fill="#d0d0d0" opacity="0.55"/><rect x="580.0" y="194.2" width="52.0" height="6.5" fill="#3e3e3e" /><path d="M582 196.4h4.7v2.6h-4.7zM588 196.4h5.2v2.6h-5.2zM594.9 196.4h1.1v2.6h-1.1z" fill="#d0d0d0" opacity="0.55"/><rect x="580.0" y="201.5" width="52.0" height="6.5" fill="#3e3e3e" /><path d="M582 203.7h5.7v2.6h-5.7zM589.1 203.7h6.9v2.6h-6.9z" fill="#d0d0d0" opacity="0.55"/><rect x="580.0" y="208.8" width="52.0" height="6.5" fill="#3e3e3e" /><path d="M582 210.9h7.8v2.6h-7.8zM592 210.9h4v2.6h-4z" fill="#d0d0d0" opacity="0.55"/><rect x="580.0" y="216.0" width="52.0" height="6.5" fill="#3e3e3e" /><path d="M582 218.2h7.1v2.6h-7.1zM590.4 218.2h4.1v2.6h-4.1z" fill="#d0d0d0" opacity="0.55"/><rect x="580.0" y="223.2" width="52.0" height="6.5" fill="#3e3e3e" /><path d="M582 225.4h3v2.6h-3zM587.1 225.4h7.9v2.6h-7.9z" fill="#d0d0d0" opacity="0.55"/><rect x="580.0" y="230.5" width="52.0" height="6.5" fill="#3e3e3e" /><path d="M582 232.7h8.9v2.6h-8.9zM592.6 232.7h3.4v2.6h-3.4z" fill="#d0d0d0" opacity="0.55"/><rect x="580.0" y="237.8" width="52.0" height="6.5" fill="#3e3e3e" /><path d="M582 239.9h6.3v2.6h-6.3zM590.1 239.9h5.9v2.6h-5.9z" fill="#d0d0d0" opacity="0.55"/><rect x="580.0" y="245.0" width="52.0" height="6.5" fill="#3e3e3e" /><path d="M582 247.2h6.5v2.6h-6.5zM590.6 247.2h5.1v2.6h-5.1z" fill="#d0d0d0" opacity="0.55"/><rect x="580.0" y="252.2" width="52.0" height="6.5" fill="#3e3e3e" /><path d="M582 254.4h7.3v2.6h-7.3zM591.1 254.4h4.9v2.6h-4.9z" fill="#d0d0d0" opacity="0.55"/><rect x="580.0" y="259.5" width="52.0" height="6.5" fill="#3e3e3e" /><path d="M582 261.7h4.2v2.6h-4.2zM587.9 261.7h6.2v2.6h-6.2z" fill="#d0d0d0" opacity="0.55"/><rect x="580.0" y="266.8" width="52.0" height="6.5" fill="#3e3e3e" /><path d="M582 268.9h4.7v2.6h-4.7zM588.2 268.9h6.7v2.6h-6.7z" fill="#d0d0d0" opacity="0.55"/><rect x="580.0" y="274.0" width="52.0" height="6.5" fill="#3e3e3e" /><path d="M582 276.2h4.2v2.6h-4.2zM587.5 276.2h4.4v2.6h-4.4zM594 276.2h2v2.6h-2z" fill="#d0d0d0" opacity="0.55"/><rect x="580.0" y="281.2" width="52.0" height="6.5" fill="#3e3e3e" /><path d="M582 283.4h6.9v2.6h-6.9zM590.4 283.4h5.6v2.6h-5.6z" fill="#d0d0d0" opacity="0.55"/><rect x="580.0" y="288.5" width="52.0" height="6.5" fill="#3e3e3e" /><path d="M582 290.7h4.7v2.6h-4.7zM588.3 290.7h6.9v2.6h-6.9z" fill="#d0d0d0" opacity="0.55"/><rect x="580.0" y="295.8" width="52.0" height="6.5" fill="#3e3e3e" /><path d="M582 297.9h6.9v2.6h-6.9zM590.4 297.9h5.6v2.6h-5.6z" fill="#d0d0d0" opacity="0.55"/><rect x="580.0" y="303.0" width="52.0" height="6.5" fill="#3e3e3e" /><path d="M582 305.2h7.6v2.6h-7.6zM591.3 305.2h4.7v2.6h-4.7z" fill="#d0d0d0" opacity="0.55"/><rect x="580.0" y="310.2" width="52.0" height="6.5" fill="#3e3e3e" /><path d="M582 312.4h6.3v2.6h-6.3zM589.6 312.4h6.4v2.6h-6.4z" fill="#d0d0d0" opacity="0.55"/><rect x="580.0" y="317.5" width="52.0" height="6.5" fill="#3e3e3e" /><path d="M582 319.7h4v2.6h-4zM587.8 319.7h4.3v2.6h-4.3zM593.5 319.7h2.5v2.6h-2.5z" fill="#d0d0d0" opacity="0.55"/><rect x="580.0" y="324.8" width="52.0" height="6.5" fill="#3e3e3e" /><path d="M582 326.9h3.7v2.6h-3.7zM587.9 326.9h5.3v2.6h-5.3z" fill="#d0d0d0" opacity="0.55"/><rect x="580.0" y="332.0" width="52.0" height="6.5" fill="#3e3e3e" /><path d="M582 334.2h6.6v2.6h-6.6zM590.3 334.2h5.2v2.6h-5.2z" fill="#d0d0d0" opacity="0.55"/><rect x="580.0" y="339.2" width="52.0" height="6.5" fill="#3e3e3e" /><path d="M582 341.4h5.9v2.6h-5.9zM589.8 341.4h3.1v2.6h-3.1zM594.6 341.4h1.4v2.6h-1.4z" fill="#d0d0d0" opacity="0.55"/><rect x="580.0" y="346.5" width="52.0" height="6.5" fill="#3e3e3e" /><path d="M582 348.7h8v2.6h-8zM592.1 348.7h3.9v2.6h-3.9z" fill="#d0d0d0" opacity="0.55"/><rect x="581.0" y="350.0" width="52.0" height="5.0" fill="#5a6282" /></svg><div class="wheel" style="left:17.1px;top:36.2px;"></div><div class="sv" style="left:31.8px;top:51.0px;background:linear-gradient(to bottom,rgba(0,0,0,0),#000),linear-gradient(to right,#fff,#e00000);"></div><svg width="635" height="355" viewBox="0 0 635 355"><g><rect x="24.0" y="162.4" width="191.5" height="115.5" fill="#050505" /><defs><linearGradient id="redbg" x1="0" y1="0" x2="1" y2="0"><stop offset="0" stop-color="#701219"/><stop offset="0.45" stop-color="#74121a"/><stop offset="0.75" stop-color="#4a0a10"/><stop offset="1" stop-color="#1c0507"/></linearGradient><linearGradient id="vsh" x1="0" y1="0" x2="0" y2="1"><stop offset="0" stop-color="#000" stop-opacity="0.2"/><stop offset="0.3" stop-color="#000" stop-opacity="0"/><stop offset="1" stop-color="#000" stop-opacity="0.15"/></linearGradient></defs><rect x="25.0" y="166.5" width="189.5" height="106.5" fill="url(#redbg)" /><rect x="25.0" y="166.5" width="189.5" height="106.5" fill="url(#vsh)" /><path d="M66,176.5 C52,178 44,192 44,212 C43,225 42,235 43,241 C48,246 56,246 62,240 L70,236 C74,220 80,205 96.7,193.4 C96,184 84,176 66,176.5 Z" fill="#141418"/><path d="M70,196 C78,192 92,193 98,200 C100,206 100,214 102,218 C101,222 98,224 98,228 C96,234 90,238 82,238 C74,238 66,232 64,222 C62,210 64,200 70,196 Z" fill="#dcb4a4"/><path d="M62,184 C70,177 88,178 97,188 L98,202 C90,198 80,197 72,200 L64,210 C60,200 60,190 62,184 Z" fill="#121216"/><path d="M56,200 C56,215 58,232 62,242 L66,238 C64,226 63,212 64,200 Z" fill="#18181c"/><path d="M25,273 C26,262 34,250 50,246 L60,240 C70,236 90,236 104,244 C116,248 126,256 131,273 Z" fill="#e6dcd8"/><path d="M46,273 L52,250 L62,258 C72,266 92,266 104,256 L114,250 L118,273 Z" fill="#a81a24"/><path d="M64,243 C70,250 90,252 100,244 L104,252 C92,262 72,262 62,252 Z" fill="#efe8e4"/><path d="M100,226 C106,220 118,220 124,230 C128,240 124,250 116,252 C108,250 102,242 100,236 Z" fill="#e0b8a8"/><path d="M93,219 L136.7,265.5" stroke="#14344a" stroke-width="5" stroke-linecap="round"/><ellipse cx="94.5" cy="220.5" rx="5" ry="4.5" fill="#0e1c2c"/><path d="M104,232 C110,230 116,232 118,236" stroke="#c89888" stroke-width="1" fill="none"/></g><circle cx="86" cy="291.0" r="2.5" fill="#e0b040"/><path d="M93,289.5 l3,3 l3,-3 z" fill="#3fd0c0"/><rect x="104.0" y="288.5" width="14.0" height="5.0" fill="#40c060" opacity="0.9"/><rect x="119.0" y="288.5" width="10.0" height="5.0" fill="#f0f0f0" opacity="0.9"/><circle cx="133" cy="291.0" r="2.2" fill="#f0c030"/><rect x="137.0" y="288.5" width="14.0" height="5.0" fill="#e0c040" opacity="0.9"/><rect x="152.0" y="288.5" width="9.0" height="5.0" fill="#f0f0f0" opacity="0.9"/><rect x="190.0" y="300.0" width="50.0" height="4.5" fill="#f0f0f0" opacity="0.75"/><rect x="588.0" y="30.0" width="38.0" height="50.0" fill="#d8d8d8" /><path d="M598,60 L604,80" stroke="#c04040" stroke-width="0.6"/><rect x="527" y="39" width="103" height="20.7" rx="4.5" fill="#0e0d10" opacity="0.86"/><rect x="530.5" y="42.3" width="5" height="5" rx="1.5" fill="#e07070"/><rect x="537" y="42.3" width="5" height="5" rx="1.5" fill="#30c090"/><rect x="543.5" y="42.3" width="5" height="5" rx="1.5" fill="#8a30d0"/><text x="550.5" y="47.7" font-size="7.4" fill="#8fa0ff" opacity="0.7">RH</text><text x="569.5" y="47.9" font-size="7.6" font-weight="bold" fill="#eeeeee">GU HWSB MP</text><text x="530" y="56.5" font-size="7.6" font-weight="bold" fill="#eeeeee">UMD MOMW</text><rect x="527" y="64" width="81" height="12.1" rx="4.5" fill="#0e0d10" opacity="0.86"/><circle cx="533.5" cy="69.8" r="3.3" fill="#9b59d0"/><path d="M532 69l1.5 2l1.5-2" stroke="#fff" stroke-width="1" fill="none"/><circle cx="541" cy="69.8" r="2.3" fill="#e8c840"/><text x="545.5" y="72.7" font-size="7.4" fill="#c070d0" opacity="0.7">CN</text><text x="564.4" y="72.9" font-size="7.6" font-weight="bold" fill="#eeeeee">NHE KEN</text><rect x="527" y="79.6" width="56.5" height="12.1" rx="4.5" fill="#0e0d10" opacity="0.86"/><circle cx="533.5" cy="85.4" r="3.3" fill="#e05a8a"/><path d="M532 84.6l1.5 2l1.5-2" stroke="#fff" stroke-width="1" fill="none"/><circle cx="541" cy="85.4" r="2.3" fill="#e8c840"/><text x="545.5" y="88.3" font-size="7.4" fill="#7aa8ff" opacity="0.7">H</text><text x="558.5" y="88.5" font-size="7.6" font-weight="bold" fill="#eeeeee">KA</text><rect x="527" y="95.5" width="65" height="12.1" rx="4.5" fill="#0e0d10" opacity="0.86"/><circle cx="533.5" cy="101.3" r="3.3" fill="#8a3cf0"/><path d="M532 100.5l1.5 2l1.5-2" stroke="#fff" stroke-width="1" fill="none"/><circle cx="541" cy="101.3" r="2.3" fill="#e8c840"/><text x="545.5" y="104.2" font-size="7.4" fill="#8fa0ff" opacity="0.7">CWA</text><text x="572.2" y="104.4" font-size="7.6" font-weight="bold" fill="#eeeeee">E</text><rect x="527" y="112" width="106" height="20.7" rx="4.5" fill="#0e0d10" opacity="0.86"/><circle cx="533.5" cy="117.8" r="3.3" fill="#9b59d0"/><path d="M532 117l1.5 2l1.5-2" stroke="#fff" stroke-width="1" fill="none"/><circle cx="541" cy="117.8" r="2.3" fill="#e8c840"/><text x="545.5" y="120.7" font-size="7.4" fill="#c070d0" opacity="0.7">AUG</text><text x="572.5" y="120.9" font-size="7.6" font-weight="bold" fill="#eeeeee">MPUO MG RN</text><text x="530" y="129.5" font-size="7.6" font-weight="bold" fill="#eeeeee">BBH RPU KU</text><rect x="527" y="136.6" width="106" height="20.7" rx="4.5" fill="#0e0d10" opacity="0.86"/><circle cx="533.5" cy="142.4" r="3.3" fill="#e05a8a"/><path d="M532 141.6l1.5 2l1.5-2" stroke="#fff" stroke-width="1" fill="none"/><text x="539.5" y="145.3" font-size="7.4" fill="#7aa8ff" opacity="0.7">M</text><text x="552.1" y="145.5" font-size="7.6" font-weight="bold" fill="#eeeeee">GNEC DHS UGB K</text><text x="530" y="154.1" font-size="7.6" font-weight="bold" fill="#eeeeee">EREW SEC AMUN</text><rect x="527" y="160.8" width="58" height="12.1" rx="4.5" fill="#0e0d10" opacity="0.86"/><rect x="530.5" y="164.1" width="5" height="5" rx="1.5" fill="#e07070"/><rect x="537" y="164.1" width="5" height="5" rx="1.5" fill="#30c090"/><rect x="543.5" y="164.1" width="5" height="5" rx="1.5" fill="#8a30d0"/><text x="550.5" y="169.5" font-size="7.4" fill="#8fa0ff" opacity="0.7">RB</text><text x="569.2" y="169.7" font-size="7.6" font-weight="bold" fill="#eeeeee">A</text><rect x="527" y="177.4" width="83" height="12.1" rx="4.5" fill="#0e0d10" opacity="0.86"/><circle cx="533.5" cy="183.2" r="3.3" fill="#9b59d0"/><path d="M532 182.4l1.5 2l1.5-2" stroke="#fff" stroke-width="1" fill="none"/><text x="539.5" y="186.1" font-size="7.4" fill="#c070d0" opacity="0.7">ONKS</text><text x="563.7" y="186.3" font-size="7.6" font-weight="bold" fill="#eeeeee">DAH GKS</text></svg></div><div class="cell" style="left:1280px;top:360px"><svg width="635" height="355" viewBox="0 0 635 355"><rect x="0.0" y="0.0" width="635.0" height="355.0" fill="#3a3a3a" /><rect x="0.0" y="0.0" width="635.0" height="7.5" fill="#3e3e3e" /><rect x="0.0" y="7.5" width="635.0" height="8.5" fill="#4a4a4a" /><rect x="0.0" y="16.0" width="635.0" height="8.0" fill="#3a3a3a" /><rect x="83.0" y="16.0" width="408.0" height="8.0" fill="#4f4f4f" /><use href="#menu"/><rect x="0.0" y="24.0" width="16.0" height="331.0" fill="#3b3b3b" /><use href="#tools"/><use href="#lpanel"/><rect x="83.0" y="24.0" width="408.0" height="327.0" fill="#2e2e2e" /><rect x="83.0" y="24.0" width="408.0" height="7.5" fill="#333333" /><rect x="83.0" y="350.5" width="408.0" height="4.5" fill="#3a3a3a" /><path d="M86 351.5h4.4v2.2h-4.4zM92 351.5h6.1v2.2h-6.1zM99.3 351.5h8.7v2.2h-8.7zM109.9 351.5h7.2v2.2h-7.2zM119.3 351.5h3.5v2.2h-3.5zM124.7 351.5h8.1v2.2h-8.1zM134.7 351.5h6.4v2.2h-6.4zM143 351.5h3.7v2.2h-3.7zM148.3 351.5h7.3v2.2h-7.3zM157.7 351.5h6.9v2.2h-6.9zM166.4 351.5h5v2.2h-5zM173 351.5h4.4v2.2h-4.4zM179.6 351.5h6.4v2.2h-6.4z" fill="#999" opacity="0.35"/><rect x="83.0" y="24.0" width="408.0" height="7.5" fill="#333" /><rect x="83.0" y="31.5" width="56.4" height="319.0" fill="url(#chk)" /><rect x="139.4" y="31.5" width="5.9" height="319.0" fill="#3a3a3a" /><rect x="140.9" y="40.0" width="2.0" height="300.0" fill="#4a4a4a" /><rect x="145.3" y="31.5" width="343.6" height="319.0" fill="#ffffff" /><rect x="488.9" y="24.0" width="2.0" height="327.0" fill="#333" /><rect x="84.0" y="25.0" width="42.0" height="6.0" fill="#3a3a3a" /><rect x="146.0" y="25.0" width="28.0" height="6.0" fill="#3a3a3a" /><rect x="179.0" y="25.0" width="30.0" height="6.0" fill="#5a6282" /><rect x="212.0" y="25.0" width="30.0" height="6.0" fill="#3a3a3a" /><path d="M139.4,51.8 C122,53 97,68 83,93 L83,163 C100,176 120,184 139.4,186 Z" fill="#fbe8df"/><path d="M87,111 C98,104 110,100 120,100" stroke="#8a7060" stroke-width="0.8" fill="none"/><path d="M94,131 C100,126 116,126 126,131 L124,145 C114,147 100,146 94,140 Z" fill="#fff"/><ellipse cx="112" cy="137.5" rx="10.5" ry="9" fill="#48b8d0"/><ellipse cx="112" cy="134" rx="7" ry="4" fill="#2a6a90" opacity="0.7"/><circle cx="117" cy="133" r="1.6" fill="#fff"/><path d="M83,137 C90,131 104,126 126,128.7" stroke="#1e1a1e" stroke-width="3" fill="none"/><path d="M83,137 l10,4" stroke="#1e1a1e" stroke-width="1.5"/><path d="M83,147 C88,147 93,152 92,158 C90,162 85,163 83,162 Z" fill="#f0b8b0"/><polygon points="145.3,210 145.3,351 303,351" fill="#2e2e2e"/><polygon points="488.9,202.6 488.9,351 355.6,351" fill="#2e2e2e"/><polygon points="469.5,31.5 488.9,31.5 488.9,47" fill="#2e2e2e"/><path d="M323,97.8 C340,99 352,104 358,106 C372,110 380,115 390,125 C404,140 410,155 409.5,170 C409,195 385,221.5 351.5,221.5 C325,221.5 305,205 298,186 C292,172 281,160 281,146 C281,130 285,118 292,111 C300,103 310,97.5 323,97.8 Z" fill="#fde9e2" stroke="#8a6060" stroke-width="0.6"/><rect x="491.0" y="24.0" width="86.0" height="331.0" fill="#383838" /><rect x="491.0" y="24.0" width="86.0" height="6.0" fill="#333" /><rect x="493.0" y="30.5" width="82.0" height="21.0" fill="#3c3c3c" /><rect x="530.0" y="32.0" width="14.0" height="3.0" fill="#dedede" opacity="0.8"/><path d="M495 38.5h3.6v3h-3.6zM500.3 38.5h5.3v3h-5.3zM506.8 38.5h3.2v3h-3.2zM512 38.5h6.6v3h-6.6zM520.1 38.5h3.3v3h-3.3zM525.3 38.5h8.2v3h-8.2zM535.1 38.5h3.9v3h-3.9zM540.7 38.5h4.9v3h-4.9zM547.6 38.5h6.3v3h-6.3z" fill="#999" opacity="0.45"/><path d="M495 45.5h8.8v3h-8.8zM505.1 45.5h7.1v3h-7.1zM514.2 45.5h3.5v3h-3.5zM519.4 45.5h3.5v3h-3.5zM524.6 45.5h4.2v3h-4.2zM530.2 45.5h8.6v3h-8.6zM540.9 45.5h3.2v3h-3.2zM545.7 45.5h5.5v3h-5.5zM553.2 45.5h1.8v3h-1.8z" fill="#999" opacity="0.45"/><rect x="496.0" y="56.5" width="3.0" height="2.0" fill="#888" opacity="0.6"/><rect x="518.0" y="54.0" width="5.0" height="10.0" fill="#e4e4e4" /><path d="M526 55h5.4v2.4h-5.4zM532.7 55h3.5v2.4h-3.5zM537.6 55h6.4v2.4h-6.4z" fill="#c8c8c8" opacity="0.45"/><path d="M526 60h4.4v2.4h-4.4zM532.6 60h7.3v2.4h-7.3z" fill="#c8c8c8" opacity="0.45"/><rect x="496.0" y="69.9" width="3.0" height="2.0" fill="#888" opacity="0.6"/><rect x="518.0" y="67.4" width="5.0" height="10.0" fill="#e4e4e4" /><path d="M526 68.4h5.7v2.4h-5.7zM533.4 68.4h4.9v2.4h-4.9zM540.2 68.4h3.8v2.4h-3.8z" fill="#c8c8c8" opacity="0.45"/><path d="M526 73.4h6.3v2.4h-6.3zM534.5 73.4h5.5v2.4h-5.5z" fill="#c8c8c8" opacity="0.45"/><rect x="496.0" y="83.3" width="3.0" height="2.0" fill="#888" opacity="0.6"/><rect x="518.0" y="80.8" width="5.0" height="10.0" fill="#e4e4e4" /><path d="M526 81.8h6.9v2.4h-6.9zM534.4 81.8h8.2v2.4h-8.2z" fill="#c8c8c8" opacity="0.45"/><path d="M526 86.8h7.8v2.4h-7.8zM535.7 86.8h4.3v2.4h-4.3z" fill="#c8c8c8" opacity="0.45"/><rect x="496.0" y="96.7" width="3.0" height="2.0" fill="#888" opacity="0.6"/><rect x="510.0" y="94.2" width="5.0" height="10.0" fill="#e4e4e4" /><path d="M518 95.2h7.3v2.4h-7.3zM526.7 95.2h5.8v2.4h-5.8zM533.8 95.2h2.2v2.4h-2.2z" fill="#c8c8c8" opacity="0.45"/><path d="M518 100.2h6.1v2.4h-6.1zM525.6 100.2h6.4v2.4h-6.4z" fill="#c8c8c8" opacity="0.45"/><rect x="496.0" y="110.1" width="3.0" height="2.0" fill="#888" opacity="0.6"/><rect x="510.0" y="107.6" width="5.0" height="10.0" fill="#e4e4e4" /><path d="M518 108.6h6.5v2.4h-6.5zM525.8 108.6h4.4v2.4h-4.4zM532.2 108.6h3.8v2.4h-3.8z" fill="#c8c8c8" opacity="0.45"/><path d="M518 113.6h8.7v2.4h-8.7zM528.9 113.6h3.1v2.4h-3.1z" fill="#c8c8c8" opacity="0.45"/><rect x="496.0" y="123.5" width="3.0" height="2.0" fill="#888" opacity="0.6"/><rect x="518.0" y="121.0" width="5.0" height="10.0" fill="#e4e4e4" /><path d="M526 122h6.7v2.4h-6.7zM534.7 122h7.4v2.4h-7.4z" fill="#c8c8c8" opacity="0.45"/><path d="M526 127h5.9v2.4h-5.9zM533.1 127h5.5v2.4h-5.5z" fill="#c8c8c8" opacity="0.45"/><rect x="496.0" y="136.9" width="3.0" height="2.0" fill="#888" opacity="0.6"/><rect x="510.0" y="134.4" width="5.0" height="10.0" fill="#e4e4e4" /><path d="M518 135.4h4.5v2.4h-4.5zM524 135.4h7.1v2.4h-7.1zM533 135.4h3v2.4h-3z" fill="#c8c8c8" opacity="0.45"/><path d="M518 140.4h4.1v2.4h-4.1zM524.2 140.4h7.6v2.4h-7.6z" fill="#c8c8c8" opacity="0.45"/><rect x="496.0" y="150.3" width="3.0" height="2.0" fill="#888" opacity="0.6"/><rect x="506.0" y="147.8" width="5.0" height="10.0" fill="#e4e4e4" /><path d="M514 148.8h7.8v2.4h-7.8zM523.9 148.8h3.4v2.4h-3.4zM528.8 148.8h3.2v2.4h-3.2z" fill="#c8c8c8" opacity="0.45"/><path d="M514 153.8h4.9v2.4h-4.9zM520.9 153.8h7.1v2.4h-7.1z" fill="#c8c8c8" opacity="0.45"/><rect x="496.0" y="163.7" width="3.0" height="2.0" fill="#888" opacity="0.6"/><rect x="518.0" y="161.2" width="5.0" height="10.0" fill="#e4e4e4" /><path d="M526 162.2h5.2v2.4h-5.2zM532.5 162.2h6.4v2.4h-6.4zM540.8 162.2h3.2v2.4h-3.2z" fill="#c8c8c8" opacity="0.45"/><path d="M526 167.2h8.6v2.4h-8.6zM536.4 167.2h3.6v2.4h-3.6z" fill="#c8c8c8" opacity="0.45"/><rect x="505.0" y="173.1" width="50.0" height="12.4" fill="#4e5670" /><rect x="496.0" y="177.1" width="3.0" height="2.0" fill="#888" opacity="0.6"/><rect x="514.0" y="174.6" width="5.0" height="10.0" fill="#e4e4e4" /><path d="M522 175.6h6.9v2.4h-6.9zM530.7 175.6h4.3v2.4h-4.3zM536.9 175.6h3.1v2.4h-3.1z" fill="#c8c8c8" opacity="0.45"/><path d="M522 180.6h3.5v2.4h-3.5zM527.3 180.6h5.4v2.4h-5.4zM534.1 180.6h1.9v2.4h-1.9z" fill="#c8c8c8" opacity="0.45"/><rect x="496.0" y="190.5" width="3.0" height="2.0" fill="#888" opacity="0.6"/><rect x="510.0" y="188.0" width="5.0" height="10.0" fill="#e4e4e4" /><path d="M518 189h7.9v2.4h-7.9zM527.9 189h5.9v2.4h-5.9z" fill="#c8c8c8" opacity="0.45"/><path d="M518 194h4v2.4h-4zM524.1 194h5v2.4h-5zM530.9 194h1.1v2.4h-1.1z" fill="#c8c8c8" opacity="0.45"/><rect x="568.0" y="24.0" width="67.0" height="331.0" fill="#383838" /><rect x="569.0" y="27.0" width="9.0" height="8.0" fill="#474747" /><rect x="569.0" y="38.5" width="9.0" height="8.0" fill="#474747" /><rect x="569.0" y="50.0" width="9.0" height="8.0" fill="#474747" /><rect x="569.0" y="61.5" width="9.0" height="8.0" fill="#474747" /><rect x="569.0" y="73.0" width="9.0" height="8.0" fill="#474747" /><rect x="569.0" y="84.5" width="9.0" height="8.0" fill="#474747" /><rect x="569.0" y="96.0" width="9.0" height="8.0" fill="#474747" /><rect x="569.0" y="107.5" width="9.0" height="8.0" fill="#474747" /><rect x="580.0" y="24.0" width="55.0" height="5.0" fill="#333" /><rect x="582.0" y="30.0" width="51.0" height="50.0" fill="#fff" /><rect x="580.0" y="81.0" width="55.0" height="15.0" fill="#3a3a3a" /><path d="M583 83h3.6v2.5h-3.6zM588 83h5.9v2.5h-5.9zM595.2 83h3.9v2.5h-3.9zM600.9 83h5v2.5h-5zM607.8 83h6.5v2.5h-6.5zM615.7 83h6.7v2.5h-6.7zM624 83h7v2.5h-7z" fill="#aaa" opacity="0.4"/><path d="M583 89h6.7v2.5h-6.7zM591.7 89h7.4v2.5h-7.4zM600.4 89h3.4v2.5h-3.4zM606 89h6.7v2.5h-6.7zM614.6 89h5v2.5h-5zM621.2 89h8v2.5h-8z" fill="#aaa" opacity="0.4"/><rect x="580.0" y="100.0" width="52.0" height="6.5" fill="#3e3e3e" /><path d="M582 102.2h5.8v2.6h-5.8zM589.4 102.2h6.4v2.6h-6.4zM597.6 102.2h7.2v2.6h-7.2zM606.9 102.2h4.4v2.6h-4.4zM613.3 102.2h8.7v2.6h-8.7zM623.7 102.2h4.3v2.6h-4.3z" fill="#d0d0d0" opacity="0.55"/><rect x="580.0" y="107.2" width="52.0" height="6.5" fill="#3e3e3e" /><path d="M582 109.5h8v2.6h-8zM591.3 109.5h3.6v2.6h-3.6z" fill="#d0d0d0" opacity="0.55"/><rect x="580.0" y="114.5" width="52.0" height="6.5" fill="#3e3e3e" /><path d="M582 116.7h3.2v2.6h-3.2zM586.6 116.7h6.2v2.6h-6.2zM594.5 116.7h5.9v2.6h-5.9zM602.5 116.7h5.1v2.6h-5.1zM609.4 116.7h4.9v2.6h-4.9zM616.3 116.7h7.1v2.6h-7.1zM625.6 116.7h2.4v2.6h-2.4z" fill="#d0d0d0" opacity="0.55"/><rect x="580.0" y="121.8" width="52.0" height="6.5" fill="#3e3e3e" /><path d="M582 124h5.9v2.6h-5.9zM589.4 124h8.2v2.6h-8.2zM599.4 124h5.6v2.6h-5.6zM606.8 124h5.3v2.6h-5.3zM613.6 124h7.2v2.6h-7.2zM622.6 124h5.4v2.6h-5.4z" fill="#d0d0d0" opacity="0.55"/><rect x="580.0" y="129.0" width="52.0" height="6.5" fill="#3e3e3e" /><path d="M582 131.2h3.7v2.6h-3.7zM587.6 131.2h5.4v2.6h-5.4zM594.3 131.2h1.7v2.6h-1.7z" fill="#d0d0d0" opacity="0.55"/><rect x="580.0" y="136.2" width="52.0" height="6.5" fill="#3e3e3e" /><path d="M582 138.4h6.6v2.6h-6.6zM590.2 138.4h5.8v2.6h-5.8z" fill="#d0d0d0" opacity="0.55"/><rect x="580.0" y="143.5" width="52.0" height="6.5" fill="#3e3e3e" /><path d="M582 145.7h3.9v2.6h-3.9zM587.3 145.7h8v2.6h-8zM597.4 145.7h6.7v2.6h-6.7zM606.1 145.7h5.8v2.6h-5.8zM613.3 145.7h7v2.6h-7zM622.1 145.7h3.4v2.6h-3.4zM626.9 145.7h1.1v2.6h-1.1z" fill="#d0d0d0" opacity="0.55"/><rect x="580.0" y="150.8" width="52.0" height="6.5" fill="#3e3e3e" /><path d="M582 152.9h3.5v2.6h-3.5zM586.9 152.9h7.1v2.6h-7.1zM596.2 152.9h7.4v2.6h-7.4zM605.2 152.9h8.1v2.6h-8.1zM614.5 152.9h4.2v2.6h-4.2zM620.2 152.9h7v2.6h-7z" fill="#d0d0d0" opacity="0.55"/><rect x="580.0" y="158.0" width="52.0" height="6.5" fill="#3e3e3e" /><path d="M582 160.2h8v2.6h-8zM591.3 160.2h6.2v2.6h-6.2zM599.2 160.2h3.5v2.6h-3.5zM604.7 160.2h4v2.6h-4zM610.6 160.2h6.3v2.6h-6.3zM618.4 160.2h5.1v2.6h-5.1zM625.6 160.2h2.4v2.6h-2.4z" fill="#d0d0d0" opacity="0.55"/><rect x="580.0" y="165.2" width="52.0" height="6.5" fill="#3e3e3e" /><path d="M582 167.4h5.7v2.6h-5.7zM589.4 167.4h5.6v2.6h-5.6z" fill="#d0d0d0" opacity="0.55"/><rect x="580.0" y="172.5" width="52.0" height="6.5" fill="#3e3e3e" /><path d="M582 174.7h4.1v2.6h-4.1zM587.6 174.7h4.5v2.6h-4.5zM593.9 174.7h8v2.6h-8zM604.1 174.7h5.5v2.6h-5.5zM611.4 174.7h6.7v2.6h-6.7zM619.4 174.7h6v2.6h-6z" fill="#d0d0d0" opacity="0.55"/><rect x="580.0" y="179.8" width="52.0" height="6.5" fill="#3e3e3e" /><path d="M582 181.9h3.2v2.6h-3.2zM586.7 181.9h3.6v2.6h-3.6zM592.2 181.9h4.8v2.6h-4.8zM598.8 181.9h5.6v2.6h-5.6zM606.3 181.9h8.9v2.6h-8.9zM617.3 181.9h3.3v2.6h-3.3zM622.6 181.9h3.3v2.6h-3.3z" fill="#d0d0d0" opacity="0.55"/><rect x="580.0" y="187.0" width="52.0" height="6.5" fill="#3e3e3e" /><path d="M582 189.2h6.6v2.6h-6.6zM590.5 189.2h7.1v2.6h-7.1zM599.3 189.2h7.3v2.6h-7.3zM607.9 189.2h5.8v2.6h-5.8zM615.3 189.2h8.6v2.6h-8.6zM625.5 189.2h2.5v2.6h-2.5z" fill="#d0d0d0" opacity="0.55"/><rect x="580.0" y="194.2" width="52.0" height="6.5" fill="#3e3e3e" /><path d="M582 196.4h9v2.6h-9zM593 196.4h6.3v2.6h-6.3zM601.2 196.4h5.5v2.6h-5.5zM608.3 196.4h8.1v2.6h-8.1zM618.5 196.4h5.9v2.6h-5.9zM626.3 196.4h1.7v2.6h-1.7z" fill="#d0d0d0" opacity="0.55"/><rect x="580.0" y="201.5" width="52.0" height="6.5" fill="#3e3e3e" /><path d="M582 203.7h3.9v2.6h-3.9zM587.5 203.7h8v2.6h-8zM596.6 203.7h6.5v2.6h-6.5zM605.1 203.7h5.6v2.6h-5.6zM612.7 203.7h6.4v2.6h-6.4zM620.3 203.7h4.7v2.6h-4.7zM626.6 203.7h1.4v2.6h-1.4z" fill="#d0d0d0" opacity="0.55"/><rect x="580.0" y="208.8" width="52.0" height="6.5" fill="#3e3e3e" /><path d="M582 210.9h3.5v2.6h-3.5zM587.2 210.9h5.8v2.6h-5.8zM595.2 210.9h6.5v2.6h-6.5zM603.6 210.9h5.2v2.6h-5.2zM610 210.9h3.7v2.6h-3.7zM615.7 210.9h3.7v2.6h-3.7zM621 210.9h7v2.6h-7z" fill="#d0d0d0" opacity="0.55"/><rect x="580.0" y="216.0" width="52.0" height="6.5" fill="#3e3e3e" /><path d="M582 218.2h7.5v2.6h-7.5zM591.2 218.2h5.5v2.6h-5.5zM598.1 218.2h4v2.6h-4zM604.2 218.2h8.2v2.6h-8.2zM614 218.2h3.8v2.6h-3.8zM619.4 218.2h8.4v2.6h-8.4z" fill="#d0d0d0" opacity="0.55"/><rect x="580.0" y="223.2" width="52.0" height="6.5" fill="#3e3e3e" /><path d="M582 225.4h5.4v2.6h-5.4zM589.2 225.4h5.8v2.6h-5.8zM596.7 225.4h7.6v2.6h-7.6zM606 225.4h8.6v2.6h-8.6zM616.6 225.4h3.3v2.6h-3.3zM621.6 225.4h6.4v2.6h-6.4z" fill="#d0d0d0" opacity="0.55"/><rect x="580.0" y="230.5" width="52.0" height="6.5" fill="#3e3e3e" /><path d="M582 232.7h8.9v2.6h-8.9zM592.6 232.7h3.4v2.6h-3.4z" fill="#d0d0d0" opacity="0.55"/><rect x="580.0" y="237.8" width="52.0" height="6.5" fill="#3e3e3e" /><path d="M582 239.9h4.2v2.6h-4.2zM587.7 239.9h3.9v2.6h-3.9zM593.9 239.9h8.4v2.6h-8.4zM604 239.9h5.7v2.6h-5.7zM611.3 239.9h8.1v2.6h-8.1zM621.2 239.9h6.8v2.6h-6.8z" fill="#d0d0d0" opacity="0.55"/><rect x="580.0" y="245.0" width="52.0" height="6.5" fill="#3e3e3e" /><path d="M582 247.2h6.5v2.6h-6.5zM590.6 247.2h5.1v2.6h-5.1z" fill="#d0d0d0" opacity="0.55"/><rect x="580.0" y="252.2" width="52.0" height="6.5" fill="#3e3e3e" /><path d="M582 254.4h3.8v2.6h-3.8zM587.6 254.4h8.5v2.6h-8.5zM597.4 254.4h6.1v2.6h-6.1zM605.5 254.4h7.6v2.6h-7.6zM615.2 254.4h5.5v2.6h-5.5zM622.1 254.4h4.2v2.6h-4.2z" fill="#d0d0d0" opacity="0.55"/><rect x="580.0" y="259.5" width="52.0" height="6.5" fill="#3e3e3e" /><path d="M582 261.7h4.2v2.6h-4.2zM587.9 261.7h6.2v2.6h-6.2z" fill="#d0d0d0" opacity="0.55"/><rect x="580.0" y="266.8" width="52.0" height="6.5" fill="#3e3e3e" /><path d="M582 268.9h4.2v2.6h-4.2zM588.3 268.9h8.1v2.6h-8.1zM598 268.9h3.2v2.6h-3.2zM603 268.9h7.7v2.6h-7.7zM612.5 268.9h4.7v2.6h-4.7zM618.8 268.9h4.9v2.6h-4.9zM625.8 268.9h2.2v2.6h-2.2z" fill="#d0d0d0" opacity="0.55"/><rect x="580.0" y="274.0" width="52.0" height="6.5" fill="#3e3e3e" /><path d="M582 276.2h5.6v2.6h-5.6zM589.5 276.2h5.1v2.6h-5.1zM596.1 276.2h3.4v2.6h-3.4zM601.4 276.2h7.9v2.6h-7.9zM610.7 276.2h5.4v2.6h-5.4zM617.7 276.2h3.4v2.6h-3.4zM623.1 276.2h4.7v2.6h-4.7z" fill="#d0d0d0" opacity="0.55"/><rect x="580.0" y="281.2" width="52.0" height="6.5" fill="#3e3e3e" /><path d="M582 283.4h7.4v2.6h-7.4zM590.9 283.4h4.3v2.6h-4.3zM597.4 283.4h8.7v2.6h-8.7zM607.8 283.4h8.3v2.6h-8.3zM618.1 283.4h8.1v2.6h-8.1z" fill="#d0d0d0" opacity="0.55"/><rect x="580.0" y="288.5" width="52.0" height="6.5" fill="#3e3e3e" /><path d="M582 290.7h4.7v2.6h-4.7zM588.3 290.7h6.9v2.6h-6.9z" fill="#d0d0d0" opacity="0.55"/><rect x="580.0" y="295.8" width="52.0" height="6.5" fill="#3e3e3e" /><path d="M582 297.9h6.4v2.6h-6.4zM590.4 297.9h8.8v2.6h-8.8zM601.1 297.9h6.5v2.6h-6.5zM608.8 297.9h6.1v2.6h-6.1zM616.7 297.9h5.4v2.6h-5.4zM623.4 297.9h4.6v2.6h-4.6z" fill="#d0d0d0" opacity="0.55"/><rect x="580.0" y="303.0" width="52.0" height="6.5" fill="#3e3e3e" /><path d="M582 305.2h6.2v2.6h-6.2zM589.5 305.2h7.6v2.6h-7.6zM599.2 305.2h7.3v2.6h-7.3zM607.8 305.2h8v2.6h-8zM617.1 305.2h3.1v2.6h-3.1zM621.8 305.2h6.2v2.6h-6.2z" fill="#d0d0d0" opacity="0.55"/><rect x="580.0" y="310.2" width="52.0" height="6.5" fill="#3e3e3e" /><path d="M582 312.4h8.7v2.6h-8.7zM592.3 312.4h5.1v2.6h-5.1zM598.8 312.4h4.1v2.6h-4.1zM604.9 312.4h3.4v2.6h-3.4zM609.8 312.4h4.7v2.6h-4.7zM616.6 312.4h8.5v2.6h-8.5zM626.8 312.4h1.2v2.6h-1.2z" fill="#d0d0d0" opacity="0.55"/><rect x="580.0" y="317.5" width="52.0" height="6.5" fill="#3e3e3e" /><path d="M582 319.7h6.3v2.6h-6.3zM590.4 319.7h6.4v2.6h-6.4zM599 319.7h3.4v2.6h-3.4zM603.7 319.7h8v2.6h-8zM613.5 319.7h6.3v2.6h-6.3zM621.1 319.7h6.2v2.6h-6.2z" fill="#d0d0d0" opacity="0.55"/><rect x="580.0" y="324.8" width="52.0" height="6.5" fill="#3e3e3e" /><path d="M582 326.9h4.8v2.6h-4.8zM588.5 326.9h4.4v2.6h-4.4zM594.4 326.9h5.3v2.6h-5.3zM601.5 326.9h4.8v2.6h-4.8zM608 326.9h4.7v2.6h-4.7zM614.5 326.9h4.5v2.6h-4.5zM620.9 326.9h5.6v2.6h-5.6z" fill="#d0d0d0" opacity="0.55"/><rect x="580.0" y="332.0" width="52.0" height="6.5" fill="#3e3e3e" /><path d="M582 334.2h6.9v2.6h-6.9zM590.4 334.2h5.4v2.6h-5.4zM597.3 334.2h8.8v2.6h-8.8zM608 334.2h6.3v2.6h-6.3zM616.3 334.2h5v2.6h-5zM622.8 334.2h5.2v2.6h-5.2z" fill="#d0d0d0" opacity="0.55"/><rect x="580.0" y="339.2" width="52.0" height="6.5" fill="#3e3e3e" /><path d="M582 341.4h4v2.6h-4zM588.2 341.4h3.9v2.6h-3.9zM593.4 341.4h6.3v2.6h-6.3zM601 341.4h8.6v2.6h-8.6zM611 341.4h3.4v2.6h-3.4zM615.6 341.4h5v2.6h-5zM622 341.4h4.8v2.6h-4.8z" fill="#d0d0d0" opacity="0.55"/><rect x="580.0" y="346.5" width="52.0" height="6.5" fill="#3e3e3e" /><path d="M582 348.7h8.3v2.6h-8.3zM591.7 348.7h8.9v2.6h-8.9zM602.2 348.7h8.6v2.6h-8.6zM612 348.7h8.4v2.6h-8.4zM622.1 348.7h5.9v2.6h-5.9z" fill="#d0d0d0" opacity="0.55"/><rect x="581.0" y="350.0" width="52.0" height="5.0" fill="#5a6282" /></svg><div class="wheel" style="left:17.1px;top:36.2px;"></div><div class="sv" style="left:31.8px;top:51.0px;background:linear-gradient(to bottom,rgba(0,0,0,0),#000),linear-gradient(to right,#fff,#e06010);"></div><svg width="635" height="355" viewBox="0 0 635 355"><rect x="596.0" y="30.0" width="24.0" height="32.0" fill="#f5f5f5" /><rect x="596.0" y="36.0" width="24.0" height="8.0" fill="#d8d8d8" opacity="0.7"/><path d="M604,58 L619,40" stroke="#a04040" stroke-width="0.5"/><rect x="527" y="46.4" width="75" height="12.1" rx="4.5" fill="#0e0d10" opacity="0.86"/><circle cx="533.5" cy="52.2" r="3.3" fill="#8a3cf0"/><path d="M532 51.4l1.5 2l1.5-2" stroke="#fff" stroke-width="1" fill="none"/><circle cx="541" cy="52.2" r="2.3" fill="#e8c840"/><text x="545.5" y="55.1" font-size="7.4" fill="#8fa0ff" opacity="0.7">SO</text><text x="562.6" y="55.3" font-size="7.6" font-weight="bold" fill="#eeeeee">SE HD</text><rect x="527" y="63" width="106" height="29.3" rx="4.5" fill="#0e0d10" opacity="0.86"/><rect x="530.5" y="66.3" width="5" height="5" rx="1.5" fill="#e07070"/><rect x="537" y="66.3" width="5" height="5" rx="1.5" fill="#30c090"/><rect x="543.5" y="66.3" width="5" height="5" rx="1.5" fill="#8a30d0"/><text x="550.5" y="71.7" font-size="7.4" fill="#c070d0" opacity="0.7">U</text><text x="563.4" y="71.9" font-size="7.6" font-weight="bold" fill="#eeeeee">ROOC MBBA GM</text><text x="530" y="80.5" font-size="7.6" font-weight="bold" fill="#eeeeee">RCAB KW HP EAG RCK</text><text x="530" y="89.1" font-size="7.6" font-weight="bold" fill="#eeeeee">GEP KHHR SE EMWG A</text><rect x="527" y="96" width="86" height="12.1" rx="4.5" fill="#0e0d10" opacity="0.86"/><rect x="530.5" y="99.3" width="5" height="5" rx="1.5" fill="#e07070"/><rect x="537" y="99.3" width="5" height="5" rx="1.5" fill="#30c090"/><rect x="543.5" y="99.3" width="5" height="5" rx="1.5" fill="#8a30d0"/><text x="550.5" y="104.7" font-size="7.4" fill="#7aa8ff" opacity="0.7">DEB</text><text x="573.2" y="104.9" font-size="7.6" font-weight="bold" fill="#eeeeee">KRS AA</text><rect x="527" y="112" width="106" height="20.7" rx="4.5" fill="#0e0d10" opacity="0.86"/><circle cx="533.5" cy="117.8" r="3.3" fill="#8a3cf0"/><path d="M532 117l1.5 2l1.5-2" stroke="#fff" stroke-width="1" fill="none"/><circle cx="541" cy="117.8" r="2.3" fill="#e8c840"/><text x="545.5" y="120.7" font-size="7.4" fill="#8fa0ff" opacity="0.7">AUG</text><text x="572.5" y="120.9" font-size="7.6" font-weight="bold" fill="#eeeeee">MPUO MG RN</text><text x="530" y="129.5" font-size="7.6" font-weight="bold" fill="#eeeeee">BBH RPU KU</text><rect x="527" y="137" width="75" height="12.1" rx="4.5" fill="#0e0d10" opacity="0.86"/><circle cx="533.5" cy="142.8" r="3.3" fill="#9b59d0"/><path d="M532 142l1.5 2l1.5-2" stroke="#fff" stroke-width="1" fill="none"/><text x="539.5" y="145.7" font-size="7.4" fill="#c070d0" opacity="0.7">CK</text><text x="556.9" y="145.9" font-size="7.6" font-weight="bold" fill="#eeeeee">BA RU O</text><rect x="527" y="153" width="40" height="12.1" rx="4.5" fill="#0e0d10" opacity="0.86"/><rect x="530.5" y="156.3" width="5" height="5" rx="1.5" fill="#e07070"/><rect x="537" y="156.3" width="5" height="5" rx="1.5" fill="#30c090"/><rect x="543.5" y="156.3" width="5" height="5" rx="1.5" fill="#8a30d0"/><text x="550.5" y="161.7" font-size="7.4" fill="#7aa8ff" opacity="0.7">M</text><rect x="527" y="169" width="106" height="20.7" rx="4.5" fill="#0e0d10" opacity="0.86"/><circle cx="533.5" cy="174.8" r="3.3" fill="#8a3cf0"/><path d="M532 174l1.5 2l1.5-2" stroke="#fff" stroke-width="1" fill="none"/><circle cx="541" cy="174.8" r="2.3" fill="#e8c840"/><text x="545.5" y="177.7" font-size="7.4" fill="#8fa0ff" opacity="0.7">SS</text><text x="567" y="177.9" font-size="7.6" font-weight="bold" fill="#eeeeee">MMN HSS WD</text><text x="530" y="186.5" font-size="7.6" font-weight="bold" fill="#eeeeee">BNMS GMH O</text></svg></div><div class="cell" style="left:0px;top:720px"><svg width="635" height="355" viewBox="0 0 635 355"><rect x="0.0" y="0.0" width="635.0" height="355.0" fill="#3a3a3a" /><rect x="0.0" y="0.0" width="635.0" height="7.5" fill="#3e3e3e" /><rect x="0.0" y="7.5" width="635.0" height="8.5" fill="#4a4a4a" /><rect x="0.0" y="16.0" width="635.0" height="8.0" fill="#3a3a3a" /><rect x="83.0" y="16.0" width="408.0" height="8.0" fill="#4f4f4f" /><use href="#menu"/><rect x="0.0" y="24.0" width="16.0" height="331.0" fill="#3b3b3b" /><use href="#tools"/><use href="#lpanel"/><rect x="83.0" y="24.0" width="408.0" height="327.0" fill="#2e2e2e" /><rect x="83.0" y="24.0" width="408.0" height="7.5" fill="#333333" /><rect x="83.0" y="350.5" width="408.0" height="4.5" fill="#3a3a3a" /><path d="M86 351.5h4.4v2.2h-4.4zM92 351.5h6.1v2.2h-6.1zM99.3 351.5h8.7v2.2h-8.7zM109.9 351.5h7.2v2.2h-7.2zM119.3 351.5h3.5v2.2h-3.5zM124.7 351.5h8.1v2.2h-8.1zM134.7 351.5h6.4v2.2h-6.4zM143 351.5h3.7v2.2h-3.7zM148.3 351.5h7.3v2.2h-7.3zM157.7 351.5h6.9v2.2h-6.9zM166.4 351.5h5v2.2h-5zM173 351.5h4.4v2.2h-4.4zM179.6 351.5h6.4v2.2h-6.4z" fill="#999" opacity="0.35"/><rect x="83.0" y="24.0" width="408.0" height="7.5" fill="#333" /><rect x="83.0" y="31.5" width="56.4" height="319.0" fill="url(#chk)" /><rect x="139.4" y="31.5" width="5.9" height="319.0" fill="#3a3a3a" /><rect x="140.9" y="40.0" width="2.0" height="300.0" fill="#4a4a4a" /><rect x="145.3" y="31.5" width="343.6" height="319.0" fill="#ffffff" /><rect x="488.9" y="24.0" width="2.0" height="327.0" fill="#333" /><rect x="84.0" y="25.0" width="42.0" height="6.0" fill="#3a3a3a" /><rect x="146.0" y="25.0" width="28.0" height="6.0" fill="#3a3a3a" /><rect x="179.0" y="25.0" width="30.0" height="6.0" fill="#5a6282" /><rect x="212.0" y="25.0" width="30.0" height="6.0" fill="#3a3a3a" /><path d="M139.4,54.8 C110,58 92,70 83,88 L83,222 C100,236 122,246 139.4,250 Z" fill="#fbe8e0"/><path d="M92,135 C105,124 120,122 131,126" stroke="#6a5a50" stroke-width="1" fill="none"/><path d="M83,172 C90,160 106,154 139,163" stroke="#2a1e1e" stroke-width="3" fill="none"/><ellipse cx="112" cy="175" rx="20" ry="13" fill="#fff"/><circle cx="114" cy="176" r="12" fill="#3ab5c8"/><circle cx="114" cy="172" r="5" fill="#1a5a7a"/><circle cx="119" cy="170" r="2" fill="#fff"/><ellipse cx="108" cy="200" rx="18" ry="9" fill="#f5c0b4" opacity="0.7"/><g fill="none" stroke="#c6c6c6" stroke-width="0.7" stroke-linecap="round"><path d="M212,232 C214,180 215,130 219,99.5 C230,70 245,52 265,43 C285,36 310,33 331.6,33 C355,34 380,40 398,50 C415,75 432,100 441,132.6 C448,165 452,200 454,232"/><path d="M225,60 L228,33 M240,45 L252,33 M404,33 L410,52 M420,33 L412,48"/><path d="M238.7,199 C242,170 246,140 252,116 C265,90 280,75 298.4,66.3 C310,62 320,60 331.6,59.7 C350,62 368,68 381.3,76.3 C396,98 408,118 414.5,132.6 C422,160 428,190 431,215.5"/><path d="M275,99.5 L298.4,159 M315,83 L335,142.6 M351.5,93 L365,139 M290,90 L270,170 M380,100 L395,170 M300,120 l-10,50 M360,110 l8,60"/><path d="M265,185.7 C278,200 288,208 298.4,212 C310,217 320,219 331.6,219 C345,218 355,215 364.7,212 C375,205 385,196 391.2,185.7"/><path d="M308,219 L308,245 L358,245 L358,219 M315,232 h36 M328,250 a4,4 0 1 0 0.1,0"/><path d="M328,254 L328,268 M298,265 L308,311 M351,265 L355,311 M302,311 h8 v8 h-8 z M351,311 h8 v8 h-8 z"/><path d="M275,248 C280,270 285,290 292,331 M290,250 C286,280 288,300 284,331 M378,252 C372,280 370,300 368,331 M390,250 C390,280 386,300 382,331"/><path d="M215.5,248 C210,280 205,310 199,331 M431,248 C438,280 442,310 444,331 M250,300 C290,290 360,290 410,302"/><path d="M391,99.5 l14,-3 l3,8 l-14,3 z M393,108 l14,-3 l2,7 l-14,3 z"/></g><defs><linearGradient id="eyeg" x1="0" y1="0" x2="0" y2="1"><stop offset="0" stop-color="#1a3c6a"/><stop offset="0.55" stop-color="#2a8ab0"/><stop offset="1" stop-color="#7de0d0"/></linearGradient></defs><ellipse cx="300" cy="159" rx="12.5" ry="13" fill="url(#eyeg)"/><ellipse cx="361.7" cy="159" rx="12.5" ry="13" fill="url(#eyeg)"/><circle cx="300" cy="157" r="3" fill="#0a1a30"/><circle cx="361.7" cy="157" r="3" fill="#0a1a30"/><path d="M259,170 C262,160 276,160 284,168 L285,194 C276,196 266,190 262,184 C259,178 258,174 259,170 Z" fill="#f4c2c0" stroke="#b06060" stroke-width="0.6"/><path d="M404,170 C401,160 387,160 379,168 L378,194 C387,196 397,190 401,184 C404,178 405,174 404,170 Z" fill="#f4c2c0" stroke="#b06060" stroke-width="0.6"/><path d="M268,184 l14,6 M395,184 l-14,6" stroke="#c05a64" stroke-width="2.5"/><circle cx="331" cy="173" r="2" fill="#f4b0b8"/><rect x="491.0" y="24.0" width="86.0" height="331.0" fill="#383838" /><rect x="491.0" y="24.0" width="86.0" height="6.0" fill="#333" /><rect x="493.0" y="30.5" width="82.0" height="21.0" fill="#3c3c3c" /><rect x="530.0" y="32.0" width="14.0" height="3.0" fill="#dedede" opacity="0.8"/><path d="M495 38.5h3.6v3h-3.6zM500.3 38.5h5.3v3h-5.3zM506.8 38.5h3.2v3h-3.2zM512 38.5h6.6v3h-6.6zM520.1 38.5h3.3v3h-3.3zM525.3 38.5h8.2v3h-8.2zM535.1 38.5h3.9v3h-3.9zM540.7 38.5h4.9v3h-4.9zM547.6 38.5h6.3v3h-6.3z" fill="#999" opacity="0.45"/><path d="M495 45.5h8.8v3h-8.8zM505.1 45.5h7.1v3h-7.1zM514.2 45.5h3.5v3h-3.5zM519.4 45.5h3.5v3h-3.5zM524.6 45.5h4.2v3h-4.2zM530.2 45.5h8.6v3h-8.6zM540.9 45.5h3.2v3h-3.2zM545.7 45.5h5.5v3h-5.5zM553.2 45.5h1.8v3h-1.8z" fill="#999" opacity="0.45"/><rect x="496.0" y="56.5" width="3.0" height="2.0" fill="#888" opacity="0.6"/><rect x="518.0" y="54.0" width="5.0" height="10.0" fill="#e4e4e4" /><path d="M526 55h5.4v2.4h-5.4zM532.7 55h3.5v2.4h-3.5zM537.6 55h6.4v2.4h-6.4z" fill="#c8c8c8" opacity="0.45"/><path d="M526 60h4.4v2.4h-4.4zM532.6 60h7.3v2.4h-7.3z" fill="#c8c8c8" opacity="0.45"/><rect x="496.0" y="69.9" width="3.0" height="2.0" fill="#888" opacity="0.6"/><rect x="518.0" y="67.4" width="5.0" height="10.0" fill="#e4e4e4" /><path d="M526 68.4h5.7v2.4h-5.7zM533.4 68.4h4.9v2.4h-4.9zM540.2 68.4h3.8v2.4h-3.8z" fill="#c8c8c8" opacity="0.45"/><path d="M526 73.4h6.3v2.4h-6.3zM534.5 73.4h5.5v2.4h-5.5z" fill="#c8c8c8" opacity="0.45"/><rect x="496.0" y="83.3" width="3.0" height="2.0" fill="#888" opacity="0.6"/><rect x="518.0" y="80.8" width="5.0" height="10.0" fill="#e4e4e4" /><path d="M526 81.8h6.9v2.4h-6.9zM534.4 81.8h8.2v2.4h-8.2z" fill="#c8c8c8" opacity="0.45"/><path d="M526 86.8h7.8v2.4h-7.8zM535.7 86.8h4.3v2.4h-4.3z" fill="#c8c8c8" opacity="0.45"/><rect x="496.0" y="96.7" width="3.0" height="2.0" fill="#888" opacity="0.6"/><rect x="510.0" y="94.2" width="5.0" height="10.0" fill="#e4e4e4" /><path d="M518 95.2h7.3v2.4h-7.3zM526.7 95.2h5.8v2.4h-5.8zM533.8 95.2h2.2v2.4h-2.2z" fill="#c8c8c8" opacity="0.45"/><path d="M518 100.2h6.1v2.4h-6.1zM525.6 100.2h6.4v2.4h-6.4z" fill="#c8c8c8" opacity="0.45"/><rect x="496.0" y="110.1" width="3.0" height="2.0" fill="#888" opacity="0.6"/><rect x="510.0" y="107.6" width="5.0" height="10.0" fill="#e4e4e4" /><path d="M518 108.6h6.5v2.4h-6.5zM525.8 108.6h4.4v2.4h-4.4zM532.2 108.6h3.8v2.4h-3.8z" fill="#c8c8c8" opacity="0.45"/><path d="M518 113.6h8.7v2.4h-8.7zM528.9 113.6h3.1v2.4h-3.1z" fill="#c8c8c8" opacity="0.45"/><rect x="496.0" y="123.5" width="3.0" height="2.0" fill="#888" opacity="0.6"/><rect x="518.0" y="121.0" width="5.0" height="10.0" fill="#e4e4e4" /><path d="M526 122h6.7v2.4h-6.7zM534.7 122h7.4v2.4h-7.4z" fill="#c8c8c8" opacity="0.45"/><path d="M526 127h5.9v2.4h-5.9zM533.1 127h5.5v2.4h-5.5z" fill="#c8c8c8" opacity="0.45"/><rect x="505.0" y="132.9" width="50.0" height="12.4" fill="#4e5670" /><rect x="496.0" y="136.9" width="3.0" height="2.0" fill="#888" opacity="0.6"/><rect x="510.0" y="134.4" width="5.0" height="10.0" fill="#e4e4e4" /><path d="M518 135.4h4.5v2.4h-4.5zM524 135.4h7.1v2.4h-7.1zM533 135.4h3v2.4h-3z" fill="#c8c8c8" opacity="0.45"/><path d="M518 140.4h4.1v2.4h-4.1zM524.2 140.4h7.6v2.4h-7.6z" fill="#c8c8c8" opacity="0.45"/><rect x="496.0" y="150.3" width="3.0" height="2.0" fill="#888" opacity="0.6"/><rect x="506.0" y="147.8" width="5.0" height="10.0" fill="#e4e4e4" /><path d="M514 148.8h7.8v2.4h-7.8zM523.9 148.8h3.4v2.4h-3.4zM528.8 148.8h3.2v2.4h-3.2z" fill="#c8c8c8" opacity="0.45"/><path d="M514 153.8h4.9v2.4h-4.9zM520.9 153.8h7.1v2.4h-7.1z" fill="#c8c8c8" opacity="0.45"/><rect x="496.0" y="163.7" width="3.0" height="2.0" fill="#888" opacity="0.6"/><rect x="518.0" y="161.2" width="5.0" height="10.0" fill="#e4e4e4" /><path d="M526 162.2h5.2v2.4h-5.2zM532.5 162.2h6.4v2.4h-6.4zM540.8 162.2h3.2v2.4h-3.2z" fill="#c8c8c8" opacity="0.45"/><path d="M526 167.2h8.6v2.4h-8.6zM536.4 167.2h3.6v2.4h-3.6z" fill="#c8c8c8" opacity="0.45"/><rect x="496.0" y="177.1" width="3.0" height="2.0" fill="#888" opacity="0.6"/><rect x="514.0" y="174.6" width="5.0" height="10.0" fill="#e4e4e4" /><path d="M522 175.6h6.9v2.4h-6.9zM530.7 175.6h4.3v2.4h-4.3zM536.9 175.6h3.1v2.4h-3.1z" fill="#c8c8c8" opacity="0.45"/><path d="M522 180.6h3.5v2.4h-3.5zM527.3 180.6h5.4v2.4h-5.4zM534.1 180.6h1.9v2.4h-1.9z" fill="#c8c8c8" opacity="0.45"/><rect x="496.0" y="190.5" width="3.0" height="2.0" fill="#888" opacity="0.6"/><rect x="510.0" y="188.0" width="5.0" height="10.0" fill="#e4e4e4" /><path d="M518 189h7.9v2.4h-7.9zM527.9 189h5.9v2.4h-5.9z" fill="#c8c8c8" opacity="0.45"/><path d="M518 194h4v2.4h-4zM524.1 194h5v2.4h-5zM530.9 194h1.1v2.4h-1.1z" fill="#c8c8c8" opacity="0.45"/><rect x="496.0" y="203.9" width="3.0" height="2.0" fill="#888" opacity="0.6"/><rect x="506.0" y="201.4" width="5.0" height="10.0" fill="#e4e4e4" /><path d="M514 202.4h6.1v2.4h-6.1zM522.2 202.4h8.8v2.4h-8.8z" fill="#c8c8c8" opacity="0.45"/><path d="M514 207.4h7.7v2.4h-7.7zM523.4 207.4h4.6v2.4h-4.6z" fill="#c8c8c8" opacity="0.45"/><rect x="496.0" y="217.3" width="3.0" height="2.0" fill="#888" opacity="0.6"/><rect x="506.0" y="214.8" width="5.0" height="10.0" fill="#e4e4e4" /><path d="M514 215.8h4v2.4h-4zM519.3 215.8h5.7v2.4h-5.7zM527 215.8h5v2.4h-5z" fill="#c8c8c8" opacity="0.45"/><path d="M514 220.8h4.4v2.4h-4.4zM519.7 220.8h6.5v2.4h-6.5z" fill="#c8c8c8" opacity="0.45"/><rect x="496.0" y="230.7" width="3.0" height="2.0" fill="#888" opacity="0.6"/><rect x="518.0" y="228.2" width="5.0" height="10.0" fill="#e4e4e4" /><path d="M526 229.2h7.8v2.4h-7.8zM535.4 229.2h5.9v2.4h-5.9zM543 229.2h1v2.4h-1z" fill="#c8c8c8" opacity="0.45"/><path d="M526 234.2h8.6v2.4h-8.6zM536.2 234.2h3.8v2.4h-3.8z" fill="#c8c8c8" opacity="0.45"/><rect x="496.0" y="244.1" width="3.0" height="2.0" fill="#888" opacity="0.6"/><rect x="518.0" y="241.6" width="5.0" height="10.0" fill="#e4e4e4" /><path d="M526 242.6h7v2.4h-7zM535 242.6h3.5v2.4h-3.5zM540.5 242.6h3.5v2.4h-3.5z" fill="#c8c8c8" opacity="0.45"/><path d="M526 247.6h3.3v2.4h-3.3zM530.5 247.6h6.6v2.4h-6.6z" fill="#c8c8c8" opacity="0.45"/><rect x="496.0" y="257.5" width="3.0" height="2.0" fill="#888" opacity="0.6"/><rect x="510.0" y="255.0" width="5.0" height="10.0" fill="#e4e4e4" /><path d="M518 256h7.3v2.4h-7.3zM526.8 256h7.5v2.4h-7.5z" fill="#c8c8c8" opacity="0.45"/><path d="M518 261h6v2.4h-6zM525.7 261h6.2v2.4h-6.2z" fill="#c8c8c8" opacity="0.45"/><rect x="496.0" y="270.9" width="3.0" height="2.0" fill="#888" opacity="0.6"/><rect x="506.0" y="268.4" width="5.0" height="10.0" fill="#e4e4e4" /><path d="M514 269.4h6.2v2.4h-6.2zM522.3 269.4h5.9v2.4h-5.9zM529.7 269.4h2.3v2.4h-2.3z" fill="#c8c8c8" opacity="0.45"/><path d="M514 274.4h5.7v2.4h-5.7zM521.6 274.4h6.4v2.4h-6.4z" fill="#c8c8c8" opacity="0.45"/><rect x="496.0" y="284.3" width="3.0" height="2.0" fill="#888" opacity="0.6"/><rect x="506.0" y="281.8" width="5.0" height="10.0" fill="#e4e4e4" /><path d="M514 282.8h6.2v2.4h-6.2zM521.8 282.8h8.5v2.4h-8.5z" fill="#c8c8c8" opacity="0.45"/><path d="M514 287.8h5.2v2.4h-5.2zM520.8 287.8h4.2v2.4h-4.2z" fill="#c8c8c8" opacity="0.45"/><rect x="496.0" y="297.7" width="3.0" height="2.0" fill="#888" opacity="0.6"/><rect x="506.0" y="295.2" width="5.0" height="10.0" fill="#e4e4e4" /><path d="M514 296.2h3.5v2.4h-3.5zM519.5 296.2h7v2.4h-7zM527.9 296.2h4.1v2.4h-4.1z" fill="#c8c8c8" opacity="0.45"/><path d="M514 301.2h3.2v2.4h-3.2zM518.7 301.2h5.2v2.4h-5.2zM525.2 301.2h2.8v2.4h-2.8z" fill="#c8c8c8" opacity="0.45"/><rect x="496.0" y="311.1" width="3.0" height="2.0" fill="#888" opacity="0.6"/><rect x="506.0" y="308.6" width="5.0" height="10.0" fill="#e4e4e4" /><path d="M514 309.6h7.2v2.4h-7.2zM523.2 309.6h4.5v2.4h-4.5zM529.9 309.6h2.1v2.4h-2.1z" fill="#c8c8c8" opacity="0.45"/><path d="M514 314.6h9v2.4h-9zM524.7 314.6h3.3v2.4h-3.3z" fill="#c8c8c8" opacity="0.45"/><rect x="568.0" y="24.0" width="67.0" height="331.0" fill="#383838" /><rect x="569.0" y="27.0" width="9.0" height="8.0" fill="#474747" /><rect x="569.0" y="38.5" width="9.0" height="8.0" fill="#474747" /><rect x="569.0" y="50.0" width="9.0" height="8.0" fill="#474747" /><rect x="569.0" y="61.5" width="9.0" height="8.0" fill="#474747" /><rect x="569.0" y="73.0" width="9.0" height="8.0" fill="#474747" /><rect x="569.0" y="84.5" width="9.0" height="8.0" fill="#474747" /><rect x="569.0" y="96.0" width="9.0" height="8.0" fill="#474747" /><rect x="569.0" y="107.5" width="9.0" height="8.0" fill="#474747" /><rect x="580.0" y="24.0" width="55.0" height="5.0" fill="#333" /><rect x="582.0" y="30.0" width="51.0" height="50.0" fill="#fff" /><rect x="580.0" y="81.0" width="55.0" height="15.0" fill="#3a3a3a" /><path d="M583 83h3.6v2.5h-3.6zM588 83h5.9v2.5h-5.9zM595.2 83h3.9v2.5h-3.9zM600.9 83h5v2.5h-5zM607.8 83h6.5v2.5h-6.5zM615.7 83h6.7v2.5h-6.7zM624 83h7v2.5h-7z" fill="#aaa" opacity="0.4"/><path d="M583 89h6.7v2.5h-6.7zM591.7 89h7.4v2.5h-7.4zM600.4 89h3.4v2.5h-3.4zM606 89h6.7v2.5h-6.7zM614.6 89h5v2.5h-5zM621.2 89h8v2.5h-8z" fill="#aaa" opacity="0.4"/><rect x="580.0" y="100.0" width="52.0" height="6.5" fill="#3e3e3e" /><path d="M582 102.2h3.9v2.6h-3.9zM587.5 102.2h6.5v2.6h-6.5z" fill="#d0d0d0" opacity="0.55"/><rect x="580.0" y="107.2" width="52.0" height="6.5" fill="#3e3e3e" /><path d="M582 109.5h8v2.6h-8zM591.3 109.5h3.6v2.6h-3.6z" fill="#d0d0d0" opacity="0.55"/><rect x="580.0" y="114.5" width="52.0" height="6.5" fill="#3e3e3e" /><path d="M582 116.7h5.8v2.6h-5.8zM589.1 116.7h6.6v2.6h-6.6z" fill="#d0d0d0" opacity="0.55"/><rect x="580.0" y="121.8" width="52.0" height="6.5" fill="#3e3e3e" /><path d="M582 124h7v2.6h-7zM591 124h3.3v2.6h-3.3z" fill="#d0d0d0" opacity="0.55"/><rect x="580.0" y="129.0" width="52.0" height="6.5" fill="#3e3e3e" /><path d="M582 131.2h3.7v2.6h-3.7zM587.6 131.2h5.4v2.6h-5.4zM594.3 131.2h1.7v2.6h-1.7z" fill="#d0d0d0" opacity="0.55"/><rect x="580.0" y="136.2" width="52.0" height="6.5" fill="#3e3e3e" /><path d="M582 138.4h6.6v2.6h-6.6zM590.2 138.4h5.8v2.6h-5.8z" fill="#d0d0d0" opacity="0.55"/><rect x="580.0" y="143.5" width="52.0" height="6.5" fill="#3e3e3e" /><path d="M582 145.7h8.1v2.6h-8.1zM591.4 145.7h4.6v2.6h-4.6z" fill="#d0d0d0" opacity="0.55"/><rect x="580.0" y="150.8" width="52.0" height="6.5" fill="#3e3e3e" /><path d="M582 152.9h6.4v2.6h-6.4zM590 152.9h6v2.6h-6z" fill="#d0d0d0" opacity="0.55"/><rect x="580.0" y="158.0" width="52.0" height="6.5" fill="#3e3e3e" /><path d="M582 160.2h8v2.6h-8zM591.3 160.2h6.2v2.6h-6.2zM599.2 160.2h3.5v2.6h-3.5zM604.7 160.2h4v2.6h-4zM610.6 160.2h6.3v2.6h-6.3zM618.4 160.2h5.1v2.6h-5.1zM625.6 160.2h2.4v2.6h-2.4z" fill="#d0d0d0" opacity="0.55"/><rect x="580.0" y="165.2" width="52.0" height="6.5" fill="#3e3e3e" /><path d="M582 167.4h5.7v2.6h-5.7zM589.4 167.4h5.6v2.6h-5.6z" fill="#d0d0d0" opacity="0.55"/><rect x="580.0" y="172.5" width="52.0" height="6.5" fill="#3e3e3e" /><path d="M582 174.7h9v2.6h-9zM592.5 174.7h3.5v2.6h-3.5z" fill="#d0d0d0" opacity="0.55"/><rect x="580.0" y="179.8" width="52.0" height="6.5" fill="#3e3e3e" /><path d="M582 181.9h8.7v2.6h-8.7zM592.6 181.9h3.4v2.6h-3.4z" fill="#d0d0d0" opacity="0.55"/><rect x="580.0" y="187.0" width="52.0" height="6.5" fill="#3e3e3e" /><path d="M582 189.2h6.8v2.6h-6.8zM590.1 189.2h5.9v2.6h-5.9z" fill="#d0d0d0" opacity="0.55"/><rect x="580.0" y="194.2" width="52.0" height="6.5" fill="#3e3e3e" /><path d="M582 196.4h4.7v2.6h-4.7zM588 196.4h5.2v2.6h-5.2zM594.9 196.4h1.1v2.6h-1.1z" fill="#d0d0d0" opacity="0.55"/><rect x="580.0" y="201.5" width="52.0" height="6.5" fill="#3e3e3e" /><path d="M582 203.7h5.7v2.6h-5.7zM589.1 203.7h6.9v2.6h-6.9z" fill="#d0d0d0" opacity="0.55"/><rect x="580.0" y="208.8" width="52.0" height="6.5" fill="#3e3e3e" /><path d="M582 210.9h7.8v2.6h-7.8zM592 210.9h4v2.6h-4z" fill="#d0d0d0" opacity="0.55"/><rect x="580.0" y="216.0" width="52.0" height="6.5" fill="#3e3e3e" /><path d="M582 218.2h7.1v2.6h-7.1zM590.4 218.2h4.1v2.6h-4.1z" fill="#d0d0d0" opacity="0.55"/><rect x="580.0" y="223.2" width="52.0" height="6.5" fill="#3e3e3e" /><path d="M582 225.4h3v2.6h-3zM587.1 225.4h7.9v2.6h-7.9z" fill="#d0d0d0" opacity="0.55"/><rect x="580.0" y="230.5" width="52.0" height="6.5" fill="#3e3e3e" /><path d="M582 232.7h8.9v2.6h-8.9zM592.6 232.7h3.4v2.6h-3.4z" fill="#d0d0d0" opacity="0.55"/><rect x="580.0" y="237.8" width="52.0" height="6.5" fill="#3e3e3e" /><path d="M582 239.9h6.3v2.6h-6.3zM590.1 239.9h5.9v2.6h-5.9z" fill="#d0d0d0" opacity="0.55"/><rect x="580.0" y="245.0" width="52.0" height="6.5" fill="#3e3e3e" /><path d="M582 247.2h6.5v2.6h-6.5zM590.6 247.2h5.1v2.6h-5.1z" fill="#d0d0d0" opacity="0.55"/><rect x="580.0" y="252.2" width="52.0" height="6.5" fill="#3e3e3e" /><path d="M582 254.4h3.8v2.6h-3.8zM587.6 254.4h8.5v2.6h-8.5zM597.4 254.4h6.1v2.6h-6.1zM605.5 254.4h7.6v2.6h-7.6zM615.2 254.4h5.5v2.6h-5.5zM622.1 254.4h4.2v2.6h-4.2z" fill="#d0d0d0" opacity="0.55"/><rect x="580.0" y="259.5" width="52.0" height="6.5" fill="#3e3e3e" /><path d="M582 261.7h4.2v2.6h-4.2zM587.9 261.7h6.2v2.6h-6.2z" fill="#d0d0d0" opacity="0.55"/><rect x="580.0" y="266.8" width="52.0" height="6.5" fill="#3e3e3e" /><path d="M582 268.9h4.7v2.6h-4.7zM588.2 268.9h6.7v2.6h-6.7z" fill="#d0d0d0" opacity="0.55"/><rect x="580.0" y="274.0" width="52.0" height="6.5" fill="#3e3e3e" /><path d="M582 276.2h4.2v2.6h-4.2zM587.5 276.2h4.4v2.6h-4.4zM594 276.2h2v2.6h-2z" fill="#d0d0d0" opacity="0.55"/><rect x="580.0" y="281.2" width="52.0" height="6.5" fill="#3e3e3e" /><path d="M582 283.4h6.9v2.6h-6.9zM590.4 283.4h5.6v2.6h-5.6z" fill="#d0d0d0" opacity="0.55"/><rect x="580.0" y="288.5" width="52.0" height="6.5" fill="#3e3e3e" /><path d="M582 290.7h4.7v2.6h-4.7zM588.3 290.7h6.9v2.6h-6.9z" fill="#d0d0d0" opacity="0.55"/><rect x="580.0" y="295.8" width="52.0" height="6.5" fill="#3e3e3e" /><path d="M582 297.9h6.9v2.6h-6.9zM590.4 297.9h5.6v2.6h-5.6z" fill="#d0d0d0" opacity="0.55"/><rect x="580.0" y="303.0" width="52.0" height="6.5" fill="#3e3e3e" /><path d="M582 305.2h7.6v2.6h-7.6zM591.3 305.2h4.7v2.6h-4.7z" fill="#d0d0d0" opacity="0.55"/><rect x="580.0" y="310.2" width="52.0" height="6.5" fill="#3e3e3e" /><path d="M582 312.4h6.3v2.6h-6.3zM589.6 312.4h6.4v2.6h-6.4z" fill="#d0d0d0" opacity="0.55"/><rect x="580.0" y="317.5" width="52.0" height="6.5" fill="#3e3e3e" /><path d="M582 319.7h4v2.6h-4zM587.8 319.7h4.3v2.6h-4.3zM593.5 319.7h2.5v2.6h-2.5z" fill="#d0d0d0" opacity="0.55"/><rect x="580.0" y="324.8" width="52.0" height="6.5" fill="#3e3e3e" /><path d="M582 326.9h4.8v2.6h-4.8zM588.5 326.9h4.4v2.6h-4.4zM594.4 326.9h5.3v2.6h-5.3zM601.5 326.9h4.8v2.6h-4.8zM608 326.9h4.7v2.6h-4.7zM614.5 326.9h4.5v2.6h-4.5zM620.9 326.9h5.6v2.6h-5.6z" fill="#d0d0d0" opacity="0.55"/><rect x="580.0" y="332.0" width="52.0" height="6.5" fill="#3e3e3e" /><path d="M582 334.2h6.6v2.6h-6.6zM590.3 334.2h5.2v2.6h-5.2z" fill="#d0d0d0" opacity="0.55"/><rect x="580.0" y="339.2" width="52.0" height="6.5" fill="#3e3e3e" /><path d="M582 341.4h5.9v2.6h-5.9zM589.8 341.4h3.1v2.6h-3.1zM594.6 341.4h1.4v2.6h-1.4z" fill="#d0d0d0" opacity="0.55"/><rect x="580.0" y="346.5" width="52.0" height="6.5" fill="#3e3e3e" /><path d="M582 348.7h8v2.6h-8zM592.1 348.7h3.9v2.6h-3.9z" fill="#d0d0d0" opacity="0.55"/><rect x="581.0" y="350.0" width="52.0" height="5.0" fill="#5a6282" /></svg><div class="wheel" style="left:17.1px;top:36.2px;"></div><div class="sv" style="left:31.8px;top:51.0px;background:linear-gradient(to bottom,rgba(0,0,0,0),#000),linear-gradient(to right,#fff,#1a7ae0);"></div><svg width="635" height="355" viewBox="0 0 635 355"><rect x="596.0" y="30.0" width="24.0" height="39.0" fill="#f8f8f8" /><rect x="598.0" y="34.0" width="19.0" height="15.0" fill="none" stroke="#d09090" stroke-width="0.5"/><rect x="599.0" y="38.0" width="16.0" height="10.0" fill="#cfd8d0" opacity="0.6"/><rect x="527" y="38" width="105" height="12.1" rx="4.5" fill="#0e0d10" opacity="0.86"/><circle cx="533.5" cy="43.8" r="3.3" fill="#8a3cf0"/><path d="M532 43l1.5 2l1.5-2" stroke="#fff" stroke-width="1" fill="none"/><text x="539.5" y="46.7" font-size="7.4" fill="#8fa0ff" opacity="0.7">WH</text><text x="556.2" y="46.9" font-size="7.6" font-weight="bold" fill="#eeeeee">GHK NMOG COM</text><rect x="527" y="54.7" width="83" height="12.1" rx="4.5" fill="#0e0d10" opacity="0.86"/><circle cx="533.5" cy="60.5" r="3.3" fill="#9b59d0"/><path d="M532 59.7l1.5 2l1.5-2" stroke="#fff" stroke-width="1" fill="none"/><text x="539.5" y="63.4" font-size="7.4" fill="#c070d0" opacity="0.7">GAE</text><text x="560.7" y="63.6" font-size="7.6" font-weight="bold" fill="#eeeeee">DP HGN W</text><rect x="527" y="71.3" width="106" height="29.3" rx="4.5" fill="#0e0d10" opacity="0.86"/><circle cx="533.5" cy="77.1" r="3.3" fill="#e05a8a"/><path d="M532 76.3l1.5 2l1.5-2" stroke="#fff" stroke-width="1" fill="none"/><circle cx="541" cy="77.1" r="2.3" fill="#e8c840"/><text x="545.5" y="80" font-size="7.4" fill="#7aa8ff" opacity="0.7">GUW</text><text x="569.3" y="80.2" font-size="7.6" font-weight="bold" fill="#eeeeee">DUBC UNK M</text><text x="530" y="88.8" font-size="7.6" font-weight="bold" fill="#eeeeee">CU RNW MMG ORC SC B</text><text x="530" y="97.4" font-size="7.6" font-weight="bold" fill="#eeeeee">MNE N</text><rect x="527" y="104.4" width="106" height="29.3" rx="4.5" fill="#0e0d10" opacity="0.86"/><rect x="530.5" y="107.7" width="5" height="5" rx="1.5" fill="#e07070"/><rect x="537" y="107.7" width="5" height="5" rx="1.5" fill="#30c090"/><rect x="543.5" y="107.7" width="5" height="5" rx="1.5" fill="#8a30d0"/><text x="550.5" y="113.1" font-size="7.4" fill="#8fa0ff" opacity="0.7">CAS</text><text x="569.5" y="113.3" font-size="7.6" font-weight="bold" fill="#eeeeee">APSP SMOK</text><text x="530" y="121.9" font-size="7.6" font-weight="bold" fill="#eeeeee">UNWP EO HRDP SDEW</text><text x="530" y="130.5" font-size="7.6" font-weight="bold" fill="#eeeeee">RU PR USS RO DU GRN</text><rect x="527" y="136.6" width="96" height="12.1" rx="4.5" fill="#0e0d10" opacity="0.86"/><circle cx="533.5" cy="142.4" r="3.3" fill="#9b59d0"/><path d="M532 141.6l1.5 2l1.5-2" stroke="#fff" stroke-width="1" fill="none"/><text x="539.5" y="145.3" font-size="7.4" fill="#c070d0" opacity="0.7">AG</text><text x="559.4" y="145.5" font-size="7.6" font-weight="bold" fill="#eeeeee">KEP UE OWEW</text><rect x="527" y="153" width="58" height="12.1" rx="4.5" fill="#0e0d10" opacity="0.86"/><rect x="530.5" y="156.3" width="5" height="5" rx="1.5" fill="#e07070"/><rect x="537" y="156.3" width="5" height="5" rx="1.5" fill="#30c090"/><rect x="543.5" y="156.3" width="5" height="5" rx="1.5" fill="#8a30d0"/><text x="550.5" y="161.7" font-size="7.4" fill="#7aa8ff" opacity="0.7">CG</text><text x="569.6" y="161.9" font-size="7.6" font-weight="bold" fill="#eeeeee">D</text><rect x="527" y="169" width="106" height="20.7" rx="4.5" fill="#0e0d10" opacity="0.86"/><circle cx="533.5" cy="174.8" r="3.3" fill="#8a3cf0"/><path d="M532 174l1.5 2l1.5-2" stroke="#fff" stroke-width="1" fill="none"/><circle cx="541" cy="174.8" r="2.3" fill="#e8c840"/><text x="545.5" y="177.7" font-size="7.4" fill="#8fa0ff" opacity="0.7">SS</text><text x="567" y="177.9" font-size="7.6" font-weight="bold" fill="#eeeeee">MMN HSS WD</text><text x="530" y="186.5" font-size="7.6" font-weight="bold" fill="#eeeeee">BNMS GMH O</text></svg></div><div class="cell" style="left:640px;top:720px"><svg width="635" height="355" viewBox="0 0 635 355"><rect x="0.0" y="0.0" width="635.0" height="355.0" fill="#3a3a3a" /><rect x="0.0" y="0.0" width="635.0" height="7.5" fill="#3e3e3e" /><rect x="0.0" y="7.5" width="635.0" height="8.5" fill="#4a4a4a" /><rect x="0.0" y="16.0" width="635.0" height="8.0" fill="#3a3a3a" /><rect x="83.0" y="16.0" width="408.0" height="8.0" fill="#4f4f4f" /><use href="#menu"/><rect x="0.0" y="24.0" width="16.0" height="331.0" fill="#3b3b3b" /><use href="#tools"/><use href="#lpanel"/><rect x="83.0" y="24.0" width="408.0" height="327.0" fill="#2e2e2e" /><rect x="83.0" y="24.0" width="408.0" height="7.5" fill="#333333" /><rect x="83.0" y="350.5" width="408.0" height="4.5" fill="#3a3a3a" /><path d="M86 351.5h4.4v2.2h-4.4zM92 351.5h6.1v2.2h-6.1zM99.3 351.5h8.7v2.2h-8.7zM109.9 351.5h7.2v2.2h-7.2zM119.3 351.5h3.5v2.2h-3.5zM124.7 351.5h8.1v2.2h-8.1zM134.7 351.5h6.4v2.2h-6.4zM143 351.5h3.7v2.2h-3.7zM148.3 351.5h7.3v2.2h-7.3zM157.7 351.5h6.9v2.2h-6.9zM166.4 351.5h5v2.2h-5zM173 351.5h4.4v2.2h-4.4zM179.6 351.5h6.4v2.2h-6.4z" fill="#999" opacity="0.35"/><rect x="83.0" y="24.0" width="408.0" height="7.5" fill="#333" /><rect x="83.0" y="31.5" width="102.6" height="319.0" fill="url(#chk)" /><rect x="185.6" y="31.5" width="5.0" height="319.0" fill="#3a3a3a" /><rect x="187.1" y="40.0" width="2.0" height="300.0" fill="#4a4a4a" /><rect x="190.6" y="31.5" width="298.3" height="319.0" fill="#ffffff" /><rect x="488.9" y="24.0" width="2.0" height="327.0" fill="#333" /><rect x="84.0" y="25.0" width="42.0" height="6.0" fill="#3a3a3a" /><rect x="191.0" y="25.0" width="30.0" height="6.0" fill="#5a6282" /><rect x="225.0" y="25.0" width="30.0" height="6.0" fill="#3a3a3a" /><rect x="258.0" y="25.0" width="30.0" height="6.0" fill="#3a3a3a" /><rect x="190.6" y="31.5" width="298.3" height="319.0" fill="#f7f7f7" /><ellipse cx="134.6" cy="155.6" rx="50" ry="61" fill="#fde8e0"/><path d="M98,140 C106,132 118,132 124,138 M146,138 C152,132 164,132 172,140" stroke="#6a5050" stroke-width="0.8" fill="none"/><path d="M96,168 C102,156 122,156 128,164 M142,164 C150,156 168,156 174,168" stroke="#1e1a1e" stroke-width="2.2" fill="none"/><ellipse cx="113" cy="170" rx="10" ry="8" fill="#fff"/><circle cx="114" cy="170" r="7" fill="#3ab8d0"/><circle cx="114" cy="168" r="3" fill="#174a6a"/><ellipse cx="158" cy="170" rx="10" ry="8" fill="#fff"/><circle cx="157" cy="170" r="7" fill="#3ab8d0"/><circle cx="157" cy="168" r="3" fill="#174a6a"/><ellipse cx="108" cy="186" rx="12" ry="6" fill="#f6b8b0" opacity="0.7"/><ellipse cx="162" cy="186" rx="12" ry="6" fill="#f6b8b0" opacity="0.7"/><path d="M124,194 C130,190 142,190 148,194 C146,205 140,210 136,210 C130,210 126,204 124,194 Z" fill="#d04a58"/><clipPath id="cp4"><rect x="190.6" y="31.5" width="298.3" height="319"/></clipPath><g clip-path="url(#cp4)"><g transform="translate(327,122.5) scale(1.85) translate(-281,-116.5)"><use href="#girl"/><use href="#sketch"/></g></g><rect x="491.0" y="24.0" width="86.0" height="331.0" fill="#383838" /><rect x="491.0" y="24.0" width="86.0" height="6.0" fill="#333" /><rect x="493.0" y="30.5" width="82.0" height="21.0" fill="#3c3c3c" /><rect x="530.0" y="32.0" width="14.0" height="3.0" fill="#dedede" opacity="0.8"/><path d="M495 38.5h3.6v3h-3.6zM500.3 38.5h5.3v3h-5.3zM506.8 38.5h3.2v3h-3.2zM512 38.5h6.6v3h-6.6zM520.1 38.5h3.3v3h-3.3zM525.3 38.5h8.2v3h-8.2zM535.1 38.5h3.9v3h-3.9zM540.7 38.5h4.9v3h-4.9zM547.6 38.5h6.3v3h-6.3z" fill="#999" opacity="0.45"/><path d="M495 45.5h8.8v3h-8.8zM505.1 45.5h7.1v3h-7.1zM514.2 45.5h3.5v3h-3.5zM519.4 45.5h3.5v3h-3.5zM524.6 45.5h4.2v3h-4.2zM530.2 45.5h8.6v3h-8.6zM540.9 45.5h3.2v3h-3.2zM545.7 45.5h5.5v3h-5.5zM553.2 45.5h1.8v3h-1.8z" fill="#999" opacity="0.45"/><rect x="496.0" y="56.5" width="3.0" height="2.0" fill="#888" opacity="0.6"/><rect x="518.0" y="54.0" width="5.0" height="10.0" fill="#e4e4e4" /><path d="M526 55h5.4v2.4h-5.4zM532.7 55h3.5v2.4h-3.5zM537.6 55h6.4v2.4h-6.4z" fill="#c8c8c8" opacity="0.45"/><path d="M526 60h4.4v2.4h-4.4zM532.6 60h7.3v2.4h-7.3z" fill="#c8c8c8" opacity="0.45"/><rect x="505.0" y="65.9" width="50.0" height="12.4" fill="#4e5670" /><rect x="496.0" y="69.9" width="3.0" height="2.0" fill="#888" opacity="0.6"/><rect x="518.0" y="67.4" width="5.0" height="10.0" fill="#e4e4e4" /><path d="M526 68.4h5.7v2.4h-5.7zM533.4 68.4h4.9v2.4h-4.9zM540.2 68.4h3.8v2.4h-3.8z" fill="#c8c8c8" opacity="0.45"/><path d="M526 73.4h6.3v2.4h-6.3zM534.5 73.4h5.5v2.4h-5.5z" fill="#c8c8c8" opacity="0.45"/><rect x="496.0" y="83.3" width="3.0" height="2.0" fill="#888" opacity="0.6"/><rect x="518.0" y="80.8" width="5.0" height="10.0" fill="#e4e4e4" /><path d="M526 81.8h6.9v2.4h-6.9zM534.4 81.8h8.2v2.4h-8.2z" fill="#c8c8c8" opacity="0.45"/><path d="M526 86.8h7.8v2.4h-7.8zM535.7 86.8h4.3v2.4h-4.3z" fill="#c8c8c8" opacity="0.45"/><rect x="496.0" y="96.7" width="3.0" height="2.0" fill="#888" opacity="0.6"/><rect x="510.0" y="94.2" width="5.0" height="10.0" fill="#e4e4e4" /><path d="M518 95.2h7.3v2.4h-7.3zM526.7 95.2h5.8v2.4h-5.8zM533.8 95.2h2.2v2.4h-2.2z" fill="#c8c8c8" opacity="0.45"/><path d="M518 100.2h6.1v2.4h-6.1zM525.6 100.2h6.4v2.4h-6.4z" fill="#c8c8c8" opacity="0.45"/><rect x="496.0" y="110.1" width="3.0" height="2.0" fill="#888" opacity="0.6"/><rect x="510.0" y="107.6" width="5.0" height="10.0" fill="#e4e4e4" /><path d="M518 108.6h6.5v2.4h-6.5zM525.8 108.6h4.4v2.4h-4.4zM532.2 108.6h3.8v2.4h-3.8z" fill="#c8c8c8" opacity="0.45"/><path d="M518 113.6h8.7v2.4h-8.7zM528.9 113.6h3.1v2.4h-3.1z" fill="#c8c8c8" opacity="0.45"/><rect x="496.0" y="123.5" width="3.0" height="2.0" fill="#888" opacity="0.6"/><rect x="518.0" y="121.0" width="5.0" height="10.0" fill="#e4e4e4" /><path d="M526 122h6.7v2.4h-6.7zM534.7 122h7.4v2.4h-7.4z" fill="#c8c8c8" opacity="0.45"/><path d="M526 127h5.9v2.4h-5.9zM533.1 127h5.5v2.4h-5.5z" fill="#c8c8c8" opacity="0.45"/><rect x="496.0" y="136.9" width="3.0" height="2.0" fill="#888" opacity="0.6"/><rect x="510.0" y="134.4" width="5.0" height="10.0" fill="#e4e4e4" /><path d="M518 135.4h4.5v2.4h-4.5zM524 135.4h7.1v2.4h-7.1zM533 135.4h3v2.4h-3z" fill="#c8c8c8" opacity="0.45"/><path d="M518 140.4h4.1v2.4h-4.1zM524.2 140.4h7.6v2.4h-7.6z" fill="#c8c8c8" opacity="0.45"/><rect x="496.0" y="150.3" width="3.0" height="2.0" fill="#888" opacity="0.6"/><rect x="506.0" y="147.8" width="5.0" height="10.0" fill="#e4e4e4" /><path d="M514 148.8h7.8v2.4h-7.8zM523.9 148.8h3.4v2.4h-3.4zM528.8 148.8h3.2v2.4h-3.2z" fill="#c8c8c8" opacity="0.45"/><path d="M514 153.8h4.9v2.4h-4.9zM520.9 153.8h7.1v2.4h-7.1z" fill="#c8c8c8" opacity="0.45"/><rect x="496.0" y="163.7" width="3.0" height="2.0" fill="#888" opacity="0.6"/><rect x="518.0" y="161.2" width="5.0" height="10.0" fill="#e4e4e4" /><path d="M526 162.2h5.2v2.4h-5.2zM532.5 162.2h6.4v2.4h-6.4zM540.8 162.2h3.2v2.4h-3.2z" fill="#c8c8c8" opacity="0.45"/><path d="M526 167.2h8.6v2.4h-8.6zM536.4 167.2h3.6v2.4h-3.6z" fill="#c8c8c8" opacity="0.45"/><rect x="568.0" y="24.0" width="67.0" height="331.0" fill="#383838" /><rect x="569.0" y="27.0" width="9.0" height="8.0" fill="#474747" /><rect x="569.0" y="38.5" width="9.0" height="8.0" fill="#474747" /><rect x="569.0" y="50.0" width="9.0" height="8.0" fill="#474747" /><rect x="569.0" y="61.5" width="9.0" height="8.0" fill="#474747" /><rect x="569.0" y="73.0" width="9.0" height="8.0" fill="#474747" /><rect x="569.0" y="84.5" width="9.0" height="8.0" fill="#474747" /><rect x="569.0" y="96.0" width="9.0" height="8.0" fill="#474747" /><rect x="569.0" y="107.5" width="9.0" height="8.0" fill="#474747" /><rect x="580.0" y="24.0" width="55.0" height="5.0" fill="#333" /><rect x="582.0" y="30.0" width="51.0" height="50.0" fill="#fff" /><rect x="580.0" y="81.0" width="55.0" height="15.0" fill="#3a3a3a" /><path d="M583 83h3.6v2.5h-3.6zM588 83h5.9v2.5h-5.9zM595.2 83h3.9v2.5h-3.9zM600.9 83h5v2.5h-5zM607.8 83h6.5v2.5h-6.5zM615.7 83h6.7v2.5h-6.7zM624 83h7v2.5h-7z" fill="#aaa" opacity="0.4"/><path d="M583 89h6.7v2.5h-6.7zM591.7 89h7.4v2.5h-7.4zM600.4 89h3.4v2.5h-3.4zM606 89h6.7v2.5h-6.7zM614.6 89h5v2.5h-5zM621.2 89h8v2.5h-8z" fill="#aaa" opacity="0.4"/><rect x="580.0" y="100.0" width="52.0" height="6.5" fill="#3e3e3e" /><path d="M582 102.2h3.9v2.6h-3.9zM587.5 102.2h6.5v2.6h-6.5z" fill="#d0d0d0" opacity="0.55"/><rect x="580.0" y="107.2" width="52.0" height="6.5" fill="#3e3e3e" /><path d="M582 109.5h8v2.6h-8zM591.3 109.5h3.6v2.6h-3.6z" fill="#d0d0d0" opacity="0.55"/><rect x="580.0" y="114.5" width="52.0" height="6.5" fill="#3e3e3e" /><path d="M582 116.7h5.8v2.6h-5.8zM589.1 116.7h6.6v2.6h-6.6z" fill="#d0d0d0" opacity="0.55"/><rect x="580.0" y="121.8" width="52.0" height="6.5" fill="#3e3e3e" /><path d="M582 124h7v2.6h-7zM591 124h3.3v2.6h-3.3z" fill="#d0d0d0" opacity="0.55"/><rect x="580.0" y="129.0" width="52.0" height="6.5" fill="#3e3e3e" /><path d="M582 131.2h3.7v2.6h-3.7zM587.6 131.2h5.4v2.6h-5.4zM594.3 131.2h1.7v2.6h-1.7z" fill="#d0d0d0" opacity="0.55"/><rect x="580.0" y="136.2" width="52.0" height="6.5" fill="#3e3e3e" /><path d="M582 138.4h6.6v2.6h-6.6zM590.2 138.4h5.8v2.6h-5.8z" fill="#d0d0d0" opacity="0.55"/><rect x="580.0" y="143.5" width="52.0" height="6.5" fill="#3e3e3e" /><path d="M582 145.7h8.1v2.6h-8.1zM591.4 145.7h4.6v2.6h-4.6z" fill="#d0d0d0" opacity="0.55"/><rect x="580.0" y="150.8" width="52.0" height="6.5" fill="#3e3e3e" /><path d="M582 152.9h6.4v2.6h-6.4zM590 152.9h6v2.6h-6z" fill="#d0d0d0" opacity="0.55"/><rect x="580.0" y="158.0" width="52.0" height="6.5" fill="#3e3e3e" /><path d="M582 160.2h8v2.6h-8zM591.3 160.2h6.2v2.6h-6.2zM599.2 160.2h3.5v2.6h-3.5zM604.7 160.2h4v2.6h-4zM610.6 160.2h6.3v2.6h-6.3zM618.4 160.2h5.1v2.6h-5.1zM625.6 160.2h2.4v2.6h-2.4z" fill="#d0d0d0" opacity="0.55"/><rect x="580.0" y="165.2" width="52.0" height="6.5" fill="#3e3e3e" /><path d="M582 167.4h5.7v2.6h-5.7zM589.4 167.4h5.6v2.6h-5.6z" fill="#d0d0d0" opacity="0.55"/><rect x="580.0" y="172.5" width="52.0" height="6.5" fill="#3e3e3e" /><path d="M582 174.7h9v2.6h-9zM592.5 174.7h3.5v2.6h-3.5z" fill="#d0d0d0" opacity="0.55"/><rect x="580.0" y="179.8" width="52.0" height="6.5" fill="#3e3e3e" /><path d="M582 181.9h8.7v2.6h-8.7zM592.6 181.9h3.4v2.6h-3.4z" fill="#d0d0d0" opacity="0.55"/><rect x="580.0" y="187.0" width="52.0" height="6.5" fill="#3e3e3e" /><path d="M582 189.2h6.8v2.6h-6.8zM590.1 189.2h5.9v2.6h-5.9z" fill="#d0d0d0" opacity="0.55"/><rect x="580.0" y="194.2" width="52.0" height="6.5" fill="#3e3e3e" /><path d="M582 196.4h4.7v2.6h-4.7zM588 196.4h5.2v2.6h-5.2zM594.9 196.4h1.1v2.6h-1.1z" fill="#d0d0d0" opacity="0.55"/><rect x="580.0" y="201.5" width="52.0" height="6.5" fill="#3e3e3e" /><path d="M582 203.7h5.7v2.6h-5.7zM589.1 203.7h6.9v2.6h-6.9z" fill="#d0d0d0" opacity="0.55"/><rect x="580.0" y="208.8" width="52.0" height="6.5" fill="#3e3e3e" /><path d="M582 210.9h7.8v2.6h-7.8zM592 210.9h4v2.6h-4z" fill="#d0d0d0" opacity="0.55"/><rect x="580.0" y="216.0" width="52.0" height="6.5" fill="#3e3e3e" /><path d="M582 218.2h7.1v2.6h-7.1zM590.4 218.2h4.1v2.6h-4.1z" fill="#d0d0d0" opacity="0.55"/><rect x="580.0" y="223.2" width="52.0" height="6.5" fill="#3e3e3e" /><path d="M582 225.4h3v2.6h-3zM587.1 225.4h7.9v2.6h-7.9z" fill="#d0d0d0" opacity="0.55"/><rect x="580.0" y="230.5" width="52.0" height="6.5" fill="#3e3e3e" /><path d="M582 232.7h8.9v2.6h-8.9zM592.6 232.7h3.4v2.6h-3.4z" fill="#d0d0d0" opacity="0.55"/><rect x="580.0" y="237.8" width="52.0" height="6.5" fill="#3e3e3e" /><path d="M582 239.9h6.3v2.6h-6.3zM590.1 239.9h5.9v2.6h-5.9z" fill="#d0d0d0" opacity="0.55"/><rect x="580.0" y="245.0" width="52.0" height="6.5" fill="#3e3e3e" /><path d="M582 247.2h6.5v2.6h-6.5zM590.6 247.2h5.1v2.6h-5.1z" fill="#d0d0d0" opacity="0.55"/><rect x="580.0" y="252.2" width="52.0" height="6.5" fill="#3e3e3e" /><path d="M582 254.4h3.8v2.6h-3.8zM587.6 254.4h8.5v2.6h-8.5zM597.4 254.4h6.1v2.6h-6.1zM605.5 254.4h7.6v2.6h-7.6zM615.2 254.4h5.5v2.6h-5.5zM622.1 254.4h4.2v2.6h-4.2z" fill="#d0d0d0" opacity="0.55"/><rect x="580.0" y="259.5" width="52.0" height="6.5" fill="#3e3e3e" /><path d="M582 261.7h4.2v2.6h-4.2zM587.9 261.7h6.2v2.6h-6.2z" fill="#d0d0d0" opacity="0.55"/><rect x="580.0" y="266.8" width="52.0" height="6.5" fill="#3e3e3e" /><path d="M582 268.9h4.7v2.6h-4.7zM588.2 268.9h6.7v2.6h-6.7z" fill="#d0d0d0" opacity="0.55"/><rect x="580.0" y="274.0" width="52.0" height="6.5" fill="#3e3e3e" /><path d="M582 276.2h4.2v2.6h-4.2zM587.5 276.2h4.4v2.6h-4.4zM594 276.2h2v2.6h-2z" fill="#d0d0d0" opacity="0.55"/><rect x="580.0" y="281.2" width="52.0" height="6.5" fill="#3e3e3e" /><path d="M582 283.4h6.9v2.6h-6.9zM590.4 283.4h5.6v2.6h-5.6z" fill="#d0d0d0" opacity="0.55"/><rect x="580.0" y="288.5" width="52.0" height="6.5" fill="#3e3e3e" /><path d="M582 290.7h4.7v2.6h-4.7zM588.3 290.7h6.9v2.6h-6.9z" fill="#d0d0d0" opacity="0.55"/><rect x="580.0" y="295.8" width="52.0" height="6.5" fill="#3e3e3e" /><path d="M582 297.9h6.9v2.6h-6.9zM590.4 297.9h5.6v2.6h-5.6z" fill="#d0d0d0" opacity="0.55"/><rect x="580.0" y="303.0" width="52.0" height="6.5" fill="#3e3e3e" /><path d="M582 305.2h7.6v2.6h-7.6zM591.3 305.2h4.7v2.6h-4.7z" fill="#d0d0d0" opacity="0.55"/><rect x="580.0" y="310.2" width="52.0" height="6.5" fill="#3e3e3e" /><path d="M582 312.4h6.3v2.6h-6.3zM589.6 312.4h6.4v2.6h-6.4z" fill="#d0d0d0" opacity="0.55"/><rect x="580.0" y="317.5" width="52.0" height="6.5" fill="#3e3e3e" /><path d="M582 319.7h4v2.6h-4zM587.8 319.7h4.3v2.6h-4.3zM593.5 319.7h2.5v2.6h-2.5z" fill="#d0d0d0" opacity="0.55"/><rect x="580.0" y="324.8" width="52.0" height="6.5" fill="#3e3e3e" /><path d="M582 326.9h4.8v2.6h-4.8zM588.5 326.9h4.4v2.6h-4.4zM594.4 326.9h5.3v2.6h-5.3zM601.5 326.9h4.8v2.6h-4.8zM608 326.9h4.7v2.6h-4.7zM614.5 326.9h4.5v2.6h-4.5zM620.9 326.9h5.6v2.6h-5.6z" fill="#d0d0d0" opacity="0.55"/><rect x="580.0" y="332.0" width="52.0" height="6.5" fill="#3e3e3e" /><path d="M582 334.2h6.6v2.6h-6.6zM590.3 334.2h5.2v2.6h-5.2z" fill="#d0d0d0" opacity="0.55"/><rect x="580.0" y="339.2" width="52.0" height="6.5" fill="#3e3e3e" /><path d="M582 341.4h5.9v2.6h-5.9zM589.8 341.4h3.1v2.6h-3.1zM594.6 341.4h1.4v2.6h-1.4z" fill="#d0d0d0" opacity="0.55"/><rect x="580.0" y="346.5" width="52.0" height="6.5" fill="#3e3e3e" /><path d="M582 348.7h8v2.6h-8zM592.1 348.7h3.9v2.6h-3.9z" fill="#d0d0d0" opacity="0.55"/><rect x="581.0" y="350.0" width="52.0" height="5.0" fill="#5a6282" /></svg><div class="wheel" style="left:17.1px;top:36.2px;"></div><div class="sv" style="left:31.8px;top:51.0px;background:linear-gradient(to bottom,rgba(0,0,0,0),#000),linear-gradient(to right,#fff,#8a20e0);"></div><svg width="635" height="355" viewBox="0 0 635 355"><rect x="589.0" y="30.0" width="38.0" height="32.0" fill="#f4f4f4" /><rect x="592.0" y="33.0" width="26.0" height="26.0" fill="none" stroke="#c05050" stroke-width="0.5"/><rect x="598.0" y="36.0" width="12.0" height="20.0" fill="#c8b8a8" opacity="0.6"/><rect x="527" y="39" width="101" height="20.7" rx="4.5" fill="#0e0d10" opacity="0.86"/><rect x="530.5" y="42.3" width="5" height="5" rx="1.5" fill="#e07070"/><rect x="537" y="42.3" width="5" height="5" rx="1.5" fill="#30c090"/><rect x="543.5" y="42.3" width="5" height="5" rx="1.5" fill="#8a30d0"/><text x="550.5" y="47.7" font-size="7.4" fill="#8fa0ff" opacity="0.7">WR</text><text x="573.3" y="47.9" font-size="7.6" font-weight="bold" fill="#eeeeee">RR MNW BD</text><text x="530" y="56.5" font-size="7.6" font-weight="bold" fill="#eeeeee">DPM CKA SHAG DC OR</text><rect x="527" y="63" width="106" height="20.7" rx="4.5" fill="#0e0d10" opacity="0.86"/><rect x="530.5" y="66.3" width="5" height="5" rx="1.5" fill="#e07070"/><rect x="537" y="66.3" width="5" height="5" rx="1.5" fill="#30c090"/><rect x="543.5" y="66.3" width="5" height="5" rx="1.5" fill="#8a30d0"/><text x="550.5" y="71.7" font-size="7.4" fill="#c070d0" opacity="0.7">U</text><text x="563.4" y="71.9" font-size="7.6" font-weight="bold" fill="#eeeeee">ROOC MBBA GM</text><text x="530" y="80.5" font-size="7.6" font-weight="bold" fill="#eeeeee">CAB KW HP EAG RCK W</text><rect x="527" y="88" width="106" height="20.7" rx="4.5" fill="#0e0d10" opacity="0.86"/><circle cx="533.5" cy="93.8" r="3.3" fill="#e05a8a"/><path d="M532 93l1.5 2l1.5-2" stroke="#fff" stroke-width="1" fill="none"/><circle cx="541" cy="93.8" r="2.3" fill="#e8c840"/><text x="545.5" y="96.7" font-size="7.4" fill="#7aa8ff" opacity="0.7">G</text><text x="561" y="96.9" font-size="7.6" font-weight="bold" fill="#eeeeee">MANC UB PRRH</text><text x="530" y="105.5" font-size="7.6" font-weight="bold" fill="#eeeeee">GP CSC</text><rect x="527" y="112" width="106" height="20.7" rx="4.5" fill="#0e0d10" opacity="0.86"/><circle cx="533.5" cy="117.8" r="3.3" fill="#8a3cf0"/><path d="M532 117l1.5 2l1.5-2" stroke="#fff" stroke-width="1" fill="none"/><circle cx="541" cy="117.8" r="2.3" fill="#e8c840"/><text x="545.5" y="120.7" font-size="7.4" fill="#8fa0ff" opacity="0.7">AUG</text><text x="572.5" y="120.9" font-size="7.6" font-weight="bold" fill="#eeeeee">MPUO MG RN</text><text x="530" y="129.5" font-size="7.6" font-weight="bold" fill="#eeeeee">BBH RPU KU</text><rect x="527" y="136.6" width="85" height="12.1" rx="4.5" fill="#0e0d10" opacity="0.86"/><circle cx="533.5" cy="142.4" r="3.3" fill="#9b59d0"/><path d="M532 141.6l1.5 2l1.5-2" stroke="#fff" stroke-width="1" fill="none"/><circle cx="541" cy="142.4" r="2.3" fill="#e8c840"/><text x="545.5" y="145.3" font-size="7.4" fill="#c070d0" opacity="0.7">U</text><text x="558.3" y="145.5" font-size="7.6" font-weight="bold" fill="#eeeeee">NGRD MEM</text><rect x="527" y="153" width="106" height="20.7" rx="4.5" fill="#0e0d10" opacity="0.86"/><rect x="530.5" y="156.3" width="5" height="5" rx="1.5" fill="#e07070"/><rect x="537" y="156.3" width="5" height="5" rx="1.5" fill="#30c090"/><rect x="543.5" y="156.3" width="5" height="5" rx="1.5" fill="#8a30d0"/><text x="550.5" y="161.7" font-size="7.4" fill="#7aa8ff" opacity="0.7">M</text><text x="566.3" y="161.9" font-size="7.6" font-weight="bold" fill="#eeeeee">ERA PCO HKS</text><text x="530" y="170.5" font-size="7.6" font-weight="bold" fill="#eeeeee">DCSA NWM BSNA ENC</text><rect x="527" y="177.4" width="80" height="12.1" rx="4.5" fill="#0e0d10" opacity="0.86"/><circle cx="533.5" cy="183.2" r="3.3" fill="#8a3cf0"/><path d="M532 182.4l1.5 2l1.5-2" stroke="#fff" stroke-width="1" fill="none"/><text x="539.5" y="186.1" font-size="7.4" fill="#8fa0ff" opacity="0.7">AD</text><text x="559.7" y="186.3" font-size="7.6" font-weight="bold" fill="#eeeeee">SGMC NB</text></svg></div><div class="cell" style="left:1280px;top:720px"><svg width="635" height="355" viewBox="0 0 635 355"><rect x="0.0" y="0.0" width="635.0" height="355.0" fill="#3a3a3a" /><rect x="0.0" y="0.0" width="635.0" height="7.5" fill="#3e3e3e" /><rect x="0.0" y="7.5" width="635.0" height="8.5" fill="#4a4a4a" /><rect x="0.0" y="16.0" width="635.0" height="8.0" fill="#3a3a3a" /><rect x="83.0" y="16.0" width="408.0" height="8.0" fill="#4f4f4f" /><use href="#menu"/><rect x="0.0" y="24.0" width="16.0" height="331.0" fill="#3b3b3b" /><use href="#tools"/><use href="#lpanel"/><rect x="83.0" y="24.0" width="408.0" height="327.0" fill="#2e2e2e" /><rect x="83.0" y="24.0" width="408.0" height="7.5" fill="#333333" /><rect x="83.0" y="350.5" width="408.0" height="4.5" fill="#3a3a3a" /><path d="M86 351.5h4.4v2.2h-4.4zM92 351.5h6.1v2.2h-6.1zM99.3 351.5h8.7v2.2h-8.7zM109.9 351.5h7.2v2.2h-7.2zM119.3 351.5h3.5v2.2h-3.5zM124.7 351.5h8.1v2.2h-8.1zM134.7 351.5h6.4v2.2h-6.4zM143 351.5h3.7v2.2h-3.7zM148.3 351.5h7.3v2.2h-7.3zM157.7 351.5h6.9v2.2h-6.9zM166.4 351.5h5v2.2h-5zM173 351.5h4.4v2.2h-4.4zM179.6 351.5h6.4v2.2h-6.4z" fill="#999" opacity="0.35"/><rect x="83.0" y="24.0" width="408.0" height="7.5" fill="#333" /><rect x="83.0" y="53.2" width="89.4" height="297.3" fill="url(#chk)" /><rect x="172.4" y="31.5" width="5.6" height="319.0" fill="#3a3a3a" /><rect x="173.9" y="40.0" width="2.0" height="300.0" fill="#4a4a4a" /><rect x="178.0" y="31.5" width="310.9" height="319.0" fill="#ffffff" /><rect x="488.9" y="24.0" width="2.0" height="327.0" fill="#333" /><rect x="84.0" y="25.0" width="42.0" height="6.0" fill="#3a3a3a" /><rect x="179.0" y="25.0" width="28.0" height="6.0" fill="#3a3a3a" /><rect x="212.0" y="25.0" width="30.0" height="6.0" fill="#5a6282" /><rect x="245.0" y="25.0" width="30.0" height="6.0" fill="#3a3a3a" /><rect x="83.0" y="31.5" width="89.4" height="21.7" fill="#2e2e2e" /><path d="M86,150 C84,115 100,96 124,96 C150,96 162,118 160,150 L158,190 C140,195 100,195 88,188 Z" fill="#ece5e2"/><path d="M92,150 C96,172 110,190 124,192 C140,190 152,172 155,150 Z" fill="#fbe6df"/><path d="M90,120 C100,110 120,104 150,112 L152,150 L92,150 Z" fill="#e8dfdc"/><path d="M92,156 C96,150 106,150 110,156 M130,156 C136,150 146,150 150,156" stroke="#2a2020" stroke-width="1.8" fill="none"/><circle cx="101" cy="161" r="5.5" fill="#3ab8d8"/><circle cx="138" cy="161" r="5.5" fill="#3ab8d8"/><ellipse cx="98" cy="174" rx="8" ry="4" fill="#f4b8b0" opacity="0.7"/><ellipse cx="142" cy="174" rx="8" ry="4" fill="#f4b8b0" opacity="0.7"/><g fill="none" stroke="#d2d2d2" stroke-width="0.8"><path d="M178,93 C200,85 225,88 240,95 M182,130 C200,115 230,105 260,110 M190,150 C215,140 240,145 265,160 M178,205 C210,200 240,212 262,225"/><path d="M230,35 C240,60 245,80 262,95 M240,50 C260,45 285,50 300,60 M200,245 C230,235 260,240 280,250 M178,290 C220,275 260,270 300,280"/><path d="M186,330 C230,320 270,300 310,280 C340,270 360,260 380,250 M230,172 l40,-16 M248,210 l40,-16 M188,178 a5,5 0 1 0 0.1,0 M200,230 a5,5 0 1 0 0.1,0"/><path d="M250,145 C262,160 270,180 280,200 M262,150 l15,60 M278,140 C290,150 300,165 305,180 M300,60 C330,50 350,48 380,55"/><path d="M290,300 C320,310 340,305 360,300 M300,290 C320,296 340,296 360,292 M330,150 C340,170 345,190 350,200 M340,110 C360,100 390,90 430,92"/><path d="M370,150 C390,170 400,190 410,195 M380,200 C400,210 420,220 440,225 M395,235 C420,225 450,200 480,180"/></g><g fill="none" stroke="#6a6a6a" stroke-width="0.9"><path d="M311,111 C330,80 380,50 430,45 C460,42 480,45 489,50"/><path d="M489,205 C470,235 420,255 371.5,281"/><path d="M272,93 C274,108 278,116 284,120 M284,120 C286,105 292,96 304,88 M290,100 C295,95 300,92 312,90 M304,104 C306,96 310,90 320,84"/><path d="M342.7,202 C348,212 358,220 371.5,223.5 M314,214.4 C330,225 348,235 365.4,241.6 M315.5,235.6 C330,242 350,248 371.5,250.7 M320,253.7 C340,256 360,258 377.5,259.7 M371,281 C372,270 374,262 378,258"/><path d="M379,33 L381,55.7 L386,55.7 L384,33 Z M390,33 L392,55.7 L397,55.7 L395,33 Z"/></g><rect x="491.0" y="24.0" width="86.0" height="331.0" fill="#383838" /><rect x="491.0" y="24.0" width="86.0" height="6.0" fill="#333" /><rect x="493.0" y="30.5" width="82.0" height="21.0" fill="#3c3c3c" /><rect x="530.0" y="32.0" width="14.0" height="3.0" fill="#dedede" opacity="0.8"/><path d="M495 38.5h3.6v3h-3.6zM500.3 38.5h5.3v3h-5.3zM506.8 38.5h3.2v3h-3.2zM512 38.5h6.6v3h-6.6zM520.1 38.5h3.3v3h-3.3zM525.3 38.5h8.2v3h-8.2zM535.1 38.5h3.9v3h-3.9zM540.7 38.5h4.9v3h-4.9zM547.6 38.5h6.3v3h-6.3z" fill="#999" opacity="0.45"/><path d="M495 45.5h8.8v3h-8.8zM505.1 45.5h7.1v3h-7.1zM514.2 45.5h3.5v3h-3.5zM519.4 45.5h3.5v3h-3.5zM524.6 45.5h4.2v3h-4.2zM530.2 45.5h8.6v3h-8.6zM540.9 45.5h3.2v3h-3.2zM545.7 45.5h5.5v3h-5.5zM553.2 45.5h1.8v3h-1.8z" fill="#999" opacity="0.45"/><rect x="496.0" y="56.5" width="3.0" height="2.0" fill="#888" opacity="0.6"/><rect x="518.0" y="54.0" width="5.0" height="10.0" fill="#e4e4e4" /><path d="M526 55h5.4v2.4h-5.4zM532.7 55h3.5v2.4h-3.5zM537.6 55h6.4v2.4h-6.4z" fill="#c8c8c8" opacity="0.45"/><path d="M526 60h4.4v2.4h-4.4zM532.6 60h7.3v2.4h-7.3z" fill="#c8c8c8" opacity="0.45"/><rect x="496.0" y="69.9" width="3.0" height="2.0" fill="#888" opacity="0.6"/><rect x="518.0" y="67.4" width="5.0" height="10.0" fill="#e4e4e4" /><path d="M526 68.4h5.7v2.4h-5.7zM533.4 68.4h4.9v2.4h-4.9zM540.2 68.4h3.8v2.4h-3.8z" fill="#c8c8c8" opacity="0.45"/><path d="M526 73.4h6.3v2.4h-6.3zM534.5 73.4h5.5v2.4h-5.5z" fill="#c8c8c8" opacity="0.45"/><rect x="496.0" y="83.3" width="3.0" height="2.0" fill="#888" opacity="0.6"/><rect x="518.0" y="80.8" width="5.0" height="10.0" fill="#e4e4e4" /><path d="M526 81.8h6.9v2.4h-6.9zM534.4 81.8h8.2v2.4h-8.2z" fill="#c8c8c8" opacity="0.45"/><path d="M526 86.8h7.8v2.4h-7.8zM535.7 86.8h4.3v2.4h-4.3z" fill="#c8c8c8" opacity="0.45"/><rect x="496.0" y="96.7" width="3.0" height="2.0" fill="#888" opacity="0.6"/><rect x="510.0" y="94.2" width="5.0" height="10.0" fill="#e4e4e4" /><path d="M518 95.2h7.3v2.4h-7.3zM526.7 95.2h5.8v2.4h-5.8zM533.8 95.2h2.2v2.4h-2.2z" fill="#c8c8c8" opacity="0.45"/><path d="M518 100.2h6.1v2.4h-6.1zM525.6 100.2h6.4v2.4h-6.4z" fill="#c8c8c8" opacity="0.45"/><rect x="496.0" y="110.1" width="3.0" height="2.0" fill="#888" opacity="0.6"/><rect x="510.0" y="107.6" width="5.0" height="10.0" fill="#e4e4e4" /><path d="M518 108.6h6.5v2.4h-6.5zM525.8 108.6h4.4v2.4h-4.4zM532.2 108.6h3.8v2.4h-3.8z" fill="#c8c8c8" opacity="0.45"/><path d="M518 113.6h8.7v2.4h-8.7zM528.9 113.6h3.1v2.4h-3.1z" fill="#c8c8c8" opacity="0.45"/><rect x="505.0" y="119.5" width="50.0" height="12.4" fill="#4e5670" /><rect x="496.0" y="123.5" width="3.0" height="2.0" fill="#888" opacity="0.6"/><rect x="518.0" y="121.0" width="5.0" height="10.0" fill="#e4e4e4" /><path d="M526 122h6.7v2.4h-6.7zM534.7 122h7.4v2.4h-7.4z" fill="#c8c8c8" opacity="0.45"/><path d="M526 127h5.9v2.4h-5.9zM533.1 127h5.5v2.4h-5.5z" fill="#c8c8c8" opacity="0.45"/><rect x="496.0" y="136.9" width="3.0" height="2.0" fill="#888" opacity="0.6"/><rect x="510.0" y="134.4" width="5.0" height="10.0" fill="#e4e4e4" /><path d="M518 135.4h4.5v2.4h-4.5zM524 135.4h7.1v2.4h-7.1zM533 135.4h3v2.4h-3z" fill="#c8c8c8" opacity="0.45"/><path d="M518 140.4h4.1v2.4h-4.1zM524.2 140.4h7.6v2.4h-7.6z" fill="#c8c8c8" opacity="0.45"/><rect x="496.0" y="150.3" width="3.0" height="2.0" fill="#888" opacity="0.6"/><rect x="506.0" y="147.8" width="5.0" height="10.0" fill="#e4e4e4" /><path d="M514 148.8h7.8v2.4h-7.8zM523.9 148.8h3.4v2.4h-3.4zM528.8 148.8h3.2v2.4h-3.2z" fill="#c8c8c8" opacity="0.45"/><path d="M514 153.8h4.9v2.4h-4.9zM520.9 153.8h7.1v2.4h-7.1z" fill="#c8c8c8" opacity="0.45"/><rect x="496.0" y="163.7" width="3.0" height="2.0" fill="#888" opacity="0.6"/><rect x="518.0" y="161.2" width="5.0" height="10.0" fill="#e4e4e4" /><path d="M526 162.2h5.2v2.4h-5.2zM532.5 162.2h6.4v2.4h-6.4zM540.8 162.2h3.2v2.4h-3.2z" fill="#c8c8c8" opacity="0.45"/><path d="M526 167.2h8.6v2.4h-8.6zM536.4 167.2h3.6v2.4h-3.6z" fill="#c8c8c8" opacity="0.45"/><rect x="496.0" y="177.1" width="3.0" height="2.0" fill="#888" opacity="0.6"/><rect x="514.0" y="174.6" width="5.0" height="10.0" fill="#e4e4e4" /><path d="M522 175.6h6.9v2.4h-6.9zM530.7 175.6h4.3v2.4h-4.3zM536.9 175.6h3.1v2.4h-3.1z" fill="#c8c8c8" opacity="0.45"/><path d="M522 180.6h3.5v2.4h-3.5zM527.3 180.6h5.4v2.4h-5.4zM534.1 180.6h1.9v2.4h-1.9z" fill="#c8c8c8" opacity="0.45"/><rect x="496.0" y="190.5" width="3.0" height="2.0" fill="#888" opacity="0.6"/><rect x="510.0" y="188.0" width="5.0" height="10.0" fill="#e4e4e4" /><path d="M518 189h7.9v2.4h-7.9zM527.9 189h5.9v2.4h-5.9z" fill="#c8c8c8" opacity="0.45"/><path d="M518 194h4v2.4h-4zM524.1 194h5v2.4h-5zM530.9 194h1.1v2.4h-1.1z" fill="#c8c8c8" opacity="0.45"/><rect x="568.0" y="24.0" width="67.0" height="331.0" fill="#383838" /><rect x="569.0" y="27.0" width="9.0" height="8.0" fill="#474747" /><rect x="569.0" y="38.5" width="9.0" height="8.0" fill="#474747" /><rect x="569.0" y="50.0" width="9.0" height="8.0" fill="#474747" /><rect x="569.0" y="61.5" width="9.0" height="8.0" fill="#474747" /><rect x="569.0" y="73.0" width="9.0" height="8.0" fill="#474747" /><rect x="569.0" y="84.5" width="9.0" height="8.0" fill="#474747" /><rect x="569.0" y="96.0" width="9.0" height="8.0" fill="#474747" /><rect x="569.0" y="107.5" width="9.0" height="8.0" fill="#474747" /><rect x="580.0" y="24.0" width="55.0" height="5.0" fill="#333" /><rect x="582.0" y="30.0" width="51.0" height="50.0" fill="#fff" /><rect x="580.0" y="81.0" width="55.0" height="15.0" fill="#3a3a3a" /><path d="M583 83h3.6v2.5h-3.6zM588 83h5.9v2.5h-5.9zM595.2 83h3.9v2.5h-3.9zM600.9 83h5v2.5h-5zM607.8 83h6.5v2.5h-6.5zM615.7 83h6.7v2.5h-6.7zM624 83h7v2.5h-7z" fill="#aaa" opacity="0.4"/><path d="M583 89h6.7v2.5h-6.7zM591.7 89h7.4v2.5h-7.4zM600.4 89h3.4v2.5h-3.4zM606 89h6.7v2.5h-6.7zM614.6 89h5v2.5h-5zM621.2 89h8v2.5h-8z" fill="#aaa" opacity="0.4"/><rect x="580.0" y="100.0" width="52.0" height="6.5" fill="#3e3e3e" /><path d="M582 102.2h5.8v2.6h-5.8zM589.4 102.2h6.4v2.6h-6.4zM597.6 102.2h7.2v2.6h-7.2zM606.9 102.2h4.4v2.6h-4.4zM613.3 102.2h8.7v2.6h-8.7zM623.7 102.2h4.3v2.6h-4.3z" fill="#d0d0d0" opacity="0.55"/><rect x="580.0" y="107.2" width="52.0" height="6.5" fill="#3e3e3e" /><path d="M582 109.5h8v2.6h-8zM591.3 109.5h3.6v2.6h-3.6z" fill="#d0d0d0" opacity="0.55"/><rect x="580.0" y="114.5" width="52.0" height="6.5" fill="#3e3e3e" /><path d="M582 116.7h5.8v2.6h-5.8zM589.1 116.7h6.6v2.6h-6.6z" fill="#d0d0d0" opacity="0.55"/><rect x="580.0" y="121.8" width="52.0" height="6.5" fill="#3e3e3e" /><path d="M582 124h5.9v2.6h-5.9zM589.4 124h8.2v2.6h-8.2zM599.4 124h5.6v2.6h-5.6zM606.8 124h5.3v2.6h-5.3zM613.6 124h7.2v2.6h-7.2zM622.6 124h5.4v2.6h-5.4z" fill="#d0d0d0" opacity="0.55"/><rect x="580.0" y="129.0" width="52.0" height="6.5" fill="#3e3e3e" /><path d="M582 131.2h3.7v2.6h-3.7zM587.6 131.2h5.4v2.6h-5.4zM594.3 131.2h1.7v2.6h-1.7z" fill="#d0d0d0" opacity="0.55"/><rect x="580.0" y="136.2" width="52.0" height="6.5" fill="#3e3e3e" /><path d="M582 138.4h6.6v2.6h-6.6zM590.2 138.4h5.8v2.6h-5.8z" fill="#d0d0d0" opacity="0.55"/><rect x="580.0" y="143.5" width="52.0" height="6.5" fill="#3e3e3e" /><path d="M582 145.7h3.9v2.6h-3.9zM587.3 145.7h8v2.6h-8zM597.4 145.7h6.7v2.6h-6.7zM606.1 145.7h5.8v2.6h-5.8zM613.3 145.7h7v2.6h-7zM622.1 145.7h3.4v2.6h-3.4zM626.9 145.7h1.1v2.6h-1.1z" fill="#d0d0d0" opacity="0.55"/><rect x="580.0" y="150.8" width="52.0" height="6.5" fill="#3e3e3e" /><path d="M582 152.9h6.4v2.6h-6.4zM590 152.9h6v2.6h-6z" fill="#d0d0d0" opacity="0.55"/><rect x="580.0" y="158.0" width="52.0" height="6.5" fill="#3e3e3e" /><path d="M582 160.2h8v2.6h-8zM591.3 160.2h6.2v2.6h-6.2zM599.2 160.2h3.5v2.6h-3.5zM604.7 160.2h4v2.6h-4zM610.6 160.2h6.3v2.6h-6.3zM618.4 160.2h5.1v2.6h-5.1zM625.6 160.2h2.4v2.6h-2.4z" fill="#d0d0d0" opacity="0.55"/><rect x="580.0" y="165.2" width="52.0" height="6.5" fill="#3e3e3e" /><path d="M582 167.4h5.7v2.6h-5.7zM589.4 167.4h5.6v2.6h-5.6z" fill="#d0d0d0" opacity="0.55"/><rect x="580.0" y="172.5" width="52.0" height="6.5" fill="#3e3e3e" /><path d="M582 174.7h4.1v2.6h-4.1zM587.6 174.7h4.5v2.6h-4.5zM593.9 174.7h8v2.6h-8zM604.1 174.7h5.5v2.6h-5.5zM611.4 174.7h6.7v2.6h-6.7zM619.4 174.7h6v2.6h-6z" fill="#d0d0d0" opacity="0.55"/><rect x="580.0" y="179.8" width="52.0" height="6.5" fill="#3e3e3e" /><path d="M582 181.9h3.2v2.6h-3.2zM586.7 181.9h3.6v2.6h-3.6zM592.2 181.9h4.8v2.6h-4.8zM598.8 181.9h5.6v2.6h-5.6zM606.3 181.9h8.9v2.6h-8.9zM617.3 181.9h3.3v2.6h-3.3zM622.6 181.9h3.3v2.6h-3.3z" fill="#d0d0d0" opacity="0.55"/><rect x="580.0" y="187.0" width="52.0" height="6.5" fill="#3e3e3e" /><path d="M582 189.2h6.8v2.6h-6.8zM590.1 189.2h5.9v2.6h-5.9z" fill="#d0d0d0" opacity="0.55"/><rect x="580.0" y="194.2" width="52.0" height="6.5" fill="#3e3e3e" /><path d="M582 196.4h4.7v2.6h-4.7zM588 196.4h5.2v2.6h-5.2zM594.9 196.4h1.1v2.6h-1.1z" fill="#d0d0d0" opacity="0.55"/><rect x="580.0" y="201.5" width="52.0" height="6.5" fill="#3e3e3e" /><path d="M582 203.7h5.7v2.6h-5.7zM589.1 203.7h6.9v2.6h-6.9z" fill="#d0d0d0" opacity="0.55"/><rect x="580.0" y="208.8" width="52.0" height="6.5" fill="#3e3e3e" /><path d="M582 210.9h7.8v2.6h-7.8zM592 210.9h4v2.6h-4z" fill="#d0d0d0" opacity="0.55"/><rect x="580.0" y="216.0" width="52.0" height="6.5" fill="#3e3e3e" /><path d="M582 218.2h7.5v2.6h-7.5zM591.2 218.2h5.5v2.6h-5.5zM598.1 218.2h4v2.6h-4zM604.2 218.2h8.2v2.6h-8.2zM614 218.2h3.8v2.6h-3.8zM619.4 218.2h8.4v2.6h-8.4z" fill="#d0d0d0" opacity="0.55"/><rect x="580.0" y="223.2" width="52.0" height="6.5" fill="#3e3e3e" /><path d="M582 225.4h5.4v2.6h-5.4zM589.2 225.4h5.8v2.6h-5.8zM596.7 225.4h7.6v2.6h-7.6zM606 225.4h8.6v2.6h-8.6zM616.6 225.4h3.3v2.6h-3.3zM621.6 225.4h6.4v2.6h-6.4z" fill="#d0d0d0" opacity="0.55"/><rect x="580.0" y="230.5" width="52.0" height="6.5" fill="#3e3e3e" /><path d="M582 232.7h8.9v2.6h-8.9zM592.6 232.7h3.4v2.6h-3.4z" fill="#d0d0d0" opacity="0.55"/><rect x="580.0" y="237.8" width="52.0" height="6.5" fill="#3e3e3e" /><path d="M582 239.9h6.3v2.6h-6.3zM590.1 239.9h5.9v2.6h-5.9z" fill="#d0d0d0" opacity="0.55"/><rect x="580.0" y="245.0" width="52.0" height="6.5" fill="#3e3e3e" /><path d="M582 247.2h6.5v2.6h-6.5zM590.6 247.2h5.1v2.6h-5.1z" fill="#d0d0d0" opacity="0.55"/><rect x="580.0" y="252.2" width="52.0" height="6.5" fill="#3e3e3e" /><path d="M582 254.4h3.8v2.6h-3.8zM587.6 254.4h8.5v2.6h-8.5zM597.4 254.4h6.1v2.6h-6.1zM605.5 254.4h7.6v2.6h-7.6zM615.2 254.4h5.5v2.6h-5.5zM622.1 254.4h4.2v2.6h-4.2z" fill="#d0d0d0" opacity="0.55"/><rect x="580.0" y="259.5" width="52.0" height="6.5" fill="#3e3e3e" /><path d="M582 261.7h4.2v2.6h-4.2zM587.9 261.7h6.2v2.6h-6.2z" fill="#d0d0d0" opacity="0.55"/><rect x="580.0" y="266.8" width="52.0" height="6.5" fill="#3e3e3e" /><path d="M582 268.9h4.7v2.6h-4.7zM588.2 268.9h6.7v2.6h-6.7z" fill="#d0d0d0" opacity="0.55"/><rect x="580.0" y="274.0" width="52.0" height="6.5" fill="#3e3e3e" /><path d="M582 276.2h5.6v2.6h-5.6zM589.5 276.2h5.1v2.6h-5.1zM596.1 276.2h3.4v2.6h-3.4zM601.4 276.2h7.9v2.6h-7.9zM610.7 276.2h5.4v2.6h-5.4zM617.7 276.2h3.4v2.6h-3.4zM623.1 276.2h4.7v2.6h-4.7z" fill="#d0d0d0" opacity="0.55"/><rect x="580.0" y="281.2" width="52.0" height="6.5" fill="#3e3e3e" /><path d="M582 283.4h7.4v2.6h-7.4zM590.9 283.4h4.3v2.6h-4.3zM597.4 283.4h8.7v2.6h-8.7zM607.8 283.4h8.3v2.6h-8.3zM618.1 283.4h8.1v2.6h-8.1z" fill="#d0d0d0" opacity="0.55"/><rect x="580.0" y="288.5" width="52.0" height="6.5" fill="#3e3e3e" /><path d="M582 290.7h4.7v2.6h-4.7zM588.3 290.7h6.9v2.6h-6.9z" fill="#d0d0d0" opacity="0.55"/><rect x="580.0" y="295.8" width="52.0" height="6.5" fill="#3e3e3e" /><path d="M582 297.9h6.9v2.6h-6.9zM590.4 297.9h5.6v2.6h-5.6z" fill="#d0d0d0" opacity="0.55"/><rect x="580.0" y="303.0" width="52.0" height="6.5" fill="#3e3e3e" /><path d="M582 305.2h7.6v2.6h-7.6zM591.3 305.2h4.7v2.6h-4.7z" fill="#d0d0d0" opacity="0.55"/><rect x="580.0" y="310.2" width="52.0" height="6.5" fill="#3e3e3e" /><path d="M582 312.4h6.3v2.6h-6.3zM589.6 312.4h6.4v2.6h-6.4z" fill="#d0d0d0" opacity="0.55"/><rect x="580.0" y="317.5" width="52.0" height="6.5" fill="#3e3e3e" /><path d="M582 319.7h4v2.6h-4zM587.8 319.7h4.3v2.6h-4.3zM593.5 319.7h2.5v2.6h-2.5z" fill="#d0d0d0" opacity="0.55"/><rect x="580.0" y="324.8" width="52.0" height="6.5" fill="#3e3e3e" /><path d="M582 326.9h4.8v2.6h-4.8zM588.5 326.9h4.4v2.6h-4.4zM594.4 326.9h5.3v2.6h-5.3zM601.5 326.9h4.8v2.6h-4.8zM608 326.9h4.7v2.6h-4.7zM614.5 326.9h4.5v2.6h-4.5zM620.9 326.9h5.6v2.6h-5.6z" fill="#d0d0d0" opacity="0.55"/><rect x="580.0" y="332.0" width="52.0" height="6.5" fill="#3e3e3e" /><path d="M582 334.2h6.6v2.6h-6.6zM590.3 334.2h5.2v2.6h-5.2z" fill="#d0d0d0" opacity="0.55"/><rect x="580.0" y="339.2" width="52.0" height="6.5" fill="#3e3e3e" /><path d="M582 341.4h4v2.6h-4zM588.2 341.4h3.9v2.6h-3.9zM593.4 341.4h6.3v2.6h-6.3zM601 341.4h8.6v2.6h-8.6zM611 341.4h3.4v2.6h-3.4zM615.6 341.4h5v2.6h-5zM622 341.4h4.8v2.6h-4.8z" fill="#d0d0d0" opacity="0.55"/><rect x="580.0" y="346.5" width="52.0" height="6.5" fill="#3e3e3e" /><path d="M582 348.7h8.3v2.6h-8.3zM591.7 348.7h8.9v2.6h-8.9zM602.2 348.7h8.6v2.6h-8.6zM612 348.7h8.4v2.6h-8.4zM622.1 348.7h5.9v2.6h-5.9z" fill="#d0d0d0" opacity="0.55"/><rect x="581.0" y="350.0" width="52.0" height="5.0" fill="#5a6282" /></svg><div class="wheel" style="left:17.1px;top:36.2px;"></div><div class="sv" style="left:31.8px;top:51.0px;background:linear-gradient(to bottom,rgba(0,0,0,0),#000),linear-gradient(to right,#fff,#e07020);"></div><svg width="635" height="355" viewBox="0 0 635 355"><rect x="596.0" y="30.0" width="24.0" height="51.5" fill="#fff" /><rect x="596.0" y="51.0" width="24.0" height="11.0" fill="#bdbdbd" opacity="0.6"/><path d="M598,46 L611,43 L619,60" stroke="#a04040" stroke-width="0.6" fill="none"/><rect x="527" y="39" width="105" height="20.7" rx="4.5" fill="#0e0d10" opacity="0.86"/><rect x="530.5" y="42.3" width="5" height="5" rx="1.5" fill="#e07070"/><rect x="537" y="42.3" width="5" height="5" rx="1.5" fill="#30c090"/><rect x="543.5" y="42.3" width="5" height="5" rx="1.5" fill="#8a30d0"/><text x="550.5" y="47.7" font-size="7.4" fill="#8fa0ff" opacity="0.7">HBH</text><text x="572.1" y="47.9" font-size="7.6" font-weight="bold" fill="#eeeeee">GDW CP UC</text><text x="530" y="56.5" font-size="7.6" font-weight="bold" fill="#eeeeee">PN OE KUR WCSH USC</text><rect x="527" y="66" width="52" height="12.1" rx="4.5" fill="#0e0d10" opacity="0.86"/><rect x="530.5" y="69.3" width="5" height="5" rx="1.5" fill="#e07070"/><rect x="537" y="69.3" width="5" height="5" rx="1.5" fill="#30c090"/><rect x="543.5" y="69.3" width="5" height="5" rx="1.5" fill="#8a30d0"/><text x="550.5" y="74.7" font-size="7.4" fill="#c070d0" opacity="0.7">NAE</text><text x="570.5" y="74.9" font-size="7.6" font-weight="bold" fill="#eeeeee"></text><rect x="527" y="82" width="80" height="12.1" rx="4.5" fill="#0e0d10" opacity="0.86"/><circle cx="533.5" cy="87.8" r="3.3" fill="#e05a8a"/><path d="M532 87l1.5 2l1.5-2" stroke="#fff" stroke-width="1" fill="none"/><circle cx="541" cy="87.8" r="2.3" fill="#e8c840"/><text x="545.5" y="90.7" font-size="7.4" fill="#7aa8ff" opacity="0.7">DE</text><text x="568" y="90.9" font-size="7.6" font-weight="bold" fill="#eeeeee">RN GN</text><rect x="527" y="98" width="68" height="12.1" rx="4.5" fill="#0e0d10" opacity="0.86"/><circle cx="533.5" cy="103.8" r="3.3" fill="#8a3cf0"/><path d="M532 103l1.5 2l1.5-2" stroke="#fff" stroke-width="1" fill="none"/><text x="539.5" y="106.7" font-size="7.4" fill="#8fa0ff" opacity="0.7">G</text><text x="550.6" y="106.9" font-size="7.6" font-weight="bold" fill="#eeeeee">EHC EMA</text><rect x="527" y="114.4" width="106" height="20.7" rx="4.5" fill="#0e0d10" opacity="0.86"/><circle cx="533.5" cy="120.2" r="3.3" fill="#9b59d0"/><path d="M532 119.4l1.5 2l1.5-2" stroke="#fff" stroke-width="1" fill="none"/><text x="539.5" y="123.1" font-size="7.4" fill="#c070d0" opacity="0.7">NHC</text><text x="562.8" y="123.3" font-size="7.6" font-weight="bold" fill="#eeeeee">PPNS RODE SE</text><text x="530" y="131.9" font-size="7.6" font-weight="bold" fill="#eeeeee">ABS AO GUKR DM</text><rect x="527" y="138.6" width="83" height="12.1" rx="4.5" fill="#0e0d10" opacity="0.86"/><rect x="530.5" y="141.9" width="5" height="5" rx="1.5" fill="#e07070"/><rect x="537" y="141.9" width="5" height="5" rx="1.5" fill="#30c090"/><rect x="543.5" y="141.9" width="5" height="5" rx="1.5" fill="#8a30d0"/><text x="550.5" y="147.3" font-size="7.4" fill="#7aa8ff" opacity="0.7">HGB</text><text x="574.3" y="147.5" font-size="7.6" font-weight="bold" fill="#eeeeee">AARM</text><rect x="527" y="154" width="98" height="20.7" rx="4.5" fill="#0e0d10" opacity="0.86"/><circle cx="533.5" cy="159.8" r="3.3" fill="#8a3cf0"/><path d="M532 159l1.5 2l1.5-2" stroke="#fff" stroke-width="1" fill="none"/><circle cx="541" cy="159.8" r="2.3" fill="#e8c840"/><text x="545.5" y="162.7" font-size="7.4" fill="#8fa0ff" opacity="0.7">PM</text><text x="561.7" y="162.9" font-size="7.6" font-weight="bold" fill="#eeeeee">UAES RCWD</text><text x="530" y="171.5" font-size="7.6" font-weight="bold" fill="#eeeeee">AEGS NMS RHP MWPN</text><rect x="527" y="177.4" width="91" height="12.1" rx="4.5" fill="#0e0d10" opacity="0.86"/><circle cx="533.5" cy="183.2" r="3.3" fill="#9b59d0"/><path d="M532 182.4l1.5 2l1.5-2" stroke="#fff" stroke-width="1" fill="none"/><circle cx="541" cy="183.2" r="2.3" fill="#e8c840"/><text x="545.5" y="186.1" font-size="7.4" fill="#c070d0" opacity="0.7">WU</text><text x="559.7" y="186.3" font-size="7.6" font-weight="bold" fill="#eeeeee">ABSK MSGM</text><rect x="560" y="154.5" width="65" height="19" fill="#0e0d10"/><path d="M562.0,171 L562.0,161 C562.0,154.5 575.0,154.5 575.0,161 L575.0,171 Z" fill="#2fd0c8"/><path d="M565.0,163 h2 M570.0,163 h2 M566.0,166 h5" stroke="#0a4a48" stroke-width="0.8"/><path d="M576.5,171 L576.5,161 C576.5,154.5 589.5,154.5 589.5,161 L589.5,171 Z" fill="#2fd0c8"/><path d="M579.5,163 h2 M584.5,163 h2 M580.5,166 h5" stroke="#0a4a48" stroke-width="0.8"/><path d="M591.0,171 L591.0,161 C591.0,154.5 604.0,154.5 604.0,161 L604.0,171 Z" fill="#2fd0c8"/><path d="M594.0,163 h2 M599.0,163 h2 M595.0,166 h5" stroke="#0a4a48" stroke-width="0.8"/><path d="M605.5,171 L605.5,161 C605.5,154.5 618.5,154.5 618.5,161 L618.5,171 Z" fill="#2fd0c8"/><path d="M608.5,163 h2 M613.5,163 h2 M609.5,166 h5" stroke="#0a4a48" stroke-width="0.8"/></svg></div></body></html>
